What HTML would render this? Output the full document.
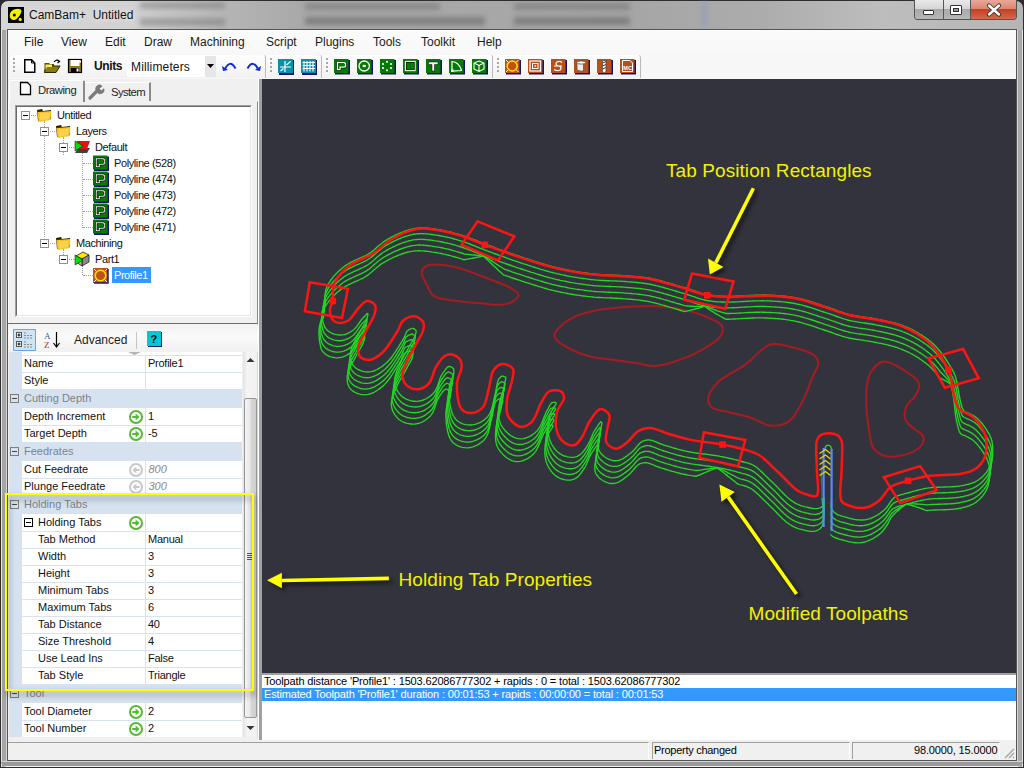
<!DOCTYPE html>
<html><head><meta charset="utf-8">
<style>
*{margin:0;padding:0;box-sizing:border-box}
html,body{width:1024px;height:768px;overflow:hidden;background:#2a2a2a}
body{font-family:"Liberation Sans",sans-serif;position:relative;font-size:12px;color:#000}
.a{position:absolute;white-space:nowrap}
svg{position:absolute;overflow:visible}
.mi{top:35px;font-size:12px;color:#1a1a1a;line-height:14px}
.canvas{left:262px;top:79px;width:754px;height:594px;background:#33333d}
.t11{font-size:11px;line-height:13px;letter-spacing:-0.15px}
.lab{position:absolute;font-size:11px;line-height:13px;color:#111;white-space:nowrap}
</style></head><body>
<div class="a" style="left:0;top:0;width:1024px;height:768px;border-radius:8px 8px 0 0;background:linear-gradient(90deg,#d6d6d6 0,#d2d2d2 130px,#b4b4b4 230px,#a9a9a9 300px,#a6a6a6 640px,#acacac 760px,#bdbdbd 880px,#b5b5b5 1024px);border:1px solid #2e2e2e"></div>
<div class="a" style="left:140px;top:2px;width:85px;height:7px;background:rgba(110,110,110,0.45);filter:blur(2.5px)"></div>
<div class="a" style="left:140px;top:18px;width:85px;height:8px;background:rgba(110,110,110,0.45);filter:blur(2.5px)"></div>
<div class="a" style="left:305px;top:3px;width:135px;height:7px;background:rgba(80,80,80,0.35);filter:blur(2.5px)"></div>
<div class="a" style="left:305px;top:17px;width:180px;height:8px;background:rgba(70,70,70,0.4);filter:blur(2.5px)"></div>
<div class="a" style="left:514px;top:3px;width:116px;height:7px;background:rgba(80,80,80,0.35);filter:blur(2.5px)"></div>
<div class="a" style="left:514px;top:17px;width:116px;height:8px;background:rgba(70,70,70,0.4);filter:blur(2.5px)"></div>
<div class="a" style="left:703px;top:0px;width:3px;height:28px;background:rgba(120,150,200,0.6);filter:blur(2.5px)"></div>
<div class="a" style="left:1px;top:30px;width:6px;height:737px;background:linear-gradient(90deg,#e6e6e6 0,#e6e6e6 1px,#a5a5a5 1px,#a5a5a5 5px,#d6d6d6 5px)"></div>
<div class="a" style="left:1017px;top:30px;width:6px;height:737px;background:linear-gradient(90deg,#d8d8d8 0,#d8d8d8 1px,#a8a8a8 1px,#a8a8a8 5px,#e6e6e6 5px)"></div>
<div class="a" style="left:1px;top:761px;width:1022px;height:6px;background:linear-gradient(#d4d4d4 0,#d4d4d4 1px,#999 1px,#9c9c9c 5px,#f0f0f0 5px);border-radius:0 0 6px 6px"></div>
<svg style="left:8px;top:7px" width="16" height="16"><rect width="16" height="16" fill="#000"/><path d="M3,12 C0.5,9 2,4 6,2.5 C9.5,1 14,1.5 13.5,4.5 C13,7 11,9.5 9,11.5 C7,13.5 4.5,13.5 3,12Z" fill="#f2f200"/><circle cx="6.3" cy="8" r="1.5" fill="#000"/><circle cx="12.2" cy="12.4" r="1.6" fill="#f2f200"/></svg>
<div class="a" style="left:29px;top:8px;font-size:12px;line-height:14px;color:#111;text-shadow:0 0 6px rgba(255,255,255,0.9)">CamBam+&nbsp;&nbsp;Untitled</div>
<div class="a" style="left:914px;top:0;width:103px;height:20px;border:1px solid #555;border-top:none;border-radius:0 0 4px 4px;overflow:hidden"><div class="a" style="left:0;top:0;width:28px;height:19px;background:linear-gradient(#e9e9e9,#d6d6d6 45%,#a9a9a9 50%,#b7b7b7)"></div><div class="a" style="left:28px;top:0;width:1px;height:19px;background:#555"></div><div class="a" style="left:29px;top:0;width:26px;height:19px;background:linear-gradient(#e9e9e9,#d6d6d6 45%,#a9a9a9 50%,#b7b7b7)"></div><div class="a" style="left:55px;top:0;width:1px;height:19px;background:#555"></div><div class="a" style="left:56px;top:0;width:47px;height:19px;background:linear-gradient(#e9a89a,#dd8672 45%,#c8401f 50%,#d2694f)"></div></div>
<div class="a" style="left:923px;top:10px;width:11px;height:5px;background:#fff;border:1px solid #333;border-radius:1px"></div>
<div class="a" style="left:950px;top:5px;width:12px;height:10px;background:#fff;border:1px solid #333;border-radius:1px"></div><div class="a" style="left:953px;top:8px;width:6px;height:4px;background:#999;border:1px solid #333"></div>
<svg style="left:987px;top:4px" width="14" height="12"><path d="M2,1.5 L12,10.5 M12,1.5 L2,10.5" stroke="#333" stroke-width="4.2" stroke-linecap="round"/><path d="M2,1.5 L12,10.5 M12,1.5 L2,10.5" stroke="#fff" stroke-width="2.4" stroke-linecap="round"/></svg>
<div class="a" style="left:7px;top:29px;width:1010px;height:732px;border:1px solid #555;background:#f0f0f0"></div><div class="a" style="left:8px;top:30px;width:1008px;height:730px;border-left:1px solid #fff;border-top:1px solid #fff"></div>
<div class="a" style="left:8px;top:30px;width:1008px;height:24px;background:linear-gradient(#fbfbfb,#f8f8f8)"></div>
<div class="a mi" style="left:24px">File</div>
<div class="a mi" style="left:61px">View</div>
<div class="a mi" style="left:105px">Edit</div>
<div class="a mi" style="left:144px">Draw</div>
<div class="a mi" style="left:190px">Machining</div>
<div class="a mi" style="left:266px">Script</div>
<div class="a mi" style="left:315px">Plugins</div>
<div class="a mi" style="left:373px">Tools</div>
<div class="a mi" style="left:421px">Toolkit</div>
<div class="a mi" style="left:477px">Help</div>
<div class="a" style="left:8px;top:54px;width:1008px;height:25px;background:#f7f7f7"></div>
<div class="a" style="left:10px;top:55px;width:256px;height:23px;border-radius:3px 3px 0 0;background:linear-gradient(#fdfdfd,#f8f8f8 50%,#f2f2f2);border-right:1px solid #b9b9b9"></div>
<div class="a" style="left:13px;top:58px;width:2px;height:14px;background:repeating-linear-gradient(#a8a8a8 0 2px,transparent 2px 4px)"></div>
<div class="a" style="left:267px;top:55px;width:55px;height:23px;border-radius:3px 3px 0 0;background:linear-gradient(#fdfdfd,#f8f8f8 50%,#f2f2f2);border-right:1px solid #b9b9b9"></div>
<div class="a" style="left:270px;top:58px;width:2px;height:14px;background:repeating-linear-gradient(#a8a8a8 0 2px,transparent 2px 4px)"></div>
<div class="a" style="left:323px;top:55px;width:170px;height:23px;border-radius:3px 3px 0 0;background:linear-gradient(#fdfdfd,#f8f8f8 50%,#f2f2f2);border-right:1px solid #b9b9b9"></div>
<div class="a" style="left:326px;top:58px;width:2px;height:14px;background:repeating-linear-gradient(#a8a8a8 0 2px,transparent 2px 4px)"></div>
<div class="a" style="left:494px;top:55px;width:147px;height:23px;border-radius:3px 3px 0 0;background:linear-gradient(#fdfdfd,#f8f8f8 50%,#f2f2f2);border-right:1px solid #b9b9b9"></div>
<div class="a" style="left:497px;top:58px;width:2px;height:14px;background:repeating-linear-gradient(#a8a8a8 0 2px,transparent 2px 4px)"></div>
<svg style="left:24px;top:59px" width="12" height="14"><path d="M0.75,0.75 H7.5 L10.75,4 V13.25 H0.75Z" fill="#fff" stroke="#000" stroke-width="1.5"/><path d="M7.5,0.75 V4 H10.75" fill="none" stroke="#000" stroke-width="1"/></svg>
<svg style="left:44px;top:59px" width="17" height="14"><path d="M0.5,4 H5 L6,5 H10 V13.5 H0.5Z" fill="#5a5000"/><path d="M2,7 H16 L12,13.5 H0.5Z" fill="#8a7d10" stroke="#2a2500" stroke-width="1"/><path d="M1.5,5.5 H8 V8 H3 L1.5,11Z" fill="#f8f060"/><path d="M10,3 Q12,0 15,2" stroke="#000" stroke-width="1.2" fill="none"/><path d="M13.5,1 L15.5,2.5 L13.5,4" stroke="#000" stroke-width="1.2" fill="none"/></svg>
<svg style="left:68px;top:59px" width="15" height="15"><rect x="0.5" y="0.5" width="13" height="13" fill="#8a7d10" stroke="#000" stroke-width="1.2"/><rect x="2.5" y="1" width="9" height="6" fill="#fff"/><rect x="3" y="9" width="8" height="4.5" fill="#000"/><rect x="8.5" y="9.5" width="2" height="3" fill="#fff"/><rect x="11" y="1.5" width="2" height="2" fill="#fff"/></svg>
<div class="a" style="left:94px;top:59px;font-size:12px;font-weight:bold;line-height:14px;color:#111;letter-spacing:-0.4px">Units</div>
<div class="a" style="left:127px;top:56px;width:89px;height:21px;background:#fff"></div>
<div class="a" style="left:205px;top:56px;width:11px;height:21px;background:#e6e6e6"></div>
<svg style="left:207px;top:64px" width="7" height="4"><path d="M0,0 H7 L3.5,4Z" fill="#000"/></svg>
<div class="a" style="left:131px;top:60px;font-size:12px;line-height:14px;color:#111;letter-spacing:0.15px">Millimeters</div>
<svg style="left:222px;top:61px" width="16" height="10"><path d="M3,8 Q8,-2 13.5,7.5" stroke="#0a28e0" stroke-width="2" fill="none"/><path d="M0,5 L1,10 L6,9Z" fill="#0a28e0"/></svg>
<svg style="left:246px;top:61px" width="16" height="10"><path d="M1.5,7.5 Q7,-2 12,8" stroke="#0a28e0" stroke-width="2" fill="none"/><path d="M15,5 L14,10 L9,9Z" fill="#0a28e0"/></svg>
<svg style="left:278px;top:59px" width="16" height="16"><rect x="1" y="1" width="15" height="15" fill="#141470"/><rect width="15" height="14" fill="#0891a8"/><path d="M7,2 V13 M2,8 H13 M8.5,6 L12.5,2.5 M2.5,12 L5.5,9.5" stroke="#fff" stroke-width="1.2"/></svg>
<svg style="left:301px;top:59px" width="16" height="16"><rect x="1" y="1" width="15" height="15" fill="#141470"/><rect width="15" height="14" fill="#0891a8"/><path d="M3,2 V12.5 M6,2 V12.5 M9,2 V12.5 M12,2 V12.5 M1.5,3.5 H14 M1.5,6.5 H14 M1.5,9.5 H14" stroke="#fff" stroke-width="1.1"/><rect x="1.5" y="3" width="12" height="9" fill="none"/></svg>
<svg style="left:334px;top:59px" width="16" height="16"><rect x="1" y="1" width="15" height="14.5" fill="#141470"/><rect width="14.5" height="14" fill="#047a04"/><path d="M2.5,2.5 H10 Q12.5,2.5 12.5,5 V7 Q12.5,9 10,9 H7 V11.5 H2.5Z" fill="#fff" stroke="#000" stroke-width="0.6"/><path d="M4,4 H9.5 Q11,4 11,5.5 V6.5 Q11,7.5 9.5,7.5 H5.5 V10 H4Z" fill="#047a04"/></svg>
<svg style="left:357px;top:59px" width="16" height="16"><rect x="1" y="1" width="15" height="14.5" fill="#141470"/><rect width="14.5" height="14" fill="#047a04"/><ellipse cx="7.2" cy="7" rx="5.2" ry="5" fill="none" stroke="#fff" stroke-width="1.3"/><ellipse cx="7.2" cy="7" rx="1.8" ry="1.2" fill="#fff"/></svg>
<svg style="left:380px;top:59px" width="16" height="16"><rect x="1" y="1" width="15" height="14.5" fill="#141470"/><rect width="14.5" height="14" fill="#047a04"/><circle cx="7" cy="2.8" r="1.1" fill="#fff"/><circle cx="11" cy="5" r="1.1" fill="#fff"/><circle cx="11" cy="9" r="1.1" fill="#fff"/><circle cx="7" cy="11.3" r="1.1" fill="#fff"/><circle cx="3" cy="9" r="1.1" fill="#fff"/><circle cx="3" cy="5" r="1.1" fill="#fff"/></svg>
<svg style="left:403px;top:59px" width="16" height="16"><rect x="1" y="1" width="15" height="14.5" fill="#141470"/><rect width="14.5" height="14" fill="#047a04"/><rect x="2.5" y="2.5" width="9.5" height="9" fill="none" stroke="#fff" stroke-width="1.3"/><rect x="3.3" y="3.3" width="8" height="7.5" fill="none" stroke="#000" stroke-width="0.6"/></svg>
<svg style="left:426px;top:59px" width="16" height="16"><rect x="1" y="1" width="15" height="14.5" fill="#141470"/><rect width="14.5" height="14" fill="#047a04"/><path d="M2.5,3 H12 V5.5 H8.5 V12 H6 V5.5 H2.5Z" fill="#fff" stroke="#000" stroke-width="0.5"/></svg>
<svg style="left:449px;top:59px" width="16" height="16"><rect x="1" y="1" width="15" height="14.5" fill="#141470"/><rect width="14.5" height="14" fill="#047a04"/><path d="M3,12 V2.5 Q10,3 12.5,11.5 Z" fill="none" stroke="#fff" stroke-width="1.2"/><rect x="2" y="10.5" width="2.5" height="2.5" fill="#fff"/></svg>
<svg style="left:472px;top:59px" width="16" height="16"><rect x="1" y="1" width="15" height="14.5" fill="#141470"/><rect width="14.5" height="14" fill="#047a04"/><path d="M7,2 L12,4 V10 L7,12.5 L2,10 V4Z M2,4 L7,6.5 L12,4 M7,6.5 V12.5" fill="none" stroke="#fff" stroke-width="1.1"/></svg>
<svg style="left:505px;top:59px" width="16" height="16"><rect x="1" y="1" width="15" height="14.5" fill="#141470"/><rect width="14.5" height="14" fill="#b8501c"/><circle cx="7.2" cy="7" r="5" fill="#c0501c" stroke="#ffe800" stroke-width="1.5"/><path d="M1,1 L3,3 M13.5,1 L11.5,3 M1,13 L3,11 M13.5,13 L11.5,11" stroke="#fff"/></svg>
<svg style="left:528px;top:59px" width="16" height="16"><rect x="1" y="1" width="15" height="14.5" fill="#141470"/><rect width="14.5" height="14" fill="#b8501c"/><rect x="2" y="2" width="10.5" height="10" fill="none" stroke="#fff" stroke-width="1.2"/><rect x="4.5" y="4.5" width="5.5" height="5" fill="none" stroke="#fff" stroke-width="1"/><rect x="6.5" y="6.3" width="1.6" height="1.5" fill="#fff"/></svg>
<svg style="left:551px;top:59px" width="16" height="16"><rect x="1" y="1" width="15" height="14.5" fill="#141470"/><rect width="14.5" height="14" fill="#b8501c"/><path d="M11,3.5 Q9,1.5 6,3 Q4,4.5 6,6.5 L9,7.5 Q11,9 9,11 Q6,12.5 3,10.5 M3,7 H11" fill="none" stroke="#fff" stroke-width="1.2"/></svg>
<svg style="left:574px;top:59px" width="16" height="16"><rect x="1" y="1" width="15" height="14.5" fill="#141470"/><rect width="14.5" height="14" fill="#b8501c"/><path d="M3,3.5 V11 Q7,13.5 11.5,11 V3.5" fill="#eee" stroke="#555" stroke-width="0.8"/><ellipse cx="7.2" cy="3.5" rx="4.3" ry="1.6" fill="#fff" stroke="#555" stroke-width="0.8"/><path d="M9,5 V12 Q10.5,11.5 11.5,11 V4.5Z" fill="#b8501c"/></svg>
<svg style="left:597px;top:59px" width="16" height="16"><rect x="1" y="1" width="15" height="14.5" fill="#141470"/><rect width="14.5" height="14" fill="#b8501c"/><path d="M5.5,1.5 H9 V12.5 L7.2,14 L5.5,12.5Z" fill="#fff" stroke="#333" stroke-width="0.6"/><path d="M5.5,4 L9,2.5 M5.5,7 L9,5.5 M5.5,10 L9,8.5" stroke="#333" stroke-width="1"/></svg>
<svg style="left:620px;top:59px" width="16" height="16"><rect x="1" y="1" width="15" height="14.5" fill="#141470"/><rect width="14.5" height="14" fill="#b8501c"/><path d="M2.5,1.5 H10 L12.5,4 V12.5 H2.5Z" fill="none" stroke="#fff" stroke-width="1"/><text x="3.3" y="11" font-family="Liberation Sans" font-weight="bold" font-size="5.5" fill="#fff">MC</text></svg>
<div class="a" style="left:8px;top:79px;width:250px;height:662px;background:#f0f0f0"></div>
<div class="a" style="left:8px;top:101px;width:250px;height:223px;border:1px solid #fff;border-right:1px solid #8a8a8a;background:#fff"></div>
<div class="a" style="left:9px;top:101px;width:248px;height:222px;background:#f0f0f0"></div>
<div class="a" style="left:9px;top:80px;width:76px;height:22px;border:1px solid #fff;border-right:2px solid #8a8a8a;border-bottom:none;background:#f0f0f0;border-radius:2px 2px 0 0"></div>
<div class="a" style="left:85px;top:82px;width:66px;height:19px;border-top:1px solid #fff;border-right:2px solid #8a8a8a;background:#f0f0f0"></div>
<svg style="left:18.5px;top:82px" width="13" height="14"><path d="M1.5,0.5 H8.5 L11.5,3.5 V12.5 H1.5 Z" fill="#fff" stroke="#000" stroke-width="1.3"/></svg>
<div class="a lab" style="left:38px;top:84px;font-size:11.3px;line-height:13px;color:#1e1e1e;letter-spacing:-0.45px">Drawing</div>
<svg style="left:88px;top:84px" width="18" height="16"><path d="M2,14 L9,7" stroke="#7a7a7a" stroke-width="3.2" stroke-linecap="round"/><path d="M8.5,7.5 A4,4 0 1 1 14.5,2.2 L11.6,4.6 L13.2,6.6 L16,4.3 A4,4 0 0 1 8.5,7.5Z" fill="#7a7a7a"/></svg>
<div class="a lab" style="left:111px;top:86px;font-size:11.3px;line-height:13px;color:#1e1e1e;letter-spacing:-0.6px">System</div>
<div class="a" style="left:15px;top:105px;width:237px;height:212px;border:1px solid;border-color:#a0a0a0 #fff #fff #a0a0a0;background:#fff"></div><div class="a" style="left:16px;top:106px;width:235px;height:210px;border:1px solid;border-color:#696969 #e3e3e3 #e3e3e3 #696969;background:#fff"></div>
<div class="a" style="left:44px;top:121px;width:1px;height:116px;border-left:1px dotted #a0a0a0"></div>
<div class="a" style="left:63px;top:137px;width:1px;height:18px;border-left:1px dotted #a0a0a0"></div>
<div class="a" style="left:82px;top:153px;width:1px;height:75px;border-left:1px dotted #a0a0a0"></div>
<div class="a" style="left:63px;top:249px;width:1px;height:10px;border-left:1px dotted #a0a0a0"></div>
<div class="a" style="left:82px;top:265px;width:1px;height:10px;border-left:1px dotted #a0a0a0"></div>
<div class="a" style="left:21px;top:111px;width:9px;height:9px;border:1px solid #919191;background:#fff"></div><div class="a" style="left:23px;top:115px;width:5px;height:1px;background:#000"></div>
<div class="a" style="left:31px;top:115px;width:5px;height:1px;border-top:1px dotted #a0a0a0"></div>
<svg style="left:36px;top:107px" width="17" height="16"><path d="M1,3 L6,2 L7,4 L15,3 L15,12 L2,14 Z" fill="#2b2000"/><path d="M1.5,5 L15.5,4 L14.5,13 L2.5,15 Z" fill="#f7c01f"/><path d="M4,6 L14,5.5 L13.3,12 L3.5,13.5 Z" fill="#fbd24b"/></svg>
<div class="a lab" style="left:57px;top:109px;letter-spacing:-0.4px">Untitled</div>
<div class="a" style="left:40px;top:127px;width:9px;height:9px;border:1px solid #919191;background:#fff"></div><div class="a" style="left:42px;top:131px;width:5px;height:1px;background:#000"></div>
<div class="a" style="left:50px;top:131px;width:5px;height:1px;border-top:1px dotted #a0a0a0"></div>
<svg style="left:55px;top:123px" width="17" height="16"><path d="M1,3 L6,2 L7,4 L15,3 L15,12 L2,14 Z" fill="#2b2000"/><path d="M1.5,5 L15.5,4 L14.5,13 L2.5,15 Z" fill="#f7c01f"/><path d="M4,6 L14,5.5 L13.3,12 L3.5,13.5 Z" fill="#fbd24b"/></svg>
<div class="a lab" style="left:76px;top:125px;letter-spacing:-0.4px">Layers</div>
<div class="a" style="left:59px;top:143px;width:9px;height:9px;border:1px solid #919191;background:#fff"></div><div class="a" style="left:61px;top:147px;width:5px;height:1px;background:#000"></div>
<div class="a" style="left:69px;top:147px;width:5px;height:1px;border-top:1px dotted #a0a0a0"></div>
<svg style="left:74px;top:139px" width="17" height="16"><path d="M4,9 L16,9 L13,14 L1,14Z" fill="#404040"/><path d="M3,2 L16,2 L13,10 L1,10Z" fill="#e81010"/><path d="M1,2 L9,7 L1,12Z" fill="#00dd00" stroke="#003300" stroke-width="0.6"/></svg>
<div class="a lab" style="left:95px;top:141px;letter-spacing:-0.4px">Default</div>
<div class="a" style="left:83px;top:163px;width:10px;height:1px;border-top:1px dotted #a0a0a0"></div>
<svg style="left:93px;top:155px" width="16" height="16"><rect x="1" y="1.5" width="15" height="14.5" fill="#141470"/><rect x="0" y="0.5" width="14.5" height="14" fill="#047a04"/><path d="M2.5,3 H10 Q12.5,3 12.5,5.5 V7.5 Q12.5,10 10,10 H7 V12.5 H2.5Z" fill="#fff" stroke="#000" stroke-width="0.6"/><path d="M4,4.5 H9.5 Q11,4.5 11,6 V7 Q11,8.5 9.5,8.5 H5.5 V11 H4Z" fill="#047a04" stroke="#000" stroke-width="0.6"/></svg>
<div class="a lab" style="left:114px;top:157px;letter-spacing:-0.4px">Polyline (528)</div>
<div class="a" style="left:83px;top:179px;width:10px;height:1px;border-top:1px dotted #a0a0a0"></div>
<svg style="left:93px;top:171px" width="16" height="16"><rect x="1" y="1.5" width="15" height="14.5" fill="#141470"/><rect x="0" y="0.5" width="14.5" height="14" fill="#047a04"/><path d="M2.5,3 H10 Q12.5,3 12.5,5.5 V7.5 Q12.5,10 10,10 H7 V12.5 H2.5Z" fill="#fff" stroke="#000" stroke-width="0.6"/><path d="M4,4.5 H9.5 Q11,4.5 11,6 V7 Q11,8.5 9.5,8.5 H5.5 V11 H4Z" fill="#047a04" stroke="#000" stroke-width="0.6"/></svg>
<div class="a lab" style="left:114px;top:173px;letter-spacing:-0.4px">Polyline (474)</div>
<div class="a" style="left:83px;top:195px;width:10px;height:1px;border-top:1px dotted #a0a0a0"></div>
<svg style="left:93px;top:187px" width="16" height="16"><rect x="1" y="1.5" width="15" height="14.5" fill="#141470"/><rect x="0" y="0.5" width="14.5" height="14" fill="#047a04"/><path d="M2.5,3 H10 Q12.5,3 12.5,5.5 V7.5 Q12.5,10 10,10 H7 V12.5 H2.5Z" fill="#fff" stroke="#000" stroke-width="0.6"/><path d="M4,4.5 H9.5 Q11,4.5 11,6 V7 Q11,8.5 9.5,8.5 H5.5 V11 H4Z" fill="#047a04" stroke="#000" stroke-width="0.6"/></svg>
<div class="a lab" style="left:114px;top:189px;letter-spacing:-0.4px">Polyline (473)</div>
<div class="a" style="left:83px;top:211px;width:10px;height:1px;border-top:1px dotted #a0a0a0"></div>
<svg style="left:93px;top:203px" width="16" height="16"><rect x="1" y="1.5" width="15" height="14.5" fill="#141470"/><rect x="0" y="0.5" width="14.5" height="14" fill="#047a04"/><path d="M2.5,3 H10 Q12.5,3 12.5,5.5 V7.5 Q12.5,10 10,10 H7 V12.5 H2.5Z" fill="#fff" stroke="#000" stroke-width="0.6"/><path d="M4,4.5 H9.5 Q11,4.5 11,6 V7 Q11,8.5 9.5,8.5 H5.5 V11 H4Z" fill="#047a04" stroke="#000" stroke-width="0.6"/></svg>
<div class="a lab" style="left:114px;top:205px;letter-spacing:-0.4px">Polyline (472)</div>
<div class="a" style="left:83px;top:227px;width:10px;height:1px;border-top:1px dotted #a0a0a0"></div>
<svg style="left:93px;top:219px" width="16" height="16"><rect x="1" y="1.5" width="15" height="14.5" fill="#141470"/><rect x="0" y="0.5" width="14.5" height="14" fill="#047a04"/><path d="M2.5,3 H10 Q12.5,3 12.5,5.5 V7.5 Q12.5,10 10,10 H7 V12.5 H2.5Z" fill="#fff" stroke="#000" stroke-width="0.6"/><path d="M4,4.5 H9.5 Q11,4.5 11,6 V7 Q11,8.5 9.5,8.5 H5.5 V11 H4Z" fill="#047a04" stroke="#000" stroke-width="0.6"/></svg>
<div class="a lab" style="left:114px;top:221px;letter-spacing:-0.4px">Polyline (471)</div>
<div class="a" style="left:40px;top:239px;width:9px;height:9px;border:1px solid #919191;background:#fff"></div><div class="a" style="left:42px;top:243px;width:5px;height:1px;background:#000"></div>
<div class="a" style="left:50px;top:243px;width:5px;height:1px;border-top:1px dotted #a0a0a0"></div>
<svg style="left:55px;top:235px" width="17" height="16"><path d="M1,3 L6,2 L7,4 L15,3 L15,12 L2,14 Z" fill="#2b2000"/><path d="M1.5,5 L15.5,4 L14.5,13 L2.5,15 Z" fill="#f7c01f"/><path d="M4,6 L14,5.5 L13.3,12 L3.5,13.5 Z" fill="#fbd24b"/></svg>
<div class="a lab" style="left:76px;top:237px;letter-spacing:-0.4px">Machining</div>
<div class="a" style="left:59px;top:255px;width:9px;height:9px;border:1px solid #919191;background:#fff"></div><div class="a" style="left:61px;top:259px;width:5px;height:1px;background:#000"></div>
<div class="a" style="left:69px;top:259px;width:5px;height:1px;border-top:1px dotted #a0a0a0"></div>
<svg style="left:74px;top:251px" width="17" height="16"><path d="M2,5 L9,1 L15,4 L8,8Z" fill="#ffe800" stroke="#222" stroke-width="0.8"/><path d="M8,8 L15,4 L15,11 L8,15Z" fill="#8a8a8a" stroke="#222" stroke-width="0.8"/><path d="M2,5 L8,8 L8,15 L2,11Z" fill="#b0b0b0" stroke="#222" stroke-width="0.8"/><path d="M1,4 L9,9 L1,14Z" fill="#00dd00" stroke="#003300" stroke-width="0.6"/></svg>
<div class="a lab" style="left:95px;top:253px;letter-spacing:-0.4px">Part1</div>
<div class="a" style="left:83px;top:275px;width:10px;height:1px;border-top:1px dotted #a0a0a0"></div>
<svg style="left:93px;top:268px" width="16" height="16"><rect x="0" y="0" width="15" height="15" fill="#c0501c"/><path d="M15,1 V15 H1" stroke="#1a1a8a" stroke-width="1.5" fill="none"/><circle cx="7.5" cy="7.5" r="5.3" fill="#c0501c" stroke="#ffe800" stroke-width="1.6"/><path d="M1,1 L3,3 M14,1 L12,3 M1,14 L3,12 M14,14 L12,12" stroke="#fff" stroke-width="1"/></svg>
<div class="a" style="left:112px;top:267px;width:39px;height:16px;background:#3399ff"></div>
<div class="a lab" style="left:114px;top:269px;color:#fff;letter-spacing:-0.45px">Profile1</div>
<div class="a" style="left:8px;top:323px;width:250px;height:1px;background:#6d6d6d"></div>
<div class="a" style="left:8px;top:324px;width:250px;height:28px;background:linear-gradient(#f1f1f1,#fafafa 40%,#f1f1f1)"></div>
<div class="a" style="left:13px;top:329px;width:23px;height:22px;background:#cde4f7;border:1px solid #66a7e8"></div>
<svg style="left:16px;top:332px" width="18" height="16"><rect x="0.5" y="0.5" width="5" height="5" fill="#fff" stroke="#555"/><path d="M1.5,3 h3 M3,1.5 v3" stroke="#000"/><rect x="0.5" y="9.5" width="5" height="5" fill="#fff" stroke="#555"/><path d="M1.5,12 h3 M3,10.5 v3" stroke="#000"/><path d="M8,1 h3 M8,3.5 h8 M8,6 h8 M8,10 h3 M8,12.5 h8 M8,15 h8" stroke="#8a8a8a" stroke-dasharray="2,1"/></svg>
<svg style="left:44px;top:331px" width="18" height="18"><text x="0" y="8" font-family="Liberation Serif" font-size="9" fill="#3a5aa0">A</text><text x="0" y="17" font-family="Liberation Serif" font-size="9" fill="#a04040">Z</text><path d="M12.5,1 V15 M9.5,12 L12.5,16 L15.5,12" stroke="#000" stroke-width="1.2" fill="none"/></svg>
<div class="a lab" style="left:74px;top:333px;font-size:12px;line-height:14px;color:#1e1e1e">Advanced</div>
<div class="a" style="left:136px;top:332px;width:1px;height:17px;background:#c5c5c5"></div>
<svg style="left:147px;top:331px" width="16" height="17"><rect x="1" y="1" width="14" height="15" fill="#1a1a7a"/><rect x="0" y="0" width="14" height="15" fill="#00c8d8"/><text x="3.5" y="12" font-family="Liberation Sans" font-weight="bold" font-size="11" fill="#000">?</text></svg>
<div class="a" style="left:8px;top:352px;width:250px;height:389px;background:#f0f0f0"></div>
<div class="a" style="left:9px;top:352px;width:233px;height:385px;background:#d6e2f0"></div>
<div class="a" style="left:22px;top:352px;width:220px;height:3px;background:#fff"></div>
<div class="a" style="left:22px;top:355px;width:220px;height:1px;background:#d6e2f0"></div>
<svg style="left:128px;top:352px" width="14" height="3"><path d="M0,0 H13 L6.5,3Z" fill="#b4b4b4"/></svg>
<div class="a" style="left:22px;top:355px;width:220px;height:17px;background:#fff"></div>
<div class="a" style="left:22px;top:355px;width:220px;height:1px;background:#d9e3ef"></div>
<div class="a" style="left:145px;top:355px;width:1px;height:17px;background:#d9e3ef"></div>
<div class="a lab" style="left:24px;top:357px;">Name</div>
<div class="a lab" style="left:148px;top:357px;letter-spacing:-0.25px">Profile1</div>
<div class="a" style="left:22px;top:372px;width:220px;height:17px;background:#fff"></div>
<div class="a" style="left:22px;top:372px;width:220px;height:1px;background:#d9e3ef"></div>
<div class="a" style="left:145px;top:372px;width:1px;height:17px;background:#d9e3ef"></div>
<div class="a lab" style="left:24px;top:374px;">Style</div>
<div class="a" style="left:10px;top:394px;width:9px;height:9px;border:1px solid #7d7d7d"></div><div class="a" style="left:12px;top:398px;width:5px;height:1px;background:#444"></div>
<div class="a lab" style="left:24px;top:392px;color:#7d838c">Cutting Depth</div>
<div class="a" style="left:22px;top:408px;width:220px;height:17px;background:#fff"></div>
<div class="a" style="left:145px;top:408px;width:1px;height:17px;background:#d9e3ef"></div>
<div class="a lab" style="left:24px;top:410px;">Depth Increment</div>
<svg style="left:129px;top:409.5px" width="15" height="15"><circle cx="7" cy="7" r="6" fill="#fff" stroke="#55b935" stroke-width="2"/><path d="M3.3,5.9 H6.6 V3.4 L10.6,7 L6.6,10.6 V8.1 H3.3Z" fill="#55b935"/></svg>
<div class="a lab" style="left:148px;top:410px;letter-spacing:-0.25px">1</div>
<div class="a" style="left:22px;top:425px;width:220px;height:17px;background:#fff"></div>
<div class="a" style="left:22px;top:425px;width:220px;height:1px;background:#d9e3ef"></div>
<div class="a" style="left:145px;top:425px;width:1px;height:17px;background:#d9e3ef"></div>
<div class="a lab" style="left:24px;top:427px;">Target Depth</div>
<svg style="left:129px;top:426.5px" width="15" height="15"><circle cx="7" cy="7" r="6" fill="#fff" stroke="#55b935" stroke-width="2"/><path d="M3.3,5.9 H6.6 V3.4 L10.6,7 L6.6,10.6 V8.1 H3.3Z" fill="#55b935"/></svg>
<div class="a lab" style="left:148px;top:427px;letter-spacing:-0.25px">-5</div>
<div class="a" style="left:10px;top:447px;width:9px;height:9px;border:1px solid #7d7d7d"></div><div class="a" style="left:12px;top:451px;width:5px;height:1px;background:#444"></div>
<div class="a lab" style="left:24px;top:445px;color:#7d838c">Feedrates</div>
<div class="a" style="left:22px;top:461px;width:220px;height:17px;background:#fff"></div>
<div class="a" style="left:145px;top:461px;width:1px;height:17px;background:#d9e3ef"></div>
<div class="a lab" style="left:24px;top:463px;">Cut Feedrate</div>
<svg style="left:129px;top:462.5px" width="15" height="15"><circle cx="7" cy="7" r="6" fill="#fff" stroke="#c8c8c8" stroke-width="2"/><path d="M10.7,5.9 H7.4 V3.4 L3.4,7 L7.4,10.6 V8.1 H10.7Z" fill="#c8c8c8"/></svg>
<div class="a lab" style="left:148.5px;top:463px;font-style:italic;color:#8a8a8a">800</div>
<div class="a" style="left:22px;top:478px;width:220px;height:17px;background:#fff"></div>
<div class="a" style="left:22px;top:478px;width:220px;height:1px;background:#d9e3ef"></div>
<div class="a" style="left:145px;top:478px;width:1px;height:17px;background:#d9e3ef"></div>
<div class="a lab" style="left:24px;top:480px;">Plunge Feedrate</div>
<svg style="left:129px;top:479.5px" width="15" height="15"><circle cx="7" cy="7" r="6" fill="#fff" stroke="#c8c8c8" stroke-width="2"/><path d="M10.7,5.9 H7.4 V3.4 L3.4,7 L7.4,10.6 V8.1 H10.7Z" fill="#c8c8c8"/></svg>
<div class="a lab" style="left:148.5px;top:480px;font-style:italic;color:#8a8a8a">300</div>
<div class="a" style="left:10px;top:500px;width:9px;height:9px;border:1px solid #7d7d7d"></div><div class="a" style="left:12px;top:504px;width:5px;height:1px;background:#444"></div>
<div class="a lab" style="left:24px;top:498px;color:#7d838c">Holding Tabs</div>
<div class="a" style="left:22px;top:514px;width:220px;height:17px;background:#fff"></div>
<div class="a" style="left:145px;top:514px;width:1px;height:17px;background:#d9e3ef"></div>
<div class="a" style="left:24px;top:518px;width:9px;height:9px;border:1px solid #000"></div><div class="a" style="left:26px;top:522px;width:5px;height:1px;background:#000"></div>
<div class="a lab" style="left:38px;top:516px;">Holding Tabs</div>
<svg style="left:129px;top:515.5px" width="15" height="15"><circle cx="7" cy="7" r="6" fill="#fff" stroke="#55b935" stroke-width="2"/><path d="M3.3,5.9 H6.6 V3.4 L10.6,7 L6.6,10.6 V8.1 H3.3Z" fill="#55b935"/></svg>
<div class="a" style="left:22px;top:531px;width:220px;height:17px;background:#fff"></div>
<div class="a" style="left:22px;top:531px;width:220px;height:1px;background:#d9e3ef"></div>
<div class="a" style="left:145px;top:531px;width:1px;height:17px;background:#d9e3ef"></div>
<div class="a lab" style="left:38px;top:533px;">Tab Method</div>
<div class="a lab" style="left:148px;top:533px;letter-spacing:-0.25px">Manual</div>
<div class="a" style="left:22px;top:548px;width:220px;height:17px;background:#fff"></div>
<div class="a" style="left:22px;top:548px;width:220px;height:1px;background:#d9e3ef"></div>
<div class="a" style="left:145px;top:548px;width:1px;height:17px;background:#d9e3ef"></div>
<div class="a lab" style="left:38px;top:550px;">Width</div>
<div class="a lab" style="left:148px;top:550px;letter-spacing:-0.25px">3</div>
<div class="a" style="left:22px;top:565px;width:220px;height:17px;background:#fff"></div>
<div class="a" style="left:22px;top:565px;width:220px;height:1px;background:#d9e3ef"></div>
<div class="a" style="left:145px;top:565px;width:1px;height:17px;background:#d9e3ef"></div>
<div class="a lab" style="left:38px;top:567px;">Height</div>
<div class="a lab" style="left:148px;top:567px;letter-spacing:-0.25px">3</div>
<div class="a" style="left:22px;top:582px;width:220px;height:17px;background:#fff"></div>
<div class="a" style="left:22px;top:582px;width:220px;height:1px;background:#d9e3ef"></div>
<div class="a" style="left:145px;top:582px;width:1px;height:17px;background:#d9e3ef"></div>
<div class="a lab" style="left:38px;top:584px;">Minimum Tabs</div>
<div class="a lab" style="left:148px;top:584px;letter-spacing:-0.25px">3</div>
<div class="a" style="left:22px;top:599px;width:220px;height:17px;background:#fff"></div>
<div class="a" style="left:22px;top:599px;width:220px;height:1px;background:#d9e3ef"></div>
<div class="a" style="left:145px;top:599px;width:1px;height:17px;background:#d9e3ef"></div>
<div class="a lab" style="left:38px;top:601px;">Maximum Tabs</div>
<div class="a lab" style="left:148px;top:601px;letter-spacing:-0.25px">6</div>
<div class="a" style="left:22px;top:616px;width:220px;height:17px;background:#fff"></div>
<div class="a" style="left:22px;top:616px;width:220px;height:1px;background:#d9e3ef"></div>
<div class="a" style="left:145px;top:616px;width:1px;height:17px;background:#d9e3ef"></div>
<div class="a lab" style="left:38px;top:618px;">Tab Distance</div>
<div class="a lab" style="left:148px;top:618px;letter-spacing:-0.25px">40</div>
<div class="a" style="left:22px;top:633px;width:220px;height:17px;background:#fff"></div>
<div class="a" style="left:22px;top:633px;width:220px;height:1px;background:#d9e3ef"></div>
<div class="a" style="left:145px;top:633px;width:1px;height:17px;background:#d9e3ef"></div>
<div class="a lab" style="left:38px;top:635px;">Size Threshold</div>
<div class="a lab" style="left:148px;top:635px;letter-spacing:-0.25px">4</div>
<div class="a" style="left:22px;top:650px;width:220px;height:17px;background:#fff"></div>
<div class="a" style="left:22px;top:650px;width:220px;height:1px;background:#d9e3ef"></div>
<div class="a" style="left:145px;top:650px;width:1px;height:17px;background:#d9e3ef"></div>
<div class="a lab" style="left:38px;top:652px;">Use Lead Ins</div>
<div class="a lab" style="left:148px;top:652px;letter-spacing:-0.25px">False</div>
<div class="a" style="left:22px;top:667px;width:220px;height:17px;background:#fff"></div>
<div class="a" style="left:22px;top:667px;width:220px;height:1px;background:#d9e3ef"></div>
<div class="a" style="left:145px;top:667px;width:1px;height:17px;background:#d9e3ef"></div>
<div class="a lab" style="left:38px;top:669px;">Tab Style</div>
<div class="a lab" style="left:148px;top:669px;letter-spacing:-0.25px">Triangle</div>
<div class="a" style="left:10px;top:689px;width:9px;height:9px;border:1px solid #7d7d7d"></div><div class="a" style="left:12px;top:693px;width:5px;height:1px;background:#444"></div>
<div class="a lab" style="left:24px;top:687px;color:#7d838c">Tool</div>
<div class="a" style="left:22px;top:703px;width:220px;height:17px;background:#fff"></div>
<div class="a" style="left:145px;top:703px;width:1px;height:17px;background:#d9e3ef"></div>
<div class="a lab" style="left:24px;top:705px;">Tool Diameter</div>
<svg style="left:129px;top:704.5px" width="15" height="15"><circle cx="7" cy="7" r="6" fill="#fff" stroke="#55b935" stroke-width="2"/><path d="M3.3,5.9 H6.6 V3.4 L10.6,7 L6.6,10.6 V8.1 H3.3Z" fill="#55b935"/></svg>
<div class="a lab" style="left:148px;top:705px;letter-spacing:-0.25px">2</div>
<div class="a" style="left:22px;top:720px;width:220px;height:17px;background:#fff"></div>
<div class="a" style="left:22px;top:720px;width:220px;height:1px;background:#d9e3ef"></div>
<div class="a" style="left:145px;top:720px;width:1px;height:17px;background:#d9e3ef"></div>
<div class="a lab" style="left:24px;top:722px;">Tool Number</div>
<svg style="left:129px;top:721.5px" width="15" height="15"><circle cx="7" cy="7" r="6" fill="#fff" stroke="#55b935" stroke-width="2"/><path d="M3.3,5.9 H6.6 V3.4 L10.6,7 L6.6,10.6 V8.1 H3.3Z" fill="#55b935"/></svg>
<div class="a lab" style="left:148px;top:722px;letter-spacing:-0.25px">2</div>
<div class="a" style="left:22px;top:737px;width:220px;height:0px;background:#d9e3ef"></div>
<div class="a" style="left:243px;top:352px;width:15px;height:385px;background:linear-gradient(90deg,#e3e3e3,#f5f5f5 30%,#f0f0f0)"></div>
<div class="a" style="left:257px;top:352px;width:1px;height:385px;background:#d8d8d8"></div>
<svg style="left:246px;top:357px" width="9" height="6"><path d="M0.5,5 L4.5,1 L8.5,5Z" fill="#333"/></svg>
<svg style="left:246px;top:725px" width="9" height="6"><path d="M0.5,1 L4.5,5 L8.5,1Z" fill="#333"/></svg>
<div class="a" style="left:244px;top:398px;width:13px;height:320px;border:1px solid #979797;border-radius:2px;background:linear-gradient(90deg,#f4f4f4,#e8e8e8 45%,#d6d6d6 55%,#cfcfcf)"></div>
<div class="a" style="left:247px;top:553px;width:6px;height:7px;background:repeating-linear-gradient(#555 0 1px,transparent 1px 2px)"></div>
<div class="a" style="left:8px;top:737px;width:250px;height:4px;background:#f0f0f0"></div>
<div class="a" style="left:5px;top:493px;width:248.5px;height:197.5px;border:2.5px solid #ffff00;filter:drop-shadow(2px 4px 3px rgba(0,0,0,0.45))"></div>
<div class="a" style="left:258px;top:79px;width:4px;height:662px;background:linear-gradient(90deg,#fff 0,#fff 1px,#a0a0a0 1px,#a0a0a0 100%)"></div>
<div class="a canvas"></div>
<svg class="a" style="left:0;top:0" width="1024" height="768" viewBox="0 0 1024 768">
<defs><path id="ct" d="M332.8,301.0C333.7,296.4 331.8,289.4 334.0,284.0C336.6,277.7 342.8,271.0 349.0,266.0C355.8,260.5 366.5,257.8 374.0,253.0C380.7,248.7 385.2,242.9 392.0,239.0C399.4,234.8 409.0,230.3 417.0,229.0C423.9,227.8 430.1,229.0 437.0,230.0C444.4,231.1 452.3,233.0 460.0,235.4C468.2,237.9 475.9,241.5 484.8,244.8C495.2,248.6 506.9,253.0 518.6,256.9C531.1,261.0 544.9,265.6 557.7,268.6C569.6,271.4 581.2,273.2 592.8,274.5C604.0,275.8 615.8,275.6 626.0,276.4C634.7,277.1 641.7,277.4 650.0,279.0C659.3,280.8 669.7,284.2 679.3,286.9C688.7,289.6 698.5,293.7 707.2,295.3C714.6,296.7 720.0,296.8 728.0,297.0C739.0,297.3 755.1,295.3 767.2,295.7C777.7,296.0 786.8,296.7 796.5,298.6C806.4,300.6 816.7,304.5 825.8,307.4C833.9,310.0 840.6,313.0 848.7,315.0C857.5,317.2 868.0,317.9 876.9,319.8C885.1,321.5 893.1,322.9 900.3,325.6C907.0,328.1 913.4,331.3 919.0,335.0C924.2,338.4 928.6,341.8 933.0,346.7C938.5,352.8 945.5,364.0 948.3,369.7C949.8,372.8 949.9,374.1 950.7,377.2C951.9,382.0 952.7,390.4 954.2,396.0C955.5,400.7 956.0,405.4 958.9,408.8C962.0,412.5 968.9,413.2 973.0,417.0C977.6,421.2 982.6,428.6 984.7,433.4C986.1,436.6 986.4,438.9 986.5,442.2C986.7,446.6 986.6,452.9 984.7,457.4C982.8,461.8 979.2,466.3 975.3,469.0C971.4,471.7 967.0,472.6 961.2,473.8C952.6,475.5 938.0,474.6 928.4,476.0C920.7,477.1 914.4,478.9 908.0,480.8C902.0,482.5 895.8,483.4 891.0,486.7C886.1,490.0 883.6,497.2 879.0,500.8C874.8,504.1 870.0,507.0 865.0,507.8C859.9,508.6 852.9,507.1 848.7,505.5C845.6,504.4 843.0,503.7 841.4,500.8C838.4,495.3 841.6,480.1 841.6,470.0C841.6,460.2 843.3,446.7 841.6,441.0C840.8,438.3 839.8,436.8 838.0,435.5C835.9,434.0 832.0,433.2 829.0,433.2C826.0,433.2 822.1,433.9 820.0,435.5C818.3,436.8 817.5,438.3 816.8,441.0C815.3,446.5 816.8,458.9 816.8,468.0C816.8,477.2 820.0,492.7 816.8,495.7C815.1,497.3 811.8,495.9 809.0,495.3C805.5,494.5 801.7,493.4 797.7,490.8C791.7,486.9 784.6,478.1 778.0,472.0C771.6,466.1 764.8,458.4 758.6,454.7C753.9,451.9 750.2,451.3 745.0,449.8C738.5,447.9 730.8,446.1 722.5,444.5C712.6,442.6 699.2,441.7 689.4,439.6C681.4,437.9 674.8,435.7 668.0,433.7C661.8,431.8 655.6,428.1 650.3,427.9C646.0,427.7 642.2,428.7 638.6,430.8C634.4,433.2 631.0,439.4 627.0,442.5C623.5,445.2 619.5,448.9 616.0,448.8C612.7,448.6 607.9,445.6 606.4,442.5C604.7,439.1 606.8,433.4 607.3,428.8C607.8,424.2 610.8,418.4 609.3,415.0C608.0,412.1 603.4,408.6 600.5,409.0C596.9,409.4 592.8,416.5 589.8,421.0C586.6,425.8 584.9,432.7 582.0,437.0C579.8,440.3 577.7,444.0 574.8,445.0C572.0,445.9 567.8,444.8 565.0,443.0C561.7,440.8 558.4,436.2 557.0,431.6C555.3,426.2 555.6,417.8 557.0,412.0C558.2,406.8 563.9,401.8 564.0,398.0C564.0,395.4 562.9,392.7 561.0,391.5C558.5,389.9 552.2,389.8 549.0,391.5C545.7,393.2 544.1,397.8 541.6,402.0C538.4,407.5 536.1,417.7 531.8,421.8C528.5,424.9 523.8,427.3 520.0,426.7C515.8,426.0 510.2,420.5 508.0,416.0C505.8,411.6 506.5,405.5 507.0,400.0C507.6,393.8 511.0,386.5 512.0,380.8C512.7,376.4 514.6,371.8 513.0,369.0C511.4,366.2 505.8,363.7 502.5,364.0C499.4,364.2 495.9,366.9 493.7,370.0C490.7,374.2 490.6,382.4 488.8,388.6C487.0,394.8 486.5,402.9 483.0,407.0C480.1,410.4 474.8,412.9 471.0,413.0C467.7,413.1 463.8,411.9 461.5,409.0C457.8,404.4 456.6,390.8 457.0,383.3C457.3,377.4 461.3,372.0 461.6,367.7C461.8,364.7 461.7,362.0 460.3,359.9C458.7,357.5 454.6,354.9 451.8,354.4C449.4,354.0 447.0,354.6 444.7,356.0C441.5,358.1 438.2,363.3 435.6,367.7C432.9,372.4 432.2,379.7 429.0,383.3C426.3,386.4 422.2,388.7 418.6,389.2C415.2,389.7 410.9,388.6 408.2,386.6C405.4,384.5 402.9,380.6 402.4,376.8C401.8,372.3 404.8,366.4 406.9,361.2C409.2,355.6 413.2,349.7 416.0,344.3C418.6,339.4 422.2,334.2 423.2,330.0C423.9,327.1 424.4,324.3 423.2,322.1C421.9,319.6 417.9,316.7 414.7,316.3C411.2,315.9 405.9,318.3 403.0,320.8C400.2,323.2 400.0,327.0 397.6,331.0C393.9,337.0 387.6,348.1 382.0,353.0C377.9,356.6 373.0,359.8 369.0,360.0C365.7,360.2 361.3,358.4 359.6,356.0C357.9,353.7 358.0,349.6 358.6,346.0C359.4,341.4 363.4,336.2 366.0,331.0C368.8,325.3 373.8,317.9 375.0,313.0C375.7,309.9 376.2,307.0 375.0,305.0C373.7,302.9 369.6,300.7 367.0,301.0C364.1,301.3 361.4,305.2 358.6,308.0C355.3,311.3 352.4,317.5 349.0,320.0C346.5,321.8 343.7,323.0 341.0,323.0C338.3,323.0 334.8,322.0 333.0,320.0C330.9,317.7 329.9,312.4 330.0,309.0C330.1,306.1 332.1,304.2 332.8,301.0Z"/>
<clipPath id="cv"><rect x="262" y="79" width="754" height="594"/></clipPath>
</defs><g clip-path="url(#cv)">
<path d="M421.7,272.3C422.0,269.6 424.3,267.1 426.4,265.8C428.6,264.5 431.5,264.7 434.6,264.6C438.7,264.5 443.8,264.9 448.7,265.8C454.3,266.8 460.4,268.6 466.3,270.5C472.5,272.5 478.4,274.9 485.0,277.5C492.7,280.5 503.6,284.0 509.6,287.5C513.5,289.8 518.0,292.1 518.4,294.5C518.7,296.4 516.3,298.8 514.3,300.4C511.8,302.4 508.1,303.8 503.8,304.5C497.6,305.5 488.1,303.9 480.3,303.3C472.5,302.7 464.4,302.0 456.9,301.0C450.0,300.1 441.4,299.3 437.0,297.5C434.5,296.5 433.2,295.6 431.7,294.0C430.0,292.1 429.0,289.3 427.6,286.3C425.7,282.4 421.3,276.0 421.7,272.3Z" fill="none" stroke="#a11d21" stroke-width="2.1"/>
<path d="M554.6,333.6C555.9,329.9 563.3,323.3 569.1,319.7C575.4,315.7 582.9,313.4 591.4,311.3C602.1,308.7 616.1,307.5 628.5,306.7C640.8,305.9 653.6,305.4 665.6,306.7C677.1,308.0 689.1,310.5 699.0,314.1C707.7,317.3 719.8,321.3 722.2,326.2C723.7,329.3 722.4,333.2 720.4,336.4C717.5,341.1 709.5,345.5 702.7,349.4C694.7,354.0 683.8,358.6 674.9,361.4C667.2,363.9 659.3,366.0 652.6,366.1C647.2,366.2 643.2,364.2 637.8,363.3C631.1,362.2 623.1,361.2 615.5,360.1C607.6,359.0 599.3,358.8 591.4,356.8C583.2,354.7 573.8,351.1 567.3,347.5C562.3,344.7 556.9,341.1 555.2,338.2C554.3,336.6 554.0,335.4 554.6,333.6Z" fill="none" stroke="#a11d21" stroke-width="2.1"/>
<path d="M708.2,398.0C708.7,393.2 713.7,386.6 718.7,381.6C725.0,375.4 736.1,371.2 744.5,365.2C753.3,358.9 761.9,347.0 770.3,344.5C776.6,342.6 782.4,344.9 789.0,346.4C797.0,348.2 810.4,351.6 814.8,355.8C817.3,358.2 818.3,361.0 818.3,364.0C818.3,367.8 814.6,371.9 812.5,376.9C809.7,383.5 807.0,392.9 803.1,400.3C799.2,407.7 795.0,417.3 789.0,421.4C783.8,425.0 776.5,426.1 770.3,425.6C764.0,425.1 758.3,420.1 751.6,417.9C744.3,415.5 735.2,413.9 728.1,412.0C722.1,410.4 714.9,410.3 711.7,407.3C709.2,405.0 707.8,401.4 708.2,398.0Z" fill="none" stroke="#a11d21" stroke-width="2.1"/>
<path d="M871.0,372.0C873.7,367.9 878.3,362.4 883.0,361.6C888.3,360.7 895.7,365.2 901.5,368.7C907.8,372.5 917.5,378.7 919.0,384.0C920.1,387.8 917.6,391.9 915.6,395.6C913.4,399.7 907.6,402.7 906.0,407.0C904.5,411.2 904.0,416.7 906.0,421.0C908.5,426.4 920.3,431.7 922.6,435.5C923.6,437.2 923.9,438.3 923.7,440.0C923.4,442.3 921.6,445.7 919.0,448.0C915.1,451.4 906.2,454.6 900.0,455.8C894.5,456.9 888.6,457.3 884.0,455.8C879.8,454.4 875.9,451.8 873.4,448.0C870.3,443.2 869.9,434.9 868.7,428.0C867.5,420.6 866.6,412.4 866.3,405.0C866.1,398.1 866.0,390.9 867.0,385.0C867.8,380.1 868.5,375.8 871.0,372.0Z" fill="none" stroke="#a11d21" stroke-width="2.1"/>
<path d="M321.9,316.9 321.6,318.5 321.1,320.3 320.4,322.6 320.2,323.3 319.6,325.7 319.3,327.5 319.1,330.0 319.0,331.5 319.0,333.9 319.0,334.6 319.2,337.2 319.2,337.8 319.5,340.6 319.6,341.2 320.1,344.0 320.2,344.8 320.8,347.3 321.0,348.4 321.7,349.9 322.3,350.8 323.1,351.9 323.6,352.5 324.2,353.1 325.5,354.2 326.1,354.6 326.7,355.0 328.2,355.8 329.3,356.3 331.0,356.9 332.0,357.2 333.8,357.5 334.8,357.7 336.5,357.8 337.6,357.8 339.3,357.6 340.4,357.5 342.0,357.1 343.0,356.8 344.6,356.1 345.4,355.8 347.0,355.0 347.6,354.6 349.1,353.6 349.8,353.1 350.8,352.3 351.3,351.8 352.3,350.7 352.6,350.4 353.6,349.2 353.8,348.9 354.7,347.7 354.8,347.5 355.8,346.2 355.8,346.1 356.7,344.8 357.6,343.5 358.5,342.3 359.2,341.4 360.0,340.5 361.1,339.3 361.2,339.2 362.4,338.0 363.4,336.8 364.1,336.2 364.4,336.3 364.7,336.6 364.7,337.4 364.5,338.6 364.2,340.1 363.9,340.9 363.6,341.8 363.2,342.9 362.6,344.1 362.0,345.4 361.2,346.7 360.5,348.1 359.7,349.5 358.8,351.0 358.8,351.0 358.0,352.5 358.0,352.5 357.2,353.9 357.1,354.0 356.4,355.4 356.3,355.5 355.7,356.8 355.0,358.2 354.2,359.5 353.5,360.8 352.6,362.2 352.6,362.2 351.8,363.6 351.8,363.7 351.0,365.1 350.9,365.2 350.2,366.6 350.1,366.8 349.5,368.1 349.3,368.4 348.8,369.7 348.6,370.1 348.2,371.4 348.1,371.9 347.8,373.2 347.7,373.7 347.4,375.5 347.3,375.9 347.2,377.7 347.2,378.2 347.2,380.0 347.3,380.7 347.5,382.4 347.7,383.3 348.1,384.8 348.3,385.4 348.6,386.0 349.3,387.3 349.8,388.0 350.3,388.6 351.3,389.7 351.8,390.2 352.3,390.6 353.7,391.6 354.6,392.1 356.3,392.9 357.2,393.3 358.9,393.9 359.9,394.2 361.7,394.6 362.9,394.7 364.6,394.8 365.9,394.7 367.3,394.6 368.3,394.4 369.7,394.0 370.5,393.8 371.9,393.2 372.5,393.0 374.0,392.3 374.5,392.0 375.9,391.2 376.3,391.0 377.8,390.0 378.1,389.8 379.5,388.7 379.8,388.6 381.2,387.4 381.4,387.3 382.8,386.1 383.1,385.9 384.0,384.9 384.3,384.7 385.3,383.6 385.5,383.4 386.5,382.3 386.6,382.1 387.6,380.9 387.8,380.8 388.8,379.5 388.9,379.3 389.9,378.0 389.9,377.9 390.9,376.5 391.0,376.4 392.0,374.9 392.0,374.9 393.0,373.4 393.0,373.4 394.0,371.9 394.0,371.8 394.9,370.4 394.9,370.4 395.8,368.9 395.9,368.9 396.7,367.5 396.7,367.5 397.5,366.1 397.6,366.1 398.3,364.8 399.1,363.6 399.7,362.5 399.9,362.3 400.8,360.6 401.0,360.2 401.7,358.5 401.8,358.3 402.5,356.7 403.0,355.4 403.4,354.5 403.7,354.0 404.0,353.7 404.6,353.3 405.4,352.7 406.4,352.2 407.5,351.7 408.5,351.4 409.3,351.1 409.7,351.1 409.9,351.1 410.5,351.4 411.4,351.9 412.1,352.5 412.7,353.1 412.8,353.3 412.8,353.3 412.9,353.7 412.9,354.5 412.7,355.7 412.4,357.1 412.1,358.0 411.8,358.9 411.3,360.0 410.6,361.2 409.9,362.5 409.1,363.9 408.3,365.4 407.4,366.9 407.4,367.0 406.6,368.5 406.5,368.6 405.7,370.1 405.7,370.1 405.0,371.4 404.3,372.7 403.5,374.0 402.7,375.4 401.9,376.8 401.9,376.8 401.0,378.3 401.0,378.3 400.2,379.7 400.2,379.8 399.4,381.2 399.3,381.3 398.6,382.7 398.5,382.8 397.8,384.3 397.7,384.4 397.1,385.8 397.0,386.0 396.4,387.4 396.3,387.5 395.7,389.1 395.0,390.6 395.0,390.7 394.3,392.3 394.3,392.4 393.6,394.0 393.6,394.2 393.0,395.8 392.9,396.0 392.4,397.6 392.3,397.9 391.9,399.5 391.8,399.9 391.5,401.4 391.5,402.0 391.3,403.5 391.3,404.2 391.4,405.6 391.5,406.4 391.8,408.0 392.0,408.8 392.6,410.4 392.8,411.0 393.6,412.6 393.9,413.1 394.8,414.6 395.1,415.1 396.1,416.4 396.6,417.0 397.7,418.1 398.2,418.7 399.4,419.7 400.1,420.2 401.4,421.0 402.1,421.5 403.5,422.1 404.3,422.4 405.8,423.0 406.5,423.2 408.1,423.6 408.8,423.7 410.4,424.0 411.2,424.0 412.8,424.1 413.6,424.1 415.1,424.0 416.2,423.8 417.7,423.5 418.6,423.3 420.2,422.8 420.9,422.5 422.5,421.8 423.1,421.5 424.6,420.6 425.2,420.2 426.6,419.2 427.1,418.8 428.5,417.7 429.0,417.2 430.2,416.0 430.8,415.4 431.6,414.3 432.0,413.6 432.7,412.4 433.0,411.9 433.6,410.6 433.8,410.2 434.3,408.7 434.4,408.5 434.9,407.0 435.0,406.9 435.5,405.3 435.5,405.3 436.0,403.8 436.4,402.4 436.9,401.1 437.3,400.0 437.9,399.0 438.6,397.7 439.5,396.3 440.4,394.9 441.3,393.6 442.2,392.4 443.0,391.3 443.8,390.5 444.4,389.9 444.7,389.7 445.4,389.3 445.9,389.1 446.2,389.1 446.5,389.1 446.7,389.2 447.5,389.5 448.4,390.1 449.3,390.7 450.0,391.3 450.2,391.6 450.4,391.9 450.5,392.4 450.6,393.2 450.7,394.4 450.6,395.7 450.5,396.4 450.3,397.3 449.9,398.4 449.4,399.7 448.8,401.2 448.7,401.3 448.1,402.9 448.0,403.1 447.4,404.7 447.3,405.0 446.8,406.7 446.7,407.1 446.3,408.8 446.2,409.4 446.0,411.1 446.0,411.6 445.9,412.9 445.9,413.1 445.9,414.6 445.9,414.7 445.9,416.3 445.9,416.4 446.0,418.1 446.0,418.2 446.1,419.9 446.1,420.0 446.2,421.8 446.2,421.9 446.4,423.6 446.4,423.8 446.6,425.5 446.7,425.7 446.9,427.4 446.9,427.6 447.2,429.3 447.3,429.4 447.6,431.1 447.6,431.3 448.0,432.8 448.1,433.1 448.5,434.6 448.6,434.9 449.1,436.2 449.2,436.6 449.8,437.8 450.0,438.3 450.6,439.3 450.9,439.9 451.6,440.8 452.2,441.7 453.5,443.0 454.5,443.8 455.9,444.8 457.0,445.4 458.6,446.2 459.6,446.6 461.3,447.1 462.3,447.4 464.0,447.6 465.0,447.7 466.7,447.8 467.8,447.8 469.3,447.6 470.2,447.5 471.8,447.1 472.5,446.9 474.1,446.4 474.8,446.1 476.4,445.4 477.0,445.1 478.5,444.3 479.1,443.9 480.6,442.9 481.1,442.5 482.5,441.4 483.1,440.9 484.3,439.6 484.8,439.0 485.6,437.9 486.1,437.2 486.8,436.0 487.0,435.5 487.6,434.1 487.8,433.7 488.3,432.2 488.4,431.9 488.9,430.3 488.9,430.1 489.4,428.5 489.4,428.3 489.8,426.7 489.8,426.6 490.2,424.9 490.2,424.9 490.5,423.2 490.9,421.6 491.2,420.1 491.6,418.6 491.6,418.5 492.0,417.0 492.1,416.7 492.4,415.1 492.5,414.9 492.8,413.3 492.8,413.2 493.1,411.5 493.1,411.4 493.4,409.7 493.7,408.1 494.0,406.6 494.3,405.2 494.7,404.0 495.0,403.1 495.3,402.3 495.7,401.8 496.3,401.1 497.0,400.3 497.7,399.7 498.4,399.2 498.9,398.9 499.1,398.8 499.1,398.8 499.7,398.9 500.7,399.3 501.6,399.7 502.4,400.2 502.6,400.4 502.6,400.4 502.6,401.3 502.3,402.6 501.9,404.3 501.5,406.1 501.5,406.3 501.1,408.2 500.9,409.4 500.6,410.6 500.2,411.9 499.8,413.3 499.4,414.7 498.9,416.2 498.9,416.2 498.4,417.8 498.4,417.8 497.9,419.3 497.9,419.4 497.4,421.0 497.4,421.1 497.0,422.6 496.9,422.8 496.6,424.3 496.6,424.6 496.3,426.0 496.2,426.3 496.0,427.8 496.0,428.0 495.9,429.6 495.9,429.7 495.7,431.4 495.7,431.5 495.6,433.2 495.6,433.3 495.5,435.0 495.5,435.2 495.5,436.9 495.5,437.2 495.6,438.8 495.6,439.1 495.8,440.7 495.8,441.2 496.1,442.7 496.2,443.2 496.7,444.7 496.9,445.3 497.4,446.7 497.7,447.3 498.5,448.7 498.7,449.1 499.7,450.5 499.9,450.9 501.0,452.2 501.3,452.6 502.5,453.9 502.8,454.2 504.1,455.5 504.4,455.8 505.7,457.0 506.2,457.3 507.5,458.3 508.1,458.7 509.5,459.5 510.2,459.9 511.6,460.5 512.7,460.9 514.0,461.2 514.7,461.4 515.5,461.5 516.9,461.6 518.3,461.6 519.8,461.4 520.9,461.2 522.4,460.8 523.3,460.5 524.8,459.9 525.5,459.7 527.0,458.9 527.6,458.6 529.1,457.7 529.5,457.3 530.9,456.3 531.3,456.0 532.6,454.8 533.2,454.4 534.1,453.4 534.5,452.8 535.4,451.7 535.7,451.3 536.4,450.0 536.6,449.7 537.4,448.3 537.5,448.0 538.2,446.6 538.3,446.4 539.0,444.8 539.0,444.7 539.7,443.1 539.7,443.0 540.3,441.4 540.4,441.4 541.0,439.8 541.6,438.2 542.2,436.8 542.7,435.5 543.3,434.4 543.9,433.3 544.7,431.8 544.8,431.6 545.6,430.1 546.4,428.6 547.1,427.3 547.8,426.4 548.2,425.8 548.5,425.5 548.6,425.5 548.7,425.4 549.3,425.3 550.2,425.1 551.2,425.1 552.2,425.1 552.7,425.2 552.9,425.7 553.0,426.3 552.9,426.6 552.5,427.4 551.8,428.4 550.9,429.7 550.0,431.2 549.9,431.3 549.0,432.8 548.8,433.1 547.9,434.6 547.7,435.0 547.0,436.5 546.8,437.2 546.3,438.8 546.1,439.3 545.8,440.7 545.8,440.9 545.5,442.4 545.5,442.6 545.3,444.1 545.3,444.3 545.1,445.8 545.1,446.0 544.9,447.6 544.9,447.8 544.9,449.4 544.9,449.6 544.8,451.2 544.8,451.4 544.9,453.0 544.9,453.2 545.0,454.8 545.0,455.0 545.2,456.5 545.2,456.8 545.4,458.3 545.5,458.6 545.8,460.0 545.8,460.3 546.2,461.6 546.3,462.0 546.9,463.6 547.0,463.9 547.7,465.5 547.9,465.8 548.6,467.3 548.8,467.6 549.7,469.0 549.9,469.4 550.9,470.7 551.1,471.1 552.1,472.3 552.4,472.7 553.5,473.8 553.9,474.2 554.9,475.1 555.5,475.6 556.6,476.4 557.3,476.8 558.8,477.7 559.6,478.1 561.2,478.8 562.1,479.0 563.8,479.5 564.7,479.7 566.5,480.0 567.6,480.1 569.3,480.1 570.1,480.1 570.8,480.0 572.3,479.7 573.2,479.4 574.1,479.1 575.3,478.5 575.9,478.1 576.5,477.7 577.7,476.9 578.4,476.2 579.4,475.1 579.8,474.6 580.8,473.4 581.1,473.1 582.0,471.7 582.1,471.6 583.1,470.2 584.0,468.7 584.1,468.6 584.9,467.3 585.1,467.0 585.8,465.7 585.9,465.4 586.6,464.0 586.7,463.8 587.3,462.3 587.4,462.2 588.0,460.7 588.0,460.7 588.7,459.1 589.3,457.6 589.9,456.2 590.5,454.9 591.2,453.8 591.9,452.6 592.8,451.3 592.8,451.3 593.8,449.8 594.7,448.3 595.7,446.9 596.7,445.6 597.5,444.5 597.6,444.5 598.2,445.1 598.6,445.6 598.7,445.7 598.7,445.9 598.6,446.7 598.4,447.9 598.0,449.3 597.6,450.9 597.6,451.0 597.1,452.6 597.1,452.8 596.7,454.5 596.6,454.9 596.4,456.4 596.4,456.5 596.2,458.0 595.9,459.4 595.6,461.0 595.6,461.1 595.3,462.7 595.2,462.9 595.0,464.5 594.9,464.9 594.8,466.4 594.8,467.0 594.8,468.4 594.8,469.2 595.0,470.6 595.3,471.7 595.7,472.9 596.0,473.6 596.3,474.2 597.2,475.5 597.8,476.3 599.0,477.6 599.6,478.2 601.0,479.3 601.7,479.8 603.2,480.8 603.9,481.2 605.5,482.0 606.5,482.4 608.1,482.9 609.4,483.3 610.9,483.5 611.8,483.5 612.7,483.5 614.1,483.4 614.9,483.3 615.6,483.1 617.0,482.7 618.0,482.3 619.4,481.6 620.0,481.2 621.4,480.4 621.8,480.1 623.2,479.2 623.4,479.0 624.8,477.9 624.9,477.9 626.3,476.8 627.6,475.8 627.8,475.6 629.0,474.6 629.4,474.2 630.6,473.0 630.8,472.8 631.9,471.5 632.1,471.4 633.2,470.1 633.2,470.0 634.3,468.7 635.3,467.5 636.3,466.4 637.2,465.6 637.8,465.0 638.5,464.6 639.3,464.1 640.2,463.7 641.2,463.4 642.1,463.1 643.0,462.9 644.0,462.8 645.0,462.7 645.9,462.7 646.6,462.8 647.4,462.9 648.3,463.1 649.4,463.5 650.7,463.9 652.0,464.4 653.4,465.0 654.9,465.6 654.9,465.6 656.5,466.3 656.6,466.3 658.1,466.9 658.3,467.0 659.8,467.5 660.1,467.6 661.6,468.1 661.8,468.2 663.2,468.6 664.7,469.0 666.1,469.5 666.1,469.5 667.6,469.9 667.6,469.9 669.1,470.4 669.1,470.4 670.6,470.8 670.6,470.8 672.1,471.3 672.1,471.3 673.7,471.7 673.7,471.7 675.3,472.2 675.3,472.2 676.9,472.6 676.9,472.6 678.5,473.0 678.6,473.0 680.2,473.4 680.3,473.5 682.0,473.8 682.1,473.9 683.8,474.2 683.9,474.2 685.2,474.5 685.3,474.5 686.7,474.8 686.8,474.8 688.3,475.1 688.3,475.1 689.8,475.3 689.9,475.3 691.4,475.6 691.4,475.6 692.9,475.8 693.0,475.8 694.5,476.0 694.6,476.0 696.1,476.2 696.2,476.2 697.7,475.6 697.7,475.6 699.3,475.0 699.3,475.0 700.9,474.3 702.5,473.6 704.1,473.0 705.6,472.3 707.2,471.7 708.7,471.0 710.2,470.4 711.6,469.8 713.1,469.3 714.4,468.7 715.8,468.2 717.1,467.8 718.7,469.0 720.2,470.2 721.8,471.3 723.4,472.5 724.9,473.7 726.4,474.9 727.9,476.1 729.4,477.2 730.8,478.4 732.2,479.5 733.6,480.6 735.0,481.8 736.3,482.9 737.6,483.9 738.8,484.3 738.9,484.3 740.5,484.8 740.6,484.8 742.2,485.2 743.7,485.6 745.0,486.0 746.2,486.4 747.4,486.8 748.5,487.3 749.6,487.8 750.8,488.5 751.6,489.0 752.5,489.6 753.4,490.3 754.4,491.1 755.4,491.9 756.4,492.8 757.5,493.8 758.6,494.8 759.7,495.9 760.8,497.0 761.9,498.1 763.1,499.2 764.2,500.3 764.3,500.4 765.4,501.5 765.4,501.5 766.6,502.6 766.6,502.7 767.8,503.8 767.8,503.8 768.9,504.9 770.0,505.9 771.0,506.9 772.1,507.9 773.2,509.0 774.3,510.2 775.4,511.3 776.5,512.5 777.6,513.7 777.7,513.7 778.8,514.9 778.8,514.9 779.9,516.0 780.0,516.1 781.1,517.2 781.1,517.3 782.2,518.3 782.3,518.4 783.4,519.4 783.5,519.5 784.6,520.5 784.7,520.6 785.8,521.5 785.9,521.7 787.0,522.5 787.2,522.7 788.2,523.5 788.5,523.6 789.5,524.3 789.8,524.5 791.3,525.4 791.6,525.6 793.1,526.4 793.4,526.6 794.8,527.2 795.2,527.4 796.6,528.0 796.9,528.1 798.3,528.6 798.6,528.7 800.0,529.1 800.3,529.2 801.7,529.5 801.9,529.6 803.3,529.9 805.0,530.3 806.9,530.8 807.2,530.8 809.1,531.2 810.0,531.3 811.8,531.4 812.6,531.4 813.5,531.4 815.0,531.1 815.9,530.9 816.8,530.6 817.7,530.2 818.9,529.5 819.6,529.0 820.3,528.4 820.8,527.8 821.3,527.2 821.8,526.6 822.1,526.0 822.5,525.1 822.8,524.2 823.1,523.2 823.2,522.5 823.4,521.3 823.5,520.9 823.6,519.5 823.6,519.2 823.6,517.7 823.6,517.5 823.6,515.9 823.6,515.7 823.5,514.0 823.5,513.9 823.4,512.1 823.4,512.0 823.2,510.2 823.2,510.2 823.0,508.3 823.0,508.3 822.8,506.4 822.7,504.6 822.5,502.8 822.3,501.1 822.2,499.4 822.1,497.9 822.1,496.4 822.1,494.9 822.1,494.8 822.0,493.2 822.0,493.2 822.0,491.5 822.0,491.5 821.9,489.8 821.9,489.8 821.8,488.1 821.8,488.1 821.8,486.4 821.7,484.7 821.6,483.1 821.5,481.4 821.5,479.9 821.5,478.4 821.4,476.9 821.5,475.6 821.5,474.4 821.6,473.2 821.7,472.3 821.8,471.5 821.9,471.0 822.3,469.8 822.6,469.2 822.8,468.9 823.0,468.7 823.3,468.5 823.9,468.2 824.6,468.1 824.9,468.0 825.2,468.1 825.8,468.2 826.4,468.5 826.8,468.8 827.2,469.1 827.5,469.5 827.8,470.1 828.2,471.2 828.4,471.7 828.5,472.4 828.6,473.3 828.7,474.4 828.7,475.6 828.8,476.9 828.8,478.4 828.7,479.9 828.7,481.4 828.6,483.1 828.5,484.7 828.5,486.5 828.4,488.2 828.3,489.9 828.3,489.9 828.2,491.6 828.2,491.7 828.1,493.4 828.1,493.4 828.1,495.1 828.1,495.2 828.0,496.8 828.0,496.9 828.0,498.4 828.0,499.9 827.9,501.3 827.8,502.9 827.7,504.6 827.5,506.3 827.3,508.0 827.1,509.8 827.1,509.8 827.0,511.6 827.0,511.6 826.8,513.3 826.8,513.4 826.6,515.1 826.6,515.2 826.5,516.9 826.5,517.0 826.4,518.7 826.4,518.8 826.3,520.4 826.3,520.6 826.3,522.1 826.3,522.4 826.4,523.8 826.4,524.1 826.5,525.5 826.6,525.8 826.8,527.1 826.9,527.6 827.1,528.7 827.3,529.3 827.7,530.3 828.0,531.1 828.5,532.0 829.1,533.0 830.1,534.2 830.6,534.8 831.2,535.3 832.4,536.2 833.5,536.9 834.9,537.6 835.8,538.0 837.3,538.5 837.8,538.7 839.4,539.2 839.5,539.2 841.1,539.6 842.6,540.0 844.0,540.4 844.1,540.4 845.6,540.9 845.8,540.9 847.4,541.3 847.6,541.4 849.3,541.8 849.5,541.8 851.2,542.1 851.5,542.2 853.2,542.5 853.6,542.5 855.3,542.7 855.7,542.7 857.4,542.8 858.0,542.8 859.6,542.8 860.3,542.7 861.9,542.6 862.6,542.4 864.0,542.1 864.6,542.0 866.1,541.6 866.6,541.4 868.0,540.9 868.4,540.7 869.9,540.1 870.2,540.0 871.7,539.2 872.0,539.1 873.4,538.3 873.6,538.2 875.0,537.3 875.2,537.2 876.6,536.3 876.8,536.1 878.1,535.2 878.2,535.1 879.5,534.1 879.9,533.8 881.0,532.9 881.4,532.4 882.5,531.3 882.8,531.0 883.7,529.8 883.9,529.6 884.9,528.3 885.0,528.2 885.9,526.9 885.9,526.8 886.8,525.5 887.7,524.2 888.5,522.4 889.3,520.7 890.0,519.3 890.7,518.2 891.3,517.3 892.1,516.2 893.1,515.2 894.1,514.1 895.3,513.0 896.6,511.8 897.9,510.6 899.4,509.4 901.0,508.1 902.6,506.8 902.7,506.7 904.3,505.4 904.4,505.3 906.1,503.9 906.1,503.9 907.6,504.3 909.1,504.8 910.5,505.2 912.0,505.6 913.4,506.0 914.9,506.4 916.3,506.9 917.8,507.4 919.3,507.9 920.8,508.4 922.4,509.0 923.9,509.6 925.5,510.2 926.7,510.6 928.0,510.4 929.4,510.3 930.9,510.2 932.4,510.1 933.9,510.0 935.5,510.0 937.2,509.9 938.8,509.9 940.5,509.8 942.2,509.8 942.2,509.8 943.9,509.7 944.0,509.7 945.6,509.7 945.7,509.7 947.3,509.6 947.4,509.6 949.0,509.5 949.1,509.5 950.7,509.4 950.8,509.4 952.3,509.3 952.4,509.3 953.9,509.2 954.1,509.1 955.5,509.0 955.7,508.9 957.0,508.7 957.3,508.7 958.6,508.5 958.7,508.4 960.6,508.1 960.7,508.1 962.5,507.7 962.6,507.6 964.3,507.2 964.5,507.2 966.1,506.8 966.4,506.7 968.0,506.2 968.4,506.1 969.8,505.5 970.3,505.4 971.7,504.7 972.2,504.5 973.5,503.8 974.0,503.5 975.3,502.6 975.8,502.3 977.1,501.4 977.4,501.1 978.7,500.0 979.0,499.7 980.2,498.5 980.5,498.3 981.6,497.0 981.9,496.7 983.0,495.4 983.2,495.1 984.2,493.7 984.4,493.4 985.3,492.0 985.5,491.6 986.3,490.2 986.5,489.8 987.2,488.3 987.3,487.9 987.9,486.5 988.0,486.0 988.4,484.6 988.5,484.2 988.8,482.6 988.9,482.3 989.1,480.7 989.2,480.5 989.3,478.9 989.4,478.6 989.5,477.0 989.5,476.9 989.5,475.3 989.5,475.1 989.6,473.6 989.6,473.4 989.5,472.0 989.5,471.9 989.5,470.5 989.5,470.4 989.4,468.5 989.4,468.2 989.2,466.5 989.1,466.0 988.8,464.4 988.7,463.8 988.2,462.2 988.0,461.6 987.3,459.8 987.2,459.5 986.6,458.3 986.5,458.1 985.9,456.9 985.8,456.7 985.1,455.4 985.0,455.3 984.2,453.9 984.1,453.8 983.3,452.4 983.2,452.3 982.3,450.9 982.2,450.8 981.2,449.4 981.1,449.3 980.1,447.9 980.0,447.8 979.0,446.5 978.9,446.3 977.8,445.1 977.7,444.9 976.6,443.7 976.4,443.5 975.4,442.4 975.2,442.2 974.1,441.2 973.6,440.8 972.3,439.7 971.7,439.3 970.2,438.4 969.7,438.1 968.2,437.3 967.9,437.1 966.3,436.4 966.2,436.4 964.6,435.7 963.2,435.1 962.1,434.6 961.3,434.1 960.8,433.7 960.4,433.4 960.1,432.9 959.7,432.2 959.3,431.3 958.9,430.3 958.5,429.1 958.2,427.8 957.8,426.3 957.4,424.7 957.4,424.6 957.0,423.1 956.7,421.7 956.4,420.3 956.1,418.8 955.8,417.2 955.5,415.4 955.3,412.8 955.0,410.2 955.0,410.2 954.7,407.6 954.7,407.6 954.5,405.1 954.5,405.0 954.2,402.7 954.2,402.5 953.9,400.3 953.8,400.0 953.6,398.0 953.5,397.9 953.1,395.3 953.1,395.3 952.8,393.1 952.7,392.7 952.3,390.7 952.2,390.1 951.7,387.8 951.5,387.2 950.8,384.6 950.7,384.2 950.2,383.8 950.1,383.8 949.6,383.4 949.5,383.3 948.9,382.9 948.8,382.9 948.1,382.4 948.1,382.4 947.3,381.9 947.3,381.9 946.5,381.4 946.4,381.3 945.6,380.8 945.6,380.8 944.7,380.3 944.6,380.3 943.7,379.8 943.7,379.8 942.7,379.3 942.7,379.3 941.7,378.8 941.7,378.7 940.7,378.3 940.7,378.2 939.7,377.8 939.6,377.7 938.6,376.4 938.6,376.3 937.6,375.0 937.5,375.0 936.6,373.7 936.5,373.6 935.5,372.5 935.4,372.4 934.5,371.3 934.4,371.2 933.3,370.0 933.2,369.9 932.1,368.7 931.9,368.6 930.8,367.5 930.7,367.4 929.6,366.3 929.5,366.2 928.3,365.2 928.2,365.1 927.1,364.2 926.9,364.1 925.8,363.1 925.7,363.1 924.5,362.2 924.4,362.1 923.2,361.2 923.1,361.1 921.9,360.3 921.8,360.2 920.5,359.3 920.4,359.3 919.2,358.4 919.1,358.4 917.8,357.5 917.7,357.5 916.3,356.6 916.2,356.6 914.9,355.8 914.8,355.7 913.4,354.9 913.3,354.9 911.9,354.1 911.8,354.0 910.3,353.3 910.2,353.2 908.8,352.5 908.7,352.4 907.2,351.7 907.1,351.7 905.6,351.0 905.5,350.9 904.0,350.3 903.9,350.2 902.3,349.6 902.2,349.5 900.7,348.9 900.6,348.9 899.0,348.3 898.9,348.2 897.5,347.8 897.4,347.7 896.0,347.2 895.8,347.2 894.4,346.8 894.3,346.7 892.9,346.3 892.8,346.3 891.4,345.9 891.3,345.9 889.8,345.5 889.7,345.5 888.3,345.1 888.2,345.1 886.7,344.7 886.7,344.7 885.2,344.4 885.1,344.4 883.6,344.1 883.6,344.0 882.1,343.7 882.1,343.7 880.6,343.4 880.6,343.4 879.0,343.1 877.5,342.8 876.0,342.5 874.5,342.2 874.4,342.2 873.0,341.9 872.9,341.8 871.5,341.6 871.4,341.6 869.9,341.3 869.8,341.3 868.3,341.1 868.3,341.0 866.8,340.8 866.7,340.8 865.2,340.6 865.2,340.6 863.7,340.4 863.7,340.3 862.1,340.1 860.6,339.9 859.1,339.7 857.6,339.5 856.1,339.3 854.7,339.0 853.3,338.8 851.8,338.5 850.5,338.3 849.1,338.0 847.8,337.7 846.6,337.4 845.2,337.1 843.9,336.7 842.5,336.3 841.2,335.9 839.9,335.4 838.5,335.0 837.2,334.5 835.8,334.1 834.5,333.6 833.1,333.1 831.7,332.5 831.7,332.5 830.3,332.0 830.2,332.0 828.8,331.5 828.7,331.5 827.3,331.0 827.2,331.0 825.7,330.5 825.7,330.5 824.2,330.0 824.1,330.0 822.8,329.5 821.4,329.1 820.0,328.6 818.6,328.2 817.2,327.7 815.8,327.2 814.3,326.7 814.3,326.7 812.8,326.2 812.8,326.2 811.3,325.7 811.3,325.7 809.8,325.2 809.8,325.2 808.3,324.7 808.2,324.7 806.7,324.3 806.7,324.2 805.2,323.8 805.1,323.8 803.6,323.3 803.5,323.3 802.1,322.9 802.0,322.9 800.5,322.5 800.4,322.4 798.9,322.0 798.8,322.0 797.3,321.7 797.2,321.6 795.7,321.3 795.6,321.3 794.1,321.0 794.0,320.9 792.4,320.6 792.3,320.6 790.8,320.4 790.7,320.3 789.2,320.1 789.1,320.1 787.6,319.8 787.5,319.8 786.0,319.6 786.0,319.6 784.5,319.4 784.4,319.4 782.9,319.2 782.8,319.2 781.3,319.0 781.2,319.0 779.7,318.9 779.6,318.9 778.1,318.7 778.0,318.7 776.5,318.6 776.5,318.6 774.9,318.5 774.9,318.5 773.3,318.4 773.3,318.4 771.7,318.3 771.7,318.3 770.1,318.2 770.0,318.2 768.5,318.1 768.4,318.1 766.8,318.0 766.8,318.0 765.1,318.0 765.1,318.0 763.5,317.9 763.4,317.9 762.0,317.9 761.9,317.9 760.4,317.8 760.3,317.8 758.9,317.8 758.8,317.9 757.3,317.9 757.2,317.9 755.7,317.9 755.6,317.9 754.1,317.9 754.0,318.0 752.4,318.0 752.4,318.0 750.8,318.1 750.8,318.1 749.2,318.2 749.2,318.2 747.6,318.2 747.6,318.2 746.0,318.3 745.9,318.3 744.3,318.4 744.3,318.4 742.7,318.5 741.1,318.6 739.6,318.7 738.0,318.8 736.5,318.9 734.9,319.0 733.5,319.0 732.0,319.1 730.6,319.1 729.2,319.2 727.9,319.2 726.6,319.2 725.4,319.1 724.2,318.4 722.4,317.4 720.7,316.5 719.1,315.5 717.5,314.6 716.0,313.8 714.6,312.9 713.2,312.0 711.8,311.2 710.4,310.3 709.0,309.4 707.6,308.4 706.2,307.3 704.7,306.2 703.4,306.7 702.2,307.1 700.9,307.5 699.6,307.9 698.3,308.2 696.9,308.6 695.5,309.0 694.1,309.3 692.7,309.7 691.2,310.0 689.7,310.4 688.2,310.7 686.7,311.1 686.7,311.1 685.2,311.4 685.2,311.5 683.7,311.3 683.7,311.3 682.1,310.8 682.1,310.8 680.6,310.3 680.5,310.3 679.0,309.9 679.0,309.8 677.5,309.4 677.4,309.4 676.0,309.0 674.6,308.6 673.1,308.1 671.6,307.7 670.2,307.3 668.7,306.8 667.2,306.4 667.2,306.4 665.7,305.9 665.7,305.9 664.2,305.5 664.2,305.5 662.7,305.1 662.6,305.1 661.2,304.6 661.1,304.6 659.6,304.2 659.6,304.2 658.1,303.8 658.1,303.8 656.6,303.4 656.5,303.4 655.1,303.0 655.0,303.0 653.6,302.7 653.5,302.6 652.0,302.3 651.9,302.3 650.5,302.0 650.4,301.9 649.0,301.6 648.9,301.6 647.5,301.3 647.4,301.3 645.8,301.0 645.7,301.0 644.2,300.8 644.1,300.8 642.6,300.5 642.5,300.5 641.0,300.3 640.9,300.3 639.5,300.1 639.4,300.1 637.9,299.9 637.8,299.9 636.4,299.8 636.3,299.8 634.9,299.6 634.8,299.6 633.4,299.5 633.3,299.5 631.9,299.4 631.8,299.3 630.4,299.2 630.3,299.2 628.8,299.1 628.8,299.1 627.3,299.0 625.8,298.9 624.2,298.8 622.6,298.6 622.6,298.6 621.2,298.5 621.1,298.5 619.7,298.4 619.7,298.4 618.2,298.3 618.2,298.3 616.7,298.2 616.7,298.2 615.2,298.2 615.2,298.2 613.7,298.1 613.7,298.1 612.2,298.0 612.2,298.0 610.7,298.0 610.6,298.0 609.1,297.9 607.6,297.9 606.1,297.8 604.6,297.8 603.0,297.7 601.5,297.6 600.0,297.5 598.5,297.5 597.0,297.4 595.5,297.3 594.0,297.2 592.6,297.0 591.1,296.9 589.7,296.7 588.2,296.6 586.7,296.4 585.2,296.2 583.8,296.0 582.3,295.8 580.8,295.6 579.3,295.4 577.8,295.2 576.4,295.0 574.9,294.8 573.4,294.5 571.9,294.3 570.4,294.0 568.9,293.8 567.4,293.5 566.0,293.2 564.5,292.9 563.0,292.6 561.5,292.3 560.0,292.0 558.5,291.7 557.0,291.3 555.5,291.0 554.1,290.7 552.7,290.3 551.3,290.0 549.9,289.6 548.5,289.3 547.1,288.9 545.7,288.5 544.2,288.1 542.8,287.7 541.4,287.2 539.9,286.8 538.5,286.4 537.0,285.9 535.6,285.5 534.1,285.0 532.7,284.6 531.3,284.1 529.8,283.7 528.4,283.2 526.9,282.7 525.5,282.3 524.1,281.8 522.6,281.3 521.2,280.9 519.8,280.4 518.4,279.9 517.0,279.5 515.5,279.0 514.0,278.5 512.5,278.0 511.0,277.5 509.5,276.9 508.0,276.4 506.5,275.9 505.0,275.4 503.5,274.8 502.0,273.6 500.6,272.2 499.1,270.9 497.6,269.5 496.2,268.1 494.7,266.7 493.3,265.4 491.8,264.0 490.4,262.7 489.0,261.3 487.6,260.0 486.2,258.7 484.8,257.4 483.5,256.1 481.9,256.4 480.5,256.7 479.0,257.0 477.5,257.2 476.1,257.5 474.6,257.8 473.2,258.0 471.7,258.3 471.7,258.3 470.3,258.6 470.2,258.6 468.8,258.8 468.8,258.9 467.3,259.1 467.3,259.1 465.9,259.4 465.8,259.4 464.4,259.7 464.3,259.7 462.9,259.5 462.8,259.4 461.4,258.9 461.3,258.9 459.9,258.4 459.7,258.4 458.3,258.0 458.2,257.9 456.7,257.5 456.6,257.4 455.1,257.0 455.0,257.0 453.5,256.5 453.4,256.5 451.9,256.1 451.8,256.1 450.3,255.6 450.2,255.6 448.7,255.2 448.6,255.2 447.0,254.8 447.0,254.8 445.4,254.4 445.3,254.4 443.8,254.1 443.7,254.1 442.2,253.7 442.1,253.7 440.6,253.4 440.5,253.4 439.0,253.1 438.9,253.1 437.4,252.8 437.3,252.8 435.7,252.5 435.6,252.5 434.1,252.3 434.1,252.3 432.5,252.1 431.0,251.8 431.0,251.8 429.4,251.6 429.4,251.6 427.9,251.4 427.8,251.4 426.2,251.2 426.1,251.2 424.6,251.0 424.4,251.0 422.9,250.9 422.7,250.9 421.2,250.8 420.9,250.8 419.4,250.7 419.1,250.7 417.6,250.7 417.3,250.8 415.7,250.8 415.4,250.9 413.8,251.0 413.5,251.1 411.9,251.3 411.6,251.3 410.1,251.6 409.9,251.7 408.4,252.0 408.2,252.0 406.7,252.4 406.5,252.5 405.0,252.9 404.8,253.0 403.3,253.5 403.1,253.5 401.6,254.0 401.4,254.1 399.9,254.7 399.8,254.7 398.2,255.3 398.1,255.4 396.6,256.0 396.4,256.1 394.9,256.7 394.8,256.8 393.3,257.5 393.2,257.5 391.7,258.2 391.6,258.3 390.2,259.0 390.1,259.0 388.6,259.8 388.5,259.8 387.1,260.6 387.1,260.6 385.7,261.4 385.6,261.4 384.3,262.2 384.1,262.3 382.8,263.1 382.5,263.2 381.2,264.1 381.0,264.2 379.8,265.1 379.6,265.3 378.4,266.2 378.3,266.3 377.1,267.2 377.0,267.3 375.9,268.3 375.8,268.3 374.7,269.3 374.6,269.3 373.5,270.3 372.4,271.3 371.3,272.3 370.2,273.2 369.2,274.0 368.1,274.9 367.0,275.6 365.9,276.4 364.9,277.0 363.8,277.6 362.6,278.3 361.3,278.9 360.0,279.5 358.6,280.1 357.2,280.8 355.7,281.4 354.2,282.1 354.2,282.1 352.7,282.7 352.6,282.8 351.2,283.4 351.1,283.5 349.6,284.2 349.5,284.2 348.1,284.9 347.9,285.0 346.5,285.8 346.3,285.9 345.0,286.6 344.7,286.8 343.4,287.6 343.2,287.7 341.9,288.6 341.7,288.8 340.5,289.7 340.3,289.9 339.0,290.9 338.9,291.0 337.7,292.0 337.6,292.1 336.3,293.2 336.2,293.3 335.0,294.5 334.9,294.6 333.7,295.7 333.6,295.9 332.5,297.1 332.4,297.2 331.2,298.4 331.1,298.5 330.1,299.8 329.9,299.9 328.9,301.2 328.8,301.3 327.8,302.6 327.7,302.8 326.8,304.1 326.7,304.3 325.9,305.5 325.7,305.8 325.0,307.1 324.8,307.3 324.2,308.1 324.0,308.2 323.5,308.7 323.3,308.9 322.8,309.6 322.6,309.9 322.3,310.6 322.2,310.8 322.0,311.5 322.0,311.7 321.9,312.4 321.9,312.6 321.9,313.3 321.9,313.4 322.0,314.1 322.0,314.2 322.0,314.9 322.1,315.6 322.1,316.1 322.0,316.6Z" fill="none" stroke="#22d822" stroke-width="1.35"/>
<path d="M322.7,316.9 322.4,318.2 321.9,319.7 321.2,321.5 321.0,322.1 320.4,324.1 320.1,325.5 319.9,327.6 319.8,328.8 319.8,330.8 319.8,331.4 320.0,333.5 320.0,334.1 320.3,336.3 320.4,336.9 320.9,339.1 321.0,339.7 321.6,341.9 321.8,342.7 322.5,344.2 323.1,345.1 323.9,346.2 324.4,346.8 325.0,347.4 326.3,348.5 326.9,348.9 327.5,349.3 329.0,350.1 330.1,350.6 331.8,351.2 332.8,351.5 334.6,351.8 335.6,352.0 337.3,352.1 338.4,352.1 340.1,351.9 341.2,351.8 342.8,351.4 343.8,351.1 345.4,350.4 346.2,350.1 347.8,349.3 348.4,348.9 349.9,347.9 350.6,347.4 351.6,346.6 352.1,346.1 353.1,345.0 353.4,344.7 354.4,343.5 354.6,343.2 355.5,342.0 355.6,341.8 356.6,340.5 356.6,340.4 357.5,339.1 358.4,337.8 359.3,336.6 360.0,335.7 360.8,334.8 361.9,333.6 362.0,333.5 363.2,332.3 364.2,331.1 364.9,330.5 365.2,330.6 365.5,330.9 365.5,331.7 365.3,332.9 365.0,334.4 364.7,335.2 364.4,336.1 364.0,337.2 363.4,338.4 362.8,339.7 362.0,341.0 361.3,342.4 360.5,343.8 359.6,345.3 359.6,345.3 358.8,346.8 358.8,346.8 358.0,348.2 357.9,348.3 357.2,349.7 357.1,349.8 356.5,351.1 355.8,352.5 355.0,353.8 354.3,355.1 353.4,356.5 353.4,356.5 352.6,357.9 352.6,358.0 351.8,359.4 351.7,359.5 351.0,360.9 350.9,361.1 350.3,362.4 350.1,362.7 349.6,364.0 349.4,364.4 349.0,365.7 348.9,366.2 348.6,367.5 348.5,368.0 348.2,369.8 348.1,370.2 348.0,372.0 348.0,372.5 348.0,374.3 348.1,375.0 348.3,376.7 348.5,377.6 348.9,379.1 349.1,379.7 349.4,380.3 350.1,381.6 350.6,382.3 351.1,382.9 352.1,384.0 352.6,384.5 353.1,384.9 354.5,385.9 355.4,386.4 357.1,387.2 358.0,387.6 359.7,388.2 360.7,388.5 362.5,388.9 363.7,389.0 365.4,389.1 366.7,389.0 368.1,388.9 369.1,388.7 370.5,388.3 371.3,388.1 372.7,387.5 373.3,387.3 374.8,386.6 375.3,386.3 376.7,385.5 377.1,385.3 378.6,384.3 378.9,384.1 380.3,383.0 380.6,382.9 382.0,381.7 382.2,381.6 383.6,380.4 383.9,380.2 384.8,379.2 385.1,379.0 386.1,377.9 386.3,377.7 387.3,376.6 387.4,376.4 388.4,375.2 388.6,375.1 389.6,373.8 389.7,373.6 390.7,372.3 390.7,372.2 391.7,370.8 391.8,370.7 392.8,369.2 392.8,369.2 393.8,367.7 393.8,367.7 394.8,366.2 394.8,366.1 395.7,364.7 395.7,364.7 396.6,363.2 396.7,363.2 397.5,361.8 397.5,361.8 398.3,360.4 398.4,360.4 399.1,359.1 399.9,357.9 400.5,356.8 400.7,356.6 401.6,354.9 401.8,354.5 402.5,352.8 402.6,352.6 403.3,351.0 403.8,349.7 404.2,348.8 404.5,348.3 404.8,348.0 405.4,347.6 406.2,347.0 407.2,346.5 408.3,346.0 409.3,345.7 410.1,345.4 410.5,345.4 410.7,345.4 411.3,345.7 412.2,346.2 412.9,346.8 413.5,347.4 413.6,347.6 413.6,347.6 413.7,348.0 413.7,348.8 413.5,350.0 413.2,351.4 412.9,352.3 412.6,353.2 412.1,354.3 411.4,355.5 410.7,356.8 409.9,358.2 409.1,359.7 408.2,361.2 408.2,361.3 407.4,362.8 407.3,362.9 406.5,364.4 406.5,364.4 405.8,365.7 405.1,367.0 404.3,368.3 403.5,369.7 402.7,371.1 402.7,371.1 401.8,372.6 401.8,372.6 401.0,374.0 401.0,374.1 400.2,375.5 400.1,375.6 399.4,377.0 399.3,377.1 398.6,378.6 398.5,378.7 397.9,380.1 397.8,380.3 397.2,381.7 397.1,381.8 396.5,383.4 395.8,384.9 395.8,385.0 395.1,386.6 395.1,386.7 394.4,388.3 394.4,388.5 393.8,390.1 393.7,390.3 393.2,391.9 393.1,392.2 392.7,393.8 392.6,394.2 392.3,395.7 392.3,396.3 392.1,397.8 392.1,398.5 392.2,399.9 392.3,400.7 392.6,402.3 392.8,403.1 393.4,404.7 393.6,405.3 394.4,406.9 394.7,407.4 395.6,408.9 395.9,409.4 396.9,410.7 397.4,411.3 398.5,412.4 399.0,413.0 400.2,414.0 400.9,414.5 402.2,415.3 402.9,415.8 404.3,416.4 405.1,416.7 406.6,417.3 407.3,417.5 408.9,417.9 409.6,418.0 411.2,418.3 412.0,418.3 413.6,418.4 414.4,418.4 415.9,418.3 417.0,418.1 418.5,417.8 419.4,417.6 421.0,417.1 421.7,416.8 423.3,416.1 423.9,415.8 425.4,414.9 426.0,414.5 427.4,413.5 427.9,413.1 429.3,412.0 429.8,411.5 431.0,410.3 431.6,409.7 432.4,408.6 432.8,407.9 433.5,406.7 433.8,406.2 434.4,404.9 434.6,404.5 435.1,403.0 435.2,402.8 435.7,401.3 435.8,401.2 436.3,399.6 436.3,399.6 436.8,398.1 437.2,396.7 437.7,395.4 438.1,394.3 438.7,393.3 439.4,392.0 440.3,390.6 441.2,389.2 442.1,387.9 443.0,386.7 443.8,385.6 444.6,384.8 445.2,384.2 445.5,384.0 446.2,383.6 446.7,383.4 447.0,383.4 447.3,383.4 447.5,383.5 448.3,383.8 449.2,384.4 450.1,385.0 450.8,385.6 451.0,385.9 451.2,386.2 451.3,386.7 451.4,387.5 451.5,388.7 451.4,390.0 451.3,390.7 451.1,391.6 450.7,392.7 450.2,394.0 449.6,395.5 449.5,395.6 448.9,397.2 448.8,397.4 448.2,399.0 448.1,399.3 447.6,401.0 447.5,401.4 447.1,403.1 447.0,403.7 446.8,405.4 446.8,405.9 446.7,407.2 446.7,407.4 446.7,408.9 446.7,409.0 446.7,410.6 446.7,410.7 446.8,412.4 446.8,412.5 446.9,414.2 446.9,414.3 447.0,416.1 447.0,416.2 447.2,417.9 447.2,418.1 447.4,419.8 447.5,420.0 447.7,421.7 447.7,421.9 448.0,423.6 448.1,423.7 448.4,425.4 448.4,425.6 448.8,427.1 448.9,427.4 449.3,428.9 449.4,429.2 449.9,430.5 450.0,430.9 450.6,432.1 450.8,432.6 451.4,433.6 451.7,434.2 452.4,435.1 453.0,436.0 454.3,437.3 455.3,438.1 456.7,439.1 457.8,439.7 459.4,440.5 460.4,440.9 462.1,441.4 463.1,441.7 464.8,441.9 465.8,442.0 467.5,442.1 468.6,442.1 470.1,441.9 471.0,441.8 472.6,441.4 473.3,441.2 474.9,440.7 475.6,440.4 477.2,439.7 477.8,439.4 479.3,438.6 479.9,438.2 481.4,437.2 481.9,436.8 483.3,435.7 483.9,435.2 485.1,433.9 485.6,433.3 486.4,432.2 486.9,431.5 487.6,430.3 487.8,429.8 488.4,428.4 488.6,428.0 489.1,426.5 489.2,426.2 489.7,424.6 489.7,424.4 490.2,422.8 490.2,422.6 490.6,421.0 490.6,420.9 491.0,419.2 491.0,419.2 491.3,417.5 491.7,415.9 492.0,414.4 492.4,412.9 492.4,412.8 492.8,411.3 492.9,411.0 493.2,409.4 493.3,409.2 493.6,407.6 493.6,407.5 493.9,405.8 493.9,405.7 494.2,404.0 494.5,402.4 494.8,400.9 495.1,399.5 495.5,398.3 495.8,397.4 496.1,396.6 496.5,396.1 497.1,395.4 497.8,394.6 498.5,394.0 499.2,393.5 499.7,393.2 499.9,393.1 499.9,393.1 500.5,393.2 501.5,393.6 502.4,394.0 503.2,394.5 503.4,394.7 503.4,394.7 503.4,395.6 503.1,396.9 502.7,398.6 502.3,400.4 502.3,400.6 501.9,402.5 501.7,403.7 501.4,404.9 501.0,406.2 500.6,407.6 500.2,409.0 499.7,410.5 499.7,410.5 499.2,412.1 499.2,412.1 498.7,413.6 498.7,413.7 498.2,415.3 498.2,415.4 497.8,416.9 497.7,417.1 497.4,418.6 497.4,418.9 497.1,420.3 497.0,420.6 496.8,422.1 496.8,422.3 496.7,423.9 496.7,424.0 496.5,425.7 496.5,425.8 496.4,427.5 496.4,427.6 496.3,429.3 496.3,429.5 496.3,431.2 496.3,431.5 496.4,433.1 496.4,433.4 496.6,435.0 496.6,435.5 496.9,437.0 497.0,437.5 497.5,439.0 497.7,439.6 498.2,441.0 498.5,441.6 499.3,443.0 499.5,443.4 500.5,444.8 500.7,445.2 501.8,446.5 502.1,446.9 503.3,448.2 503.6,448.5 504.9,449.8 505.2,450.1 506.5,451.3 507.0,451.6 508.3,452.6 508.9,453.0 510.3,453.8 511.0,454.2 512.4,454.8 513.5,455.2 514.8,455.5 515.5,455.7 516.3,455.8 517.7,455.9 519.1,455.9 520.6,455.7 521.7,455.5 523.2,455.1 524.1,454.8 525.6,454.2 526.3,454.0 527.8,453.2 528.4,452.9 529.9,452.0 530.3,451.6 531.7,450.6 532.1,450.3 533.4,449.1 534.0,448.7 534.9,447.7 535.3,447.1 536.2,446.0 536.5,445.6 537.2,444.3 537.4,444.0 538.2,442.6 538.3,442.3 539.0,440.9 539.1,440.7 539.8,439.1 539.8,439.0 540.5,437.4 540.5,437.3 541.1,435.7 541.2,435.7 541.8,434.1 542.4,432.5 543.0,431.1 543.5,429.8 544.1,428.7 544.7,427.6 545.5,426.1 545.6,425.9 546.4,424.4 547.2,422.9 547.9,421.6 548.6,420.7 549.0,420.1 549.3,419.8 549.4,419.8 549.5,419.7 550.1,419.6 551.0,419.4 552.0,419.4 553.0,419.4 553.5,419.5 553.7,420.0 553.8,420.6 553.7,420.9 553.3,421.7 552.6,422.7 551.7,424.0 550.8,425.5 550.7,425.6 549.8,427.1 549.6,427.4 548.7,428.9 548.5,429.3 547.8,430.8 547.6,431.5 547.1,433.1 546.9,433.6 546.6,435.0 546.6,435.2 546.3,436.7 546.3,436.9 546.1,438.4 546.1,438.6 545.9,440.1 545.9,440.3 545.7,441.9 545.7,442.1 545.7,443.7 545.7,443.9 545.6,445.5 545.6,445.7 545.7,447.3 545.7,447.5 545.8,449.1 545.8,449.3 546.0,450.8 546.0,451.1 546.2,452.6 546.3,452.9 546.6,454.3 546.6,454.6 547.0,455.9 547.1,456.3 547.7,457.9 547.8,458.2 548.5,459.8 548.7,460.1 549.4,461.6 549.6,461.9 550.5,463.3 550.7,463.7 551.7,465.0 551.9,465.4 552.9,466.6 553.2,467.0 554.3,468.1 554.7,468.5 555.7,469.4 556.3,469.9 557.4,470.7 558.1,471.1 559.6,472.0 560.4,472.4 562.0,473.1 562.9,473.3 564.6,473.8 565.5,474.0 567.3,474.3 568.4,474.4 570.1,474.4 570.9,474.4 571.6,474.3 573.1,474.0 574.0,473.7 574.9,473.4 576.1,472.8 576.7,472.4 577.3,472.0 578.5,471.2 579.2,470.5 580.2,469.4 580.6,468.9 581.6,467.7 581.9,467.4 582.8,466.0 582.9,465.9 583.9,464.5 584.8,463.0 584.9,462.9 585.7,461.6 585.9,461.3 586.6,460.0 586.7,459.7 587.4,458.3 587.5,458.1 588.1,456.6 588.2,456.5 588.8,455.0 588.8,455.0 589.5,453.4 590.1,451.9 590.7,450.5 591.3,449.2 592.0,448.1 592.7,446.9 593.6,445.6 593.6,445.6 594.6,444.1 595.5,442.6 596.5,441.2 597.5,439.9 598.3,438.8 598.4,438.8 599.0,439.4 599.4,439.9 599.5,440.0 599.5,440.2 599.4,441.0 599.2,442.2 598.8,443.6 598.4,445.2 598.4,445.3 597.9,446.9 597.9,447.1 597.5,448.8 597.4,449.2 597.2,450.7 597.2,450.8 597.0,452.3 596.7,453.7 596.4,455.3 596.4,455.4 596.1,457.0 596.0,457.2 595.8,458.8 595.7,459.2 595.6,460.7 595.6,461.3 595.6,462.7 595.6,463.5 595.8,464.9 596.1,466.0 596.5,467.2 596.8,467.9 597.1,468.5 598.0,469.8 598.6,470.6 599.8,471.9 600.4,472.5 601.8,473.6 602.5,474.1 604.0,475.1 604.7,475.5 606.3,476.3 607.3,476.7 608.9,477.2 610.2,477.6 611.7,477.8 612.6,477.8 613.5,477.8 614.9,477.7 615.7,477.6 616.4,477.4 617.8,477.0 618.8,476.6 620.2,475.9 620.8,475.5 622.2,474.7 622.6,474.4 624.0,473.5 624.2,473.3 625.6,472.2 625.7,472.2 627.1,471.1 628.4,470.1 628.6,469.9 629.8,468.9 630.2,468.5 631.4,467.3 631.6,467.1 632.7,465.8 632.9,465.7 634.0,464.4 634.0,464.3 635.1,463.0 636.1,461.8 637.1,460.7 638.0,459.9 638.6,459.3 639.3,458.9 640.1,458.4 641.0,458.0 642.0,457.7 642.9,457.4 643.8,457.2 644.8,457.1 645.8,457.0 646.7,457.0 647.4,457.1 648.2,457.2 649.1,457.4 650.2,457.8 651.5,458.2 652.8,458.7 654.2,459.3 655.7,459.9 655.7,459.9 657.3,460.6 657.4,460.6 658.9,461.2 659.1,461.3 660.6,461.8 660.9,461.9 662.4,462.4 662.6,462.5 664.0,462.9 665.5,463.3 666.9,463.8 666.9,463.8 668.4,464.2 668.4,464.2 669.9,464.7 669.9,464.7 671.4,465.1 671.4,465.1 672.9,465.6 672.9,465.6 674.5,466.0 674.5,466.0 676.1,466.5 676.1,466.5 677.7,466.9 677.7,466.9 679.3,467.3 679.4,467.3 681.0,467.7 681.1,467.8 682.8,468.1 682.9,468.2 684.6,468.5 684.7,468.5 686.0,468.8 686.1,468.8 687.5,469.1 687.6,469.1 689.1,469.4 689.1,469.4 690.6,469.6 690.7,469.6 692.2,469.9 692.2,469.9 693.7,470.1 693.8,470.1 695.3,470.3 695.4,470.3 696.9,470.5 697.0,470.5 698.5,470.3 698.5,470.3 700.1,470.1 700.1,470.1 701.7,469.9 703.3,469.6 704.9,469.4 706.4,469.2 708.0,469.0 709.5,468.7 711.0,468.5 712.4,468.4 713.9,468.2 715.2,468.0 716.6,467.9 717.9,467.8 719.5,468.5 721.0,469.3 722.6,470.0 724.2,470.8 725.7,471.5 727.2,472.3 728.7,473.1 730.2,473.8 731.6,474.6 733.0,475.3 734.4,476.0 735.8,476.8 737.1,477.5 738.4,478.2 739.6,478.6 739.7,478.6 741.3,479.1 741.4,479.1 743.0,479.5 744.5,479.9 745.8,480.3 747.0,480.7 748.2,481.1 749.3,481.6 750.4,482.1 751.6,482.8 752.4,483.3 753.3,483.9 754.2,484.6 755.2,485.4 756.2,486.2 757.2,487.1 758.3,488.1 759.4,489.1 760.5,490.2 761.6,491.3 762.7,492.4 763.9,493.5 765.0,494.6 765.1,494.7 766.2,495.8 766.2,495.8 767.4,496.9 767.4,497.0 768.6,498.1 768.6,498.1 769.7,499.2 770.8,500.2 771.8,501.2 772.9,502.2 774.0,503.3 775.1,504.5 776.2,505.6 777.3,506.8 778.4,508.0 778.5,508.0 779.6,509.2 779.6,509.2 780.7,510.3 780.8,510.4 781.9,511.5 781.9,511.6 783.0,512.6 783.1,512.7 784.2,513.7 784.3,513.8 785.4,514.8 785.5,514.9 786.6,515.8 786.7,516.0 787.8,516.8 788.0,517.0 789.0,517.8 789.3,517.9 790.3,518.6 790.6,518.8 792.1,519.7 792.4,519.9 793.9,520.7 794.2,520.9 795.6,521.5 796.0,521.7 797.4,522.3 797.7,522.4 799.1,522.9 799.4,523.0 800.8,523.4 801.1,523.5 802.5,523.8 802.7,523.9 804.1,524.2 805.8,524.6 807.7,525.1 808.0,525.1 809.9,525.5 810.8,525.6 812.6,525.7 813.4,525.7 814.3,525.7 815.8,525.4 816.7,525.2 817.6,524.9 818.5,524.5 819.7,523.8 820.4,523.3 821.1,522.7 821.6,522.1 822.1,521.5 822.6,520.9 822.9,520.3 823.3,519.4 823.6,518.5 823.9,517.5 824.0,516.8 824.2,515.6 824.3,515.2 824.4,513.8 824.4,513.5 824.4,512.0 824.4,511.8 824.4,510.2 824.4,510.0 824.3,508.3 824.3,508.2 824.2,506.4 824.2,506.3 824.0,504.5 824.0,504.5 823.8,502.6 823.8,502.6 823.6,500.7 823.5,498.9 823.3,497.1 823.1,495.4 823.0,493.7 822.9,492.2 822.9,490.7 822.9,489.2 822.9,489.1 822.8,487.5 822.8,487.5 822.8,485.8 822.8,485.8 822.7,484.1 822.7,484.1 822.6,482.4 822.6,482.4 822.6,480.7 822.5,479.0 822.4,477.4 822.3,475.7 822.3,474.2 822.3,472.7 822.2,471.2 822.3,469.9 822.3,468.7 822.4,467.5 822.5,466.6 822.6,465.8 822.7,465.3 823.1,464.1 823.4,463.5 823.6,463.2 823.8,463.0 824.1,462.8 824.7,462.5 825.4,462.4 825.7,462.3 826.0,462.4 826.6,462.5 827.2,462.8 827.6,463.1 828.0,463.4 828.3,463.8 828.6,464.4 829.0,465.5 829.2,466.0 829.3,466.7 829.4,467.6 829.5,468.7 829.5,469.9 829.6,471.2 829.6,472.7 829.5,474.2 829.5,475.7 829.4,477.4 829.3,479.0 829.3,480.8 829.2,482.5 829.1,484.2 829.1,484.2 829.0,485.9 829.0,486.0 828.9,487.7 828.9,487.7 828.9,489.4 828.9,489.5 828.8,491.1 828.8,491.2 828.8,492.7 828.8,494.2 828.7,495.6 828.6,497.2 828.5,498.9 828.3,500.6 828.1,502.3 827.9,504.1 827.9,504.1 827.8,505.9 827.8,505.9 827.6,507.6 827.6,507.7 827.4,509.4 827.4,509.5 827.3,511.2 827.3,511.3 827.2,513.0 827.2,513.1 827.1,514.7 827.1,514.9 827.1,516.4 827.1,516.7 827.2,518.1 827.2,518.4 827.3,519.8 827.4,520.1 827.6,521.4 827.7,521.9 827.9,523.0 828.1,523.6 828.5,524.6 828.8,525.4 829.3,526.3 829.9,527.3 830.9,528.5 831.4,529.1 832.0,529.6 833.2,530.5 834.3,531.2 835.7,531.9 836.6,532.3 838.1,532.8 838.6,533.0 840.2,533.5 840.3,533.5 841.9,533.9 843.4,534.3 844.8,534.7 844.9,534.7 846.4,535.2 846.6,535.2 848.2,535.6 848.4,535.7 850.1,536.1 850.3,536.1 852.0,536.4 852.3,536.5 854.0,536.8 854.4,536.8 856.1,537.0 856.5,537.0 858.2,537.1 858.8,537.1 860.4,537.1 861.1,537.0 862.7,536.9 863.4,536.7 864.8,536.4 865.4,536.3 866.9,535.9 867.4,535.7 868.8,535.2 869.2,535.0 870.7,534.4 871.0,534.3 872.5,533.5 872.8,533.4 874.2,532.6 874.4,532.5 875.8,531.6 876.0,531.5 877.4,530.6 877.6,530.4 878.9,529.5 879.0,529.4 880.3,528.4 880.7,528.1 881.8,527.2 882.2,526.7 883.3,525.6 883.6,525.3 884.5,524.1 884.7,523.9 885.7,522.6 885.8,522.5 886.7,521.2 886.7,521.1 887.6,519.8 888.5,518.5 889.3,517.0 890.1,515.7 890.8,514.6 891.5,513.7 892.1,513.0 892.9,512.3 893.9,511.5 894.9,510.7 896.1,509.9 897.4,509.1 898.7,508.3 900.2,507.5 901.8,506.7 903.4,505.8 903.5,505.8 905.1,504.9 905.2,504.8 906.9,503.9 906.9,503.9 908.4,503.9 909.9,503.9 911.3,503.9 912.8,503.9 914.2,503.9 915.7,504.0 917.1,504.0 918.6,504.1 920.1,504.2 921.6,504.3 923.2,504.4 924.7,504.6 926.3,504.8 927.5,504.9 928.8,504.7 930.2,504.6 931.7,504.5 933.2,504.4 934.7,504.3 936.3,504.3 938.0,504.2 939.6,504.2 941.3,504.1 943.0,504.1 943.0,504.1 944.7,504.0 944.8,504.0 946.4,504.0 946.5,504.0 948.1,503.9 948.2,503.9 949.8,503.8 949.9,503.8 951.5,503.7 951.6,503.7 953.1,503.6 953.2,503.6 954.7,503.5 954.9,503.4 956.3,503.3 956.5,503.2 957.8,503.0 958.1,503.0 959.4,502.8 959.5,502.7 961.4,502.4 961.5,502.4 963.3,502.0 963.4,501.9 965.1,501.5 965.3,501.5 966.9,501.1 967.2,501.0 968.8,500.5 969.2,500.4 970.6,499.8 971.1,499.7 972.5,499.0 973.0,498.8 974.3,498.1 974.8,497.8 976.1,496.9 976.6,496.6 977.9,495.7 978.2,495.4 979.5,494.3 979.8,494.0 981.0,492.8 981.3,492.6 982.4,491.3 982.7,491.0 983.8,489.7 984.0,489.4 985.0,488.0 985.2,487.7 986.1,486.3 986.3,485.9 987.1,484.5 987.3,484.1 988.0,482.6 988.1,482.2 988.7,480.8 988.8,480.3 989.2,478.9 989.3,478.5 989.6,476.9 989.7,476.6 989.9,475.0 990.0,474.8 990.1,473.2 990.2,472.9 990.3,471.3 990.3,471.2 990.3,469.6 990.3,469.4 990.4,467.9 990.4,467.7 990.3,466.3 990.3,466.2 990.3,464.8 990.3,464.7 990.2,462.8 990.2,462.5 990.0,460.8 989.9,460.3 989.6,458.7 989.5,458.1 989.0,456.5 988.8,455.9 988.1,454.1 988.0,453.8 987.4,452.6 987.3,452.4 986.7,451.2 986.6,451.0 985.9,449.7 985.8,449.6 985.0,448.2 984.9,448.1 984.1,446.7 984.0,446.6 983.1,445.2 983.0,445.1 982.0,443.7 981.9,443.6 980.9,442.2 980.8,442.1 979.8,440.8 979.7,440.6 978.6,439.4 978.5,439.2 977.4,438.0 977.2,437.8 976.2,436.7 976.0,436.5 974.9,435.5 974.4,435.1 973.1,434.0 972.5,433.6 971.0,432.7 970.5,432.4 969.0,431.6 968.7,431.4 967.1,430.7 967.0,430.7 965.4,430.0 964.0,429.4 962.9,428.9 962.1,428.4 961.6,428.0 961.2,427.7 960.9,427.2 960.5,426.5 960.1,425.6 959.7,424.6 959.3,423.4 959.0,422.1 958.6,420.6 958.2,419.0 958.2,418.9 957.8,417.4 957.5,416.0 957.2,414.6 956.9,413.1 956.6,411.5 956.3,409.8 956.1,407.7 955.8,405.5 955.8,405.5 955.5,403.4 955.5,403.4 955.3,401.3 955.3,401.2 955.0,399.3 955.0,399.2 954.7,397.4 954.6,397.2 954.4,395.5 954.3,395.4 953.9,393.3 953.9,393.3 953.6,391.5 953.5,391.2 953.1,389.5 953.0,389.0 952.5,387.2 952.3,386.7 951.6,384.5 951.5,384.2 951.0,383.5 950.9,383.5 950.4,382.7 950.3,382.6 949.7,381.8 949.6,381.8 948.9,380.9 948.9,380.9 948.1,380.0 948.1,379.9 947.3,379.0 947.2,379.0 946.4,378.0 946.4,378.0 945.5,377.0 945.4,377.0 944.5,376.0 944.5,376.0 943.5,375.0 943.5,375.0 942.5,374.0 942.5,374.0 941.5,373.1 941.5,373.0 940.5,372.1 940.4,372.0 939.4,370.7 939.4,370.6 938.4,369.3 938.3,369.3 937.4,368.0 937.3,367.9 936.3,366.8 936.2,366.7 935.3,365.6 935.2,365.5 934.1,364.3 934.0,364.2 932.9,363.0 932.7,362.9 931.6,361.8 931.5,361.7 930.4,360.6 930.3,360.5 929.1,359.5 929.0,359.4 927.9,358.5 927.7,358.4 926.6,357.4 926.5,357.4 925.3,356.5 925.2,356.4 924.0,355.5 923.9,355.4 922.7,354.6 922.6,354.5 921.3,353.6 921.2,353.6 920.0,352.7 919.9,352.7 918.6,351.8 918.5,351.8 917.1,350.9 917.0,350.9 915.7,350.1 915.6,350.0 914.2,349.2 914.1,349.2 912.7,348.4 912.6,348.3 911.1,347.6 911.0,347.5 909.6,346.8 909.5,346.7 908.0,346.0 907.9,346.0 906.4,345.3 906.3,345.2 904.8,344.6 904.7,344.5 903.1,343.9 903.0,343.8 901.5,343.2 901.4,343.2 899.8,342.6 899.7,342.5 898.3,342.1 898.2,342.0 896.8,341.5 896.6,341.5 895.2,341.1 895.1,341.0 893.7,340.6 893.6,340.6 892.2,340.2 892.1,340.2 890.6,339.8 890.5,339.8 889.1,339.4 889.0,339.4 887.5,339.0 887.5,339.0 886.0,338.7 885.9,338.7 884.4,338.4 884.4,338.3 882.9,338.0 882.9,338.0 881.4,337.7 881.4,337.7 879.8,337.4 878.3,337.1 876.8,336.8 875.3,336.5 875.2,336.5 873.8,336.2 873.7,336.1 872.3,335.9 872.2,335.9 870.7,335.6 870.6,335.6 869.1,335.4 869.1,335.3 867.6,335.1 867.5,335.1 866.0,334.9 866.0,334.9 864.5,334.7 864.5,334.6 862.9,334.4 861.4,334.2 859.9,334.0 858.4,333.8 856.9,333.6 855.5,333.3 854.1,333.1 852.6,332.8 851.3,332.6 849.9,332.3 848.6,332.0 847.4,331.7 846.0,331.4 844.7,331.0 843.3,330.6 842.0,330.2 840.7,329.7 839.3,329.3 838.0,328.8 836.6,328.4 835.3,327.9 833.9,327.4 832.5,326.8 832.5,326.8 831.1,326.3 831.0,326.3 829.6,325.8 829.5,325.8 828.1,325.3 828.0,325.3 826.5,324.8 826.5,324.8 825.0,324.3 824.9,324.3 823.6,323.8 822.2,323.4 820.8,322.9 819.4,322.5 818.0,322.0 816.6,321.5 815.1,321.0 815.1,321.0 813.6,320.5 813.6,320.5 812.1,320.0 812.1,320.0 810.6,319.5 810.6,319.5 809.1,319.0 809.0,319.0 807.5,318.6 807.5,318.5 806.0,318.1 805.9,318.1 804.4,317.6 804.3,317.6 802.9,317.2 802.8,317.2 801.3,316.8 801.2,316.7 799.7,316.3 799.6,316.3 798.1,316.0 798.0,315.9 796.5,315.6 796.4,315.6 794.9,315.3 794.8,315.2 793.2,314.9 793.1,314.9 791.6,314.7 791.5,314.6 790.0,314.4 789.9,314.4 788.4,314.1 788.3,314.1 786.8,313.9 786.8,313.9 785.3,313.7 785.2,313.7 783.7,313.5 783.6,313.5 782.1,313.3 782.0,313.3 780.5,313.2 780.4,313.2 778.9,313.0 778.8,313.0 777.3,312.9 777.3,312.9 775.7,312.8 775.7,312.8 774.1,312.7 774.1,312.7 772.5,312.6 772.5,312.6 770.9,312.5 770.8,312.5 769.3,312.4 769.2,312.4 767.6,312.3 767.6,312.3 765.9,312.3 765.9,312.3 764.3,312.2 764.2,312.2 762.8,312.2 762.7,312.2 761.2,312.1 761.1,312.1 759.7,312.1 759.6,312.2 758.1,312.2 758.0,312.2 756.5,312.2 756.4,312.2 754.9,312.2 754.8,312.3 753.2,312.3 753.2,312.3 751.6,312.4 751.6,312.4 750.0,312.5 750.0,312.5 748.4,312.5 748.4,312.5 746.8,312.6 746.7,312.6 745.1,312.7 745.1,312.7 743.5,312.8 741.9,312.9 740.4,313.0 738.8,313.1 737.3,313.2 735.7,313.3 734.3,313.3 732.8,313.4 731.4,313.4 730.0,313.5 728.7,313.5 727.4,313.5 726.2,313.5 725.0,313.1 723.2,312.6 721.5,312.1 719.9,311.6 718.3,311.1 716.8,310.7 715.4,310.2 714.0,309.7 712.6,309.2 711.2,308.7 709.8,308.1 708.4,307.6 707.0,306.9 705.5,306.2 704.2,306.3 703.0,306.4 701.7,306.4 700.4,306.5 699.1,306.5 697.7,306.4 696.3,306.4 694.9,306.4 693.5,306.3 692.0,306.2 690.5,306.2 689.0,306.1 687.5,306.0 687.5,306.0 686.0,305.9 686.0,305.9 684.5,305.6 684.5,305.6 682.9,305.1 682.9,305.1 681.4,304.6 681.3,304.6 679.8,304.2 679.8,304.1 678.3,303.7 678.2,303.7 676.8,303.3 675.4,302.9 673.9,302.4 672.4,302.0 671.0,301.6 669.5,301.1 668.0,300.7 668.0,300.7 666.5,300.2 666.5,300.2 665.0,299.8 665.0,299.8 663.5,299.4 663.4,299.4 662.0,298.9 661.9,298.9 660.4,298.5 660.4,298.5 658.9,298.1 658.9,298.1 657.4,297.7 657.3,297.7 655.9,297.3 655.8,297.3 654.4,297.0 654.3,296.9 652.8,296.6 652.7,296.6 651.3,296.3 651.2,296.2 649.8,295.9 649.7,295.9 648.3,295.6 648.2,295.6 646.6,295.3 646.5,295.3 645.0,295.1 644.9,295.1 643.4,294.8 643.3,294.8 641.8,294.6 641.7,294.6 640.3,294.4 640.2,294.4 638.7,294.2 638.6,294.2 637.2,294.1 637.1,294.1 635.7,293.9 635.6,293.9 634.2,293.8 634.1,293.8 632.7,293.7 632.6,293.6 631.2,293.5 631.1,293.5 629.6,293.4 629.6,293.4 628.1,293.3 626.6,293.2 625.0,293.1 623.4,292.9 623.4,292.9 622.0,292.8 621.9,292.8 620.5,292.7 620.5,292.7 619.0,292.6 619.0,292.6 617.5,292.5 617.5,292.5 616.0,292.5 616.0,292.5 614.5,292.4 614.5,292.4 613.0,292.3 613.0,292.3 611.5,292.3 611.4,292.3 609.9,292.2 608.4,292.2 606.9,292.1 605.4,292.1 603.8,292.0 602.3,291.9 600.8,291.8 599.3,291.8 597.8,291.7 596.3,291.6 594.8,291.5 593.4,291.3 591.9,291.2 590.5,291.0 589.0,290.9 587.5,290.7 586.0,290.5 584.6,290.3 583.1,290.1 581.6,289.9 580.1,289.7 578.6,289.5 577.2,289.3 575.7,289.1 574.2,288.8 572.7,288.6 571.2,288.3 569.7,288.1 568.2,287.8 566.8,287.5 565.3,287.2 563.8,286.9 562.3,286.6 560.8,286.3 559.3,286.0 557.8,285.6 556.3,285.3 554.9,285.0 553.5,284.6 552.1,284.3 550.7,283.9 549.3,283.6 547.9,283.2 546.5,282.8 545.0,282.4 543.6,282.0 542.2,281.5 540.7,281.1 539.3,280.7 537.8,280.2 536.4,279.8 534.9,279.3 533.5,278.9 532.1,278.4 530.6,278.0 529.2,277.5 527.7,277.0 526.3,276.6 524.9,276.1 523.4,275.6 522.0,275.2 520.6,274.7 519.2,274.2 517.8,273.8 516.3,273.3 514.8,272.8 513.3,272.3 511.8,271.8 510.3,271.2 508.8,270.7 507.3,270.2 505.8,269.7 504.3,269.1 502.8,268.3 501.4,267.3 499.9,266.3 498.4,265.4 497.0,264.4 495.5,263.5 494.1,262.5 492.6,261.6 491.2,260.6 489.8,259.7 488.4,258.8 487.0,257.9 485.6,257.0 484.3,256.1 482.7,255.9 481.3,255.8 479.8,255.7 478.3,255.5 476.9,255.4 475.4,255.2 474.0,255.0 472.5,254.9 472.5,254.9 471.1,254.7 471.0,254.7 469.6,254.6 469.6,254.6 468.1,254.4 468.1,254.4 466.7,254.3 466.6,254.3 465.2,254.2 465.1,254.2 463.7,253.8 463.6,253.7 462.2,253.2 462.1,253.2 460.7,252.7 460.5,252.7 459.1,252.3 459.0,252.2 457.5,251.8 457.4,251.7 455.9,251.3 455.8,251.3 454.3,250.8 454.2,250.8 452.7,250.4 452.6,250.4 451.1,249.9 451.0,249.9 449.5,249.5 449.4,249.5 447.8,249.1 447.8,249.1 446.2,248.7 446.1,248.7 444.6,248.4 444.5,248.4 443.0,248.0 442.9,248.0 441.4,247.7 441.3,247.7 439.8,247.4 439.7,247.4 438.2,247.1 438.1,247.1 436.5,246.8 436.4,246.8 434.9,246.6 434.9,246.6 433.3,246.4 431.8,246.1 431.8,246.1 430.2,245.9 430.2,245.9 428.7,245.7 428.6,245.7 427.0,245.5 426.9,245.5 425.4,245.3 425.2,245.3 423.7,245.2 423.5,245.2 422.0,245.1 421.7,245.1 420.2,245.0 419.9,245.0 418.4,245.0 418.1,245.1 416.5,245.1 416.2,245.2 414.6,245.3 414.3,245.4 412.7,245.6 412.4,245.6 410.9,245.9 410.7,246.0 409.2,246.3 409.0,246.3 407.5,246.7 407.3,246.8 405.8,247.2 405.6,247.3 404.1,247.8 403.9,247.8 402.4,248.3 402.2,248.4 400.7,249.0 400.6,249.0 399.0,249.6 398.9,249.7 397.4,250.3 397.2,250.4 395.7,251.0 395.6,251.1 394.1,251.8 394.0,251.8 392.5,252.5 392.4,252.6 391.0,253.3 390.9,253.3 389.4,254.1 389.3,254.1 387.9,254.9 387.9,254.9 386.5,255.7 386.4,255.7 385.1,256.5 384.9,256.6 383.6,257.4 383.3,257.5 382.0,258.4 381.8,258.5 380.6,259.4 380.4,259.6 379.2,260.5 379.1,260.6 377.9,261.5 377.8,261.6 376.7,262.6 376.6,262.6 375.5,263.6 375.4,263.6 374.3,264.6 373.2,265.6 372.1,266.6 371.0,267.5 370.0,268.3 368.9,269.2 367.8,269.9 366.7,270.7 365.7,271.3 364.6,271.9 363.4,272.6 362.1,273.2 360.8,273.8 359.4,274.4 358.0,275.1 356.5,275.7 355.0,276.4 355.0,276.4 353.5,277.0 353.4,277.1 352.0,277.7 351.9,277.8 350.4,278.5 350.3,278.5 348.9,279.2 348.7,279.3 347.3,280.1 347.1,280.2 345.8,280.9 345.5,281.1 344.2,281.9 344.0,282.0 342.7,282.9 342.5,283.1 341.3,284.0 341.1,284.2 339.8,285.2 339.7,285.3 338.5,286.3 338.4,286.4 337.1,287.5 337.0,287.6 335.8,288.8 335.7,288.9 334.5,290.0 334.4,290.2 333.3,291.4 333.2,291.5 332.0,292.7 331.9,292.8 330.9,294.1 330.7,294.2 329.7,295.5 329.6,295.6 328.6,296.9 328.5,297.1 327.6,298.4 327.5,298.6 326.7,299.8 326.5,300.1 325.8,301.4 325.6,301.6 325.0,302.6 324.8,302.9 324.3,303.7 324.1,304.1 323.6,305.2 323.4,305.7 323.1,306.8 323.0,307.2 322.8,308.3 322.8,308.6 322.7,309.8 322.7,310.0 322.7,311.2 322.7,311.3 322.8,312.5 322.8,312.6 322.8,313.7 322.9,314.8 322.9,315.7 322.8,316.4Z" fill="none" stroke="#22d822" stroke-width="1.35"/>
<path d="M323.5,316.9 323.2,317.9 322.7,319.0 322.0,320.4 321.8,320.9 321.2,322.4 320.9,323.6 320.7,325.2 320.6,326.2 320.6,327.7 320.6,328.2 320.8,329.9 320.8,330.3 321.1,332.0 321.2,332.5 321.7,334.2 321.8,334.7 322.4,336.4 322.6,337.0 323.3,338.5 323.9,339.4 324.7,340.5 325.2,341.1 325.8,341.7 327.1,342.8 327.7,343.2 328.3,343.6 329.8,344.4 330.9,344.9 332.6,345.5 333.6,345.8 335.4,346.1 336.4,346.3 338.1,346.4 339.2,346.4 340.9,346.2 342.0,346.1 343.6,345.7 344.6,345.4 346.2,344.7 347.0,344.4 348.6,343.6 349.2,343.2 350.7,342.2 351.4,341.7 352.4,340.9 352.9,340.4 353.9,339.3 354.2,339.0 355.2,337.8 355.4,337.5 356.3,336.3 356.4,336.1 357.4,334.8 357.4,334.7 358.3,333.4 359.2,332.1 360.1,330.9 360.8,330.0 361.6,329.1 362.7,327.9 362.8,327.8 364.0,326.6 365.0,325.4 365.7,324.8 366.0,324.9 366.3,325.2 366.3,326.0 366.1,327.2 365.8,328.7 365.5,329.5 365.2,330.4 364.8,331.5 364.2,332.7 363.6,334.0 362.8,335.3 362.1,336.7 361.3,338.1 360.4,339.6 360.4,339.6 359.6,341.1 359.6,341.1 358.8,342.5 358.7,342.6 358.0,344.0 357.9,344.1 357.3,345.4 356.6,346.8 355.8,348.1 355.1,349.4 354.2,350.8 354.2,350.8 353.4,352.2 353.4,352.3 352.6,353.7 352.5,353.8 351.8,355.2 351.7,355.4 351.1,356.7 350.9,357.0 350.4,358.3 350.2,358.7 349.8,360.0 349.7,360.5 349.4,361.8 349.3,362.3 349.0,364.1 348.9,364.5 348.8,366.3 348.8,366.8 348.8,368.6 348.9,369.3 349.1,371.0 349.3,371.9 349.7,373.4 349.9,374.0 350.2,374.6 350.9,375.9 351.4,376.6 351.9,377.2 352.9,378.3 353.4,378.8 353.9,379.2 355.3,380.2 356.2,380.7 357.9,381.5 358.8,381.9 360.5,382.5 361.5,382.8 363.3,383.2 364.5,383.3 366.2,383.4 367.5,383.3 368.9,383.2 369.9,383.0 371.3,382.6 372.1,382.4 373.5,381.8 374.1,381.6 375.6,380.9 376.1,380.6 377.5,379.8 377.9,379.6 379.4,378.6 379.7,378.4 381.1,377.3 381.4,377.2 382.8,376.0 383.0,375.9 384.4,374.7 384.7,374.5 385.6,373.5 385.9,373.3 386.9,372.2 387.1,372.0 388.1,370.9 388.2,370.7 389.2,369.5 389.4,369.4 390.4,368.1 390.5,367.9 391.5,366.6 391.5,366.5 392.5,365.1 392.6,365.0 393.6,363.5 393.6,363.5 394.6,362.0 394.6,362.0 395.6,360.5 395.6,360.4 396.5,359.0 396.5,359.0 397.4,357.5 397.5,357.5 398.3,356.1 398.3,356.1 399.1,354.7 399.2,354.7 399.9,353.4 400.7,352.2 401.3,351.1 401.5,350.9 402.4,349.2 402.6,348.8 403.3,347.1 403.4,346.9 404.1,345.3 404.6,344.0 405.0,343.1 405.3,342.6 405.6,342.3 406.2,341.9 407.0,341.3 408.0,340.8 409.1,340.3 410.1,340.0 410.9,339.7 411.3,339.7 411.5,339.7 412.1,340.0 413.0,340.5 413.7,341.1 414.3,341.7 414.4,341.9 414.4,341.9 414.5,342.3 414.5,343.1 414.3,344.3 414.0,345.7 413.7,346.6 413.4,347.5 412.9,348.6 412.2,349.8 411.5,351.1 410.7,352.5 409.9,354.0 409.0,355.5 409.0,355.6 408.2,357.1 408.1,357.2 407.3,358.7 407.3,358.7 406.6,360.0 405.9,361.3 405.1,362.6 404.3,364.0 403.5,365.4 403.5,365.4 402.6,366.9 402.6,366.9 401.8,368.3 401.8,368.4 401.0,369.8 400.9,369.9 400.2,371.3 400.1,371.4 399.4,372.9 399.3,373.0 398.7,374.4 398.6,374.6 398.0,376.0 397.9,376.1 397.3,377.7 396.6,379.2 396.6,379.3 395.9,380.9 395.9,381.0 395.2,382.6 395.2,382.8 394.6,384.4 394.5,384.6 394.0,386.2 393.9,386.5 393.5,388.1 393.4,388.5 393.1,390.0 393.1,390.6 392.9,392.1 392.9,392.8 393.0,394.2 393.1,395.0 393.4,396.6 393.6,397.4 394.2,399.0 394.4,399.6 395.2,401.2 395.5,401.7 396.4,403.2 396.7,403.7 397.7,405.0 398.2,405.6 399.3,406.7 399.8,407.3 401.0,408.3 401.7,408.8 403.0,409.6 403.7,410.1 405.1,410.7 405.9,411.0 407.4,411.6 408.1,411.8 409.7,412.2 410.4,412.3 412.0,412.6 412.8,412.6 414.4,412.7 415.2,412.7 416.7,412.6 417.8,412.4 419.3,412.1 420.2,411.9 421.8,411.4 422.5,411.1 424.1,410.4 424.7,410.1 426.2,409.2 426.8,408.8 428.2,407.8 428.7,407.4 430.1,406.3 430.6,405.8 431.8,404.6 432.4,404.0 433.2,402.9 433.6,402.2 434.3,401.0 434.6,400.5 435.2,399.2 435.4,398.8 435.9,397.3 436.0,397.1 436.5,395.6 436.6,395.5 437.1,393.9 437.1,393.9 437.6,392.4 438.0,391.0 438.5,389.7 438.9,388.6 439.5,387.6 440.2,386.3 441.1,384.9 442.0,383.5 442.9,382.2 443.8,381.0 444.6,379.9 445.4,379.1 446.0,378.5 446.3,378.3 447.0,377.9 447.5,377.7 447.8,377.7 448.1,377.7 448.3,377.8 449.1,378.1 450.0,378.7 450.9,379.3 451.6,379.9 451.8,380.2 452.0,380.5 452.1,381.0 452.2,381.8 452.3,383.0 452.2,384.3 452.1,385.0 451.9,385.9 451.5,387.0 451.0,388.3 450.4,389.8 450.3,389.9 449.7,391.5 449.6,391.7 449.0,393.3 448.9,393.6 448.4,395.3 448.3,395.7 447.9,397.4 447.8,398.0 447.6,399.7 447.6,400.2 447.5,401.5 447.5,401.7 447.5,403.2 447.5,403.3 447.5,404.9 447.5,405.0 447.6,406.7 447.6,406.8 447.7,408.5 447.7,408.6 447.8,410.4 447.8,410.5 448.0,412.2 448.0,412.4 448.2,414.1 448.3,414.3 448.5,416.0 448.5,416.2 448.8,417.9 448.9,418.0 449.2,419.7 449.2,419.9 449.6,421.4 449.7,421.7 450.1,423.2 450.2,423.5 450.7,424.8 450.8,425.2 451.4,426.4 451.6,426.9 452.2,427.9 452.5,428.5 453.2,429.4 453.8,430.3 455.1,431.6 456.1,432.4 457.5,433.4 458.6,434.0 460.2,434.8 461.2,435.2 462.9,435.7 463.9,436.0 465.6,436.2 466.6,436.3 468.3,436.4 469.4,436.4 470.9,436.2 471.8,436.1 473.4,435.7 474.1,435.5 475.7,435.0 476.4,434.7 478.0,434.0 478.6,433.7 480.1,432.9 480.7,432.5 482.2,431.5 482.7,431.1 484.1,430.0 484.7,429.5 485.9,428.2 486.4,427.6 487.2,426.5 487.7,425.8 488.4,424.6 488.6,424.1 489.2,422.7 489.4,422.3 489.9,420.8 490.0,420.5 490.5,418.9 490.5,418.7 491.0,417.1 491.0,416.9 491.4,415.3 491.4,415.2 491.8,413.5 491.8,413.5 492.1,411.8 492.5,410.2 492.8,408.7 493.2,407.2 493.2,407.1 493.6,405.6 493.7,405.3 494.0,403.7 494.1,403.5 494.4,401.9 494.4,401.8 494.7,400.1 494.7,400.0 495.0,398.3 495.3,396.7 495.6,395.2 495.9,393.8 496.3,392.6 496.6,391.7 496.9,390.9 497.3,390.4 497.9,389.7 498.6,388.9 499.3,388.3 500.0,387.8 500.5,387.5 500.7,387.4 500.7,387.4 501.3,387.5 502.3,387.9 503.2,388.3 504.0,388.8 504.2,389.0 504.2,389.0 504.2,389.9 503.9,391.2 503.5,392.9 503.1,394.7 503.1,394.9 502.7,396.8 502.5,398.0 502.2,399.2 501.8,400.5 501.4,401.9 501.0,403.3 500.5,404.8 500.5,404.8 500.0,406.4 500.0,406.4 499.5,407.9 499.5,408.0 499.0,409.6 499.0,409.7 498.6,411.2 498.5,411.4 498.2,412.9 498.2,413.2 497.9,414.6 497.8,414.9 497.6,416.4 497.6,416.6 497.5,418.2 497.5,418.3 497.3,420.0 497.3,420.1 497.2,421.8 497.2,421.9 497.1,423.6 497.1,423.8 497.1,425.5 497.1,425.8 497.2,427.4 497.2,427.7 497.4,429.3 497.4,429.8 497.7,431.3 497.8,431.8 498.3,433.3 498.5,433.9 499.0,435.3 499.3,435.9 500.1,437.3 500.3,437.7 501.3,439.1 501.5,439.5 502.6,440.8 502.9,441.2 504.1,442.5 504.4,442.8 505.7,444.1 506.0,444.4 507.3,445.6 507.8,445.9 509.1,446.9 509.7,447.3 511.1,448.1 511.8,448.5 513.2,449.1 514.3,449.5 515.6,449.8 516.3,450.0 517.1,450.1 518.5,450.2 519.9,450.2 521.4,450.0 522.5,449.8 524.0,449.4 524.9,449.1 526.4,448.5 527.1,448.3 528.6,447.5 529.2,447.2 530.7,446.3 531.1,445.9 532.5,444.9 532.9,444.6 534.2,443.4 534.8,443.0 535.7,442.0 536.1,441.4 537.0,440.3 537.3,439.9 538.0,438.6 538.2,438.3 539.0,436.9 539.1,436.6 539.8,435.2 539.9,435.0 540.6,433.4 540.6,433.3 541.3,431.7 541.3,431.6 541.9,430.0 542.0,430.0 542.6,428.4 543.2,426.8 543.8,425.4 544.3,424.1 544.9,423.0 545.5,421.9 546.3,420.4 546.4,420.2 547.2,418.7 548.0,417.2 548.7,415.9 549.4,415.0 549.8,414.4 550.1,414.1 550.2,414.1 550.3,414.0 550.9,413.9 551.8,413.7 552.8,413.7 553.8,413.7 554.3,413.8 554.5,414.3 554.6,414.9 554.5,415.2 554.1,416.0 553.4,417.0 552.5,418.3 551.6,419.8 551.5,419.9 550.6,421.4 550.4,421.7 549.5,423.2 549.3,423.6 548.6,425.1 548.4,425.8 547.9,427.4 547.7,427.9 547.4,429.3 547.4,429.5 547.1,431.0 547.1,431.2 546.9,432.7 546.9,432.9 546.7,434.4 546.7,434.6 546.5,436.2 546.5,436.4 546.5,438.0 546.5,438.2 546.4,439.8 546.4,440.0 546.5,441.6 546.5,441.8 546.6,443.4 546.6,443.6 546.8,445.1 546.8,445.4 547.0,446.9 547.1,447.2 547.4,448.6 547.4,448.9 547.8,450.2 547.9,450.6 548.5,452.2 548.6,452.5 549.3,454.1 549.5,454.4 550.2,455.9 550.4,456.2 551.3,457.6 551.5,458.0 552.5,459.3 552.7,459.7 553.7,460.9 554.0,461.3 555.1,462.4 555.5,462.8 556.5,463.7 557.1,464.2 558.2,465.0 558.9,465.4 560.4,466.3 561.2,466.7 562.8,467.4 563.7,467.6 565.4,468.1 566.3,468.3 568.1,468.6 569.2,468.7 570.9,468.7 571.7,468.7 572.4,468.6 573.9,468.3 574.8,468.0 575.7,467.7 576.9,467.1 577.5,466.7 578.1,466.3 579.3,465.5 580.0,464.8 581.0,463.7 581.4,463.2 582.4,462.0 582.7,461.7 583.6,460.3 583.7,460.2 584.7,458.8 585.6,457.3 585.7,457.2 586.5,455.9 586.7,455.6 587.4,454.3 587.5,454.0 588.2,452.6 588.3,452.4 588.9,450.9 589.0,450.8 589.6,449.3 589.6,449.3 590.3,447.7 590.9,446.2 591.5,444.8 592.1,443.5 592.8,442.4 593.5,441.2 594.4,439.9 594.4,439.9 595.4,438.4 596.3,436.9 597.3,435.5 598.3,434.2 599.1,433.1 599.2,433.1 599.8,433.7 600.2,434.2 600.3,434.3 600.3,434.5 600.2,435.3 600.0,436.5 599.6,437.9 599.2,439.5 599.2,439.6 598.7,441.2 598.7,441.4 598.3,443.1 598.2,443.5 598.0,445.0 598.0,445.1 597.8,446.6 597.5,448.0 597.2,449.6 597.2,449.7 596.9,451.3 596.8,451.5 596.6,453.1 596.5,453.5 596.4,455.0 596.4,455.6 596.4,457.0 596.4,457.8 596.6,459.2 596.9,460.3 597.3,461.5 597.6,462.2 597.9,462.8 598.8,464.1 599.4,464.9 600.6,466.2 601.2,466.8 602.6,467.9 603.3,468.4 604.8,469.4 605.5,469.8 607.1,470.6 608.1,471.0 609.7,471.5 611.0,471.9 612.5,472.1 613.4,472.1 614.3,472.1 615.7,472.0 616.5,471.9 617.2,471.7 618.6,471.3 619.6,470.9 621.0,470.2 621.6,469.8 623.0,469.0 623.4,468.7 624.8,467.8 625.0,467.6 626.4,466.5 626.5,466.5 627.9,465.4 629.2,464.4 629.4,464.2 630.6,463.2 631.0,462.8 632.2,461.6 632.4,461.4 633.5,460.1 633.7,460.0 634.8,458.7 634.8,458.6 635.9,457.3 636.9,456.1 637.9,455.0 638.8,454.2 639.4,453.6 640.1,453.2 640.9,452.7 641.8,452.3 642.8,452.0 643.7,451.7 644.6,451.5 645.6,451.4 646.6,451.3 647.5,451.3 648.2,451.4 649.0,451.5 649.9,451.7 651.0,452.1 652.3,452.5 653.6,453.0 655.0,453.6 656.5,454.2 656.5,454.2 658.1,454.9 658.2,454.9 659.7,455.5 659.9,455.6 661.4,456.1 661.7,456.2 663.2,456.7 663.4,456.8 664.8,457.2 666.3,457.6 667.7,458.1 667.7,458.1 669.2,458.5 669.2,458.5 670.7,459.0 670.7,459.0 672.2,459.4 672.2,459.4 673.7,459.9 673.7,459.9 675.3,460.3 675.3,460.3 676.9,460.8 676.9,460.8 678.5,461.2 678.5,461.2 680.1,461.6 680.2,461.6 681.8,462.0 681.9,462.1 683.6,462.4 683.7,462.5 685.4,462.8 685.5,462.8 686.8,463.1 686.9,463.1 688.3,463.4 688.4,463.4 689.9,463.7 689.9,463.7 691.4,463.9 691.5,463.9 693.0,464.2 693.0,464.2 694.5,464.4 694.6,464.4 696.1,464.6 696.2,464.6 697.7,464.8 697.8,464.8 699.3,465.0 699.3,465.0 700.9,465.2 700.9,465.3 702.5,465.4 704.1,465.6 705.7,465.8 707.2,466.0 708.8,466.2 710.3,466.4 711.8,466.7 713.2,466.9 714.7,467.1 716.0,467.3 717.4,467.5 718.7,467.8 720.3,468.1 721.8,468.4 723.4,468.7 725.0,469.0 726.5,469.4 728.0,469.7 729.5,470.0 731.0,470.4 732.4,470.7 733.8,471.1 735.2,471.4 736.6,471.8 737.9,472.2 739.2,472.5 740.4,472.9 740.5,472.9 742.1,473.4 742.2,473.4 743.8,473.8 745.3,474.2 746.6,474.6 747.8,475.0 749.0,475.4 750.1,475.9 751.2,476.4 752.4,477.1 753.2,477.6 754.1,478.2 755.0,478.9 756.0,479.7 757.0,480.5 758.0,481.4 759.1,482.4 760.2,483.4 761.3,484.5 762.4,485.6 763.5,486.7 764.7,487.8 765.8,488.9 765.9,489.0 767.0,490.1 767.0,490.1 768.2,491.2 768.2,491.3 769.4,492.4 769.4,492.4 770.5,493.5 771.6,494.5 772.6,495.5 773.7,496.5 774.8,497.6 775.9,498.8 777.0,499.9 778.1,501.1 779.2,502.3 779.3,502.3 780.4,503.5 780.4,503.5 781.5,504.6 781.6,504.7 782.7,505.8 782.7,505.9 783.8,506.9 783.9,507.0 785.0,508.0 785.1,508.1 786.2,509.1 786.3,509.2 787.4,510.1 787.5,510.3 788.6,511.1 788.8,511.3 789.8,512.1 790.1,512.2 791.1,512.9 791.4,513.1 792.9,514.0 793.2,514.2 794.7,515.0 795.0,515.2 796.4,515.8 796.8,516.0 798.2,516.6 798.5,516.7 799.9,517.2 800.2,517.3 801.6,517.7 801.9,517.8 803.3,518.1 803.5,518.2 804.9,518.5 806.6,518.9 808.5,519.4 808.8,519.4 810.7,519.8 811.6,519.9 813.4,520.0 814.2,520.0 815.1,520.0 816.6,519.7 817.5,519.5 818.4,519.2 819.3,518.8 820.5,518.1 821.2,517.6 821.9,517.0 822.4,516.4 822.9,515.8 823.4,515.2 823.7,514.6 824.1,513.7 824.4,512.8 824.7,511.8 824.8,511.1 825.0,509.9 825.1,509.5 825.2,508.1 825.2,507.8 825.2,506.3 825.2,506.1 825.2,504.5 825.2,504.3 825.1,502.6 825.1,502.5 825.0,500.7 825.0,500.6 824.8,498.8 824.8,498.8 824.6,496.9 824.6,496.9 824.4,495.0 824.3,493.2 824.1,491.4 823.9,489.7 823.8,488.0 823.7,486.5 823.7,485.0 823.7,483.5 823.7,483.4 823.6,481.8 823.6,481.8 823.6,480.1 823.6,480.1 823.5,478.4 823.5,478.4 823.4,476.7 823.4,476.7 823.4,475.0 823.3,473.3 823.2,471.7 823.1,470.0 823.1,468.5 823.1,467.0 823.0,465.5 823.1,464.2 823.1,463.0 823.2,461.8 823.3,460.9 823.4,460.1 823.5,459.6 823.9,458.4 824.2,457.8 824.4,457.5 824.6,457.3 824.9,457.1 825.5,456.8 826.2,456.7 826.5,456.6 826.8,456.7 827.4,456.8 828.0,457.1 828.4,457.4 828.8,457.7 829.1,458.1 829.4,458.7 829.8,459.8 830.0,460.3 830.1,461.0 830.2,461.9 830.3,463.0 830.3,464.2 830.4,465.5 830.4,467.0 830.3,468.5 830.3,470.0 830.2,471.7 830.1,473.3 830.1,475.1 830.0,476.8 829.9,478.5 829.9,478.5 829.8,480.2 829.8,480.3 829.7,482.0 829.7,482.0 829.7,483.7 829.7,483.8 829.6,485.4 829.6,485.5 829.6,487.0 829.6,488.5 829.5,489.9 829.4,491.5 829.3,493.2 829.1,494.9 828.9,496.6 828.7,498.4 828.7,498.4 828.6,500.2 828.6,500.2 828.4,501.9 828.4,502.0 828.2,503.7 828.2,503.8 828.1,505.5 828.1,505.6 828.0,507.3 828.0,507.4 827.9,509.0 827.9,509.2 827.9,510.7 827.9,511.0 828.0,512.4 828.0,512.7 828.1,514.1 828.2,514.4 828.4,515.7 828.5,516.2 828.7,517.3 828.9,517.9 829.3,518.9 829.6,519.7 830.1,520.6 830.7,521.6 831.7,522.8 832.2,523.4 832.8,523.9 834.0,524.8 835.1,525.5 836.5,526.2 837.4,526.6 838.9,527.1 839.4,527.3 841.0,527.8 841.1,527.8 842.7,528.2 844.2,528.6 845.6,529.0 845.7,529.0 847.2,529.5 847.4,529.5 849.0,529.9 849.2,530.0 850.9,530.4 851.1,530.4 852.8,530.7 853.1,530.8 854.8,531.1 855.2,531.1 856.9,531.3 857.3,531.3 859.0,531.4 859.6,531.4 861.2,531.4 861.9,531.3 863.5,531.2 864.2,531.0 865.6,530.7 866.2,530.6 867.7,530.2 868.2,530.0 869.6,529.5 870.0,529.3 871.5,528.7 871.8,528.6 873.3,527.8 873.6,527.7 875.0,526.9 875.2,526.8 876.6,525.9 876.8,525.8 878.2,524.9 878.4,524.7 879.7,523.8 879.8,523.7 881.1,522.7 881.5,522.4 882.6,521.5 883.0,521.0 884.1,519.9 884.4,519.6 885.3,518.4 885.5,518.2 886.5,516.9 886.6,516.8 887.5,515.5 887.5,515.4 888.4,514.1 889.3,512.8 890.1,511.7 890.9,510.7 891.6,509.9 892.3,509.3 892.9,508.8 893.7,508.3 894.7,507.8 895.7,507.3 896.9,506.9 898.2,506.5 899.5,506.1 901.0,505.7 902.6,505.3 904.2,504.8 904.3,504.8 905.9,504.4 906.0,504.4 907.7,503.9 907.7,503.9 909.2,503.5 910.7,503.1 912.1,502.6 913.6,502.2 915.0,501.9 916.5,501.5 917.9,501.1 919.4,500.8 920.9,500.5 922.4,500.1 924.0,499.8 925.5,499.6 927.1,499.3 928.3,499.2 929.6,499.0 931.0,498.9 932.5,498.8 934.0,498.7 935.5,498.6 937.1,498.6 938.8,498.5 940.4,498.5 942.1,498.4 943.8,498.4 943.8,498.4 945.5,498.3 945.6,498.3 947.2,498.3 947.3,498.3 948.9,498.2 949.0,498.2 950.6,498.1 950.7,498.1 952.3,498.0 952.4,498.0 953.9,497.9 954.0,497.9 955.5,497.8 955.7,497.7 957.1,497.6 957.3,497.5 958.6,497.3 958.9,497.3 960.2,497.1 960.3,497.0 962.2,496.7 962.3,496.7 964.1,496.3 964.2,496.2 965.9,495.8 966.1,495.8 967.7,495.4 968.0,495.3 969.6,494.8 970.0,494.7 971.4,494.1 971.9,494.0 973.3,493.3 973.8,493.1 975.1,492.4 975.6,492.1 976.9,491.2 977.4,490.9 978.7,490.0 979.0,489.7 980.3,488.6 980.6,488.3 981.8,487.1 982.1,486.9 983.2,485.6 983.5,485.3 984.6,484.0 984.8,483.7 985.8,482.3 986.0,482.0 986.9,480.6 987.1,480.2 987.9,478.8 988.1,478.4 988.8,476.9 988.9,476.5 989.5,475.1 989.6,474.6 990.0,473.2 990.1,472.8 990.4,471.2 990.5,470.9 990.7,469.3 990.8,469.1 990.9,467.5 991.0,467.2 991.1,465.6 991.1,465.5 991.1,463.9 991.1,463.7 991.2,462.2 991.2,462.0 991.1,460.6 991.1,460.5 991.1,459.1 991.1,459.0 991.0,457.1 991.0,456.8 990.8,455.1 990.7,454.6 990.4,453.0 990.3,452.4 989.8,450.8 989.6,450.2 988.9,448.4 988.8,448.1 988.2,446.9 988.1,446.7 987.5,445.5 987.4,445.3 986.7,444.0 986.6,443.9 985.8,442.5 985.7,442.4 984.9,441.0 984.8,440.9 983.9,439.5 983.8,439.4 982.8,438.0 982.7,437.9 981.7,436.5 981.6,436.4 980.6,435.1 980.5,434.9 979.4,433.7 979.3,433.5 978.2,432.3 978.0,432.1 977.0,431.0 976.8,430.8 975.7,429.8 975.2,429.4 973.9,428.3 973.3,427.9 971.8,427.0 971.3,426.7 969.8,425.9 969.5,425.7 967.9,425.0 967.8,425.0 966.2,424.3 964.8,423.7 963.7,423.2 962.9,422.7 962.4,422.3 962.0,422.0 961.7,421.5 961.3,420.8 960.9,419.9 960.5,418.9 960.1,417.7 959.8,416.4 959.4,414.9 959.0,413.3 959.0,413.2 958.6,411.7 958.3,410.3 958.0,408.9 957.7,407.4 957.4,405.8 957.1,404.2 956.9,402.5 956.6,400.8 956.6,400.8 956.3,399.2 956.3,399.1 956.1,397.6 956.1,397.5 955.8,396.0 955.8,395.9 955.5,394.5 955.4,394.3 955.2,393.0 955.1,393.0 954.7,391.3 954.7,391.3 954.4,389.8 954.3,389.6 953.9,388.3 953.8,387.9 953.3,386.5 953.1,386.1 952.4,384.5 952.3,384.2 951.8,383.2 951.7,383.1 951.2,382.0 951.1,381.9 950.5,380.8 950.4,380.7 949.7,379.4 949.7,379.4 948.9,378.1 948.9,378.0 948.1,376.7 948.0,376.6 947.2,375.2 947.2,375.2 946.3,373.7 946.2,373.7 945.3,372.3 945.3,372.2 944.3,370.8 944.3,370.7 943.3,369.3 943.3,369.2 942.3,367.8 942.3,367.8 941.3,366.4 941.2,366.3 940.2,365.0 940.2,364.9 939.2,363.6 939.1,363.6 938.2,362.3 938.1,362.2 937.1,361.1 937.0,361.0 936.1,359.9 936.0,359.8 934.9,358.6 934.8,358.5 933.7,357.3 933.5,357.2 932.4,356.1 932.3,356.0 931.2,354.9 931.1,354.8 929.9,353.8 929.8,353.7 928.7,352.8 928.5,352.7 927.4,351.7 927.3,351.7 926.1,350.8 926.0,350.7 924.8,349.8 924.7,349.7 923.5,348.9 923.4,348.8 922.1,347.9 922.0,347.9 920.8,347.0 920.7,347.0 919.4,346.1 919.3,346.1 917.9,345.2 917.8,345.2 916.5,344.4 916.4,344.3 915.0,343.5 914.9,343.5 913.5,342.7 913.4,342.6 911.9,341.9 911.8,341.8 910.4,341.1 910.3,341.0 908.8,340.3 908.7,340.3 907.2,339.6 907.1,339.5 905.6,338.9 905.5,338.8 903.9,338.2 903.8,338.1 902.3,337.5 902.2,337.5 900.6,336.9 900.5,336.8 899.1,336.4 899.0,336.3 897.6,335.8 897.4,335.8 896.0,335.4 895.9,335.3 894.5,334.9 894.4,334.9 893.0,334.5 892.9,334.5 891.4,334.1 891.3,334.1 889.9,333.7 889.8,333.7 888.3,333.3 888.3,333.3 886.8,333.0 886.7,333.0 885.2,332.7 885.2,332.6 883.7,332.3 883.7,332.3 882.2,332.0 882.2,332.0 880.6,331.7 879.1,331.4 877.6,331.1 876.1,330.8 876.0,330.8 874.6,330.5 874.5,330.4 873.1,330.2 873.0,330.2 871.5,329.9 871.4,329.9 869.9,329.7 869.9,329.6 868.4,329.4 868.3,329.4 866.8,329.2 866.8,329.2 865.3,329.0 865.3,328.9 863.7,328.7 862.2,328.5 860.7,328.3 859.2,328.1 857.7,327.9 856.3,327.6 854.9,327.4 853.4,327.1 852.1,326.9 850.7,326.6 849.4,326.3 848.2,326.0 846.8,325.7 845.5,325.3 844.1,324.9 842.8,324.5 841.5,324.0 840.1,323.6 838.8,323.1 837.4,322.7 836.1,322.2 834.7,321.7 833.3,321.1 833.3,321.1 831.9,320.6 831.8,320.6 830.4,320.1 830.3,320.1 828.9,319.6 828.8,319.6 827.3,319.1 827.3,319.1 825.8,318.6 825.7,318.6 824.4,318.1 823.0,317.7 821.6,317.2 820.2,316.8 818.8,316.3 817.4,315.8 815.9,315.3 815.9,315.3 814.4,314.8 814.4,314.8 812.9,314.3 812.9,314.3 811.4,313.8 811.4,313.8 809.9,313.3 809.8,313.3 808.3,312.9 808.3,312.8 806.8,312.4 806.7,312.4 805.2,311.9 805.1,311.9 803.7,311.5 803.6,311.5 802.1,311.1 802.0,311.0 800.5,310.6 800.4,310.6 798.9,310.3 798.8,310.2 797.3,309.9 797.2,309.9 795.7,309.6 795.6,309.5 794.0,309.2 793.9,309.2 792.4,309.0 792.3,308.9 790.8,308.7 790.7,308.7 789.2,308.4 789.1,308.4 787.6,308.2 787.6,308.2 786.1,308.0 786.0,308.0 784.5,307.8 784.4,307.8 782.9,307.6 782.8,307.6 781.3,307.5 781.2,307.5 779.7,307.3 779.6,307.3 778.1,307.2 778.1,307.2 776.5,307.1 776.5,307.1 774.9,307.0 774.9,307.0 773.3,306.9 773.3,306.9 771.7,306.8 771.6,306.8 770.1,306.7 770.0,306.7 768.4,306.6 768.4,306.6 766.7,306.6 766.7,306.6 765.1,306.5 765.0,306.5 763.6,306.5 763.5,306.5 762.0,306.4 761.9,306.4 760.5,306.4 760.4,306.5 758.9,306.5 758.8,306.5 757.3,306.5 757.2,306.5 755.7,306.5 755.6,306.6 754.0,306.6 754.0,306.6 752.4,306.7 752.4,306.7 750.8,306.8 750.8,306.8 749.2,306.8 749.2,306.8 747.6,306.9 747.5,306.9 745.9,307.0 745.9,307.0 744.3,307.1 742.7,307.2 741.2,307.3 739.6,307.4 738.1,307.5 736.5,307.6 735.1,307.6 733.6,307.7 732.2,307.7 730.8,307.8 729.5,307.8 728.2,307.8 727.0,307.8 725.8,307.8 724.0,307.8 722.3,307.7 720.7,307.7 719.1,307.6 717.6,307.5 716.2,307.5 714.8,307.4 713.4,307.3 712.0,307.1 710.6,306.9 709.2,306.7 707.8,306.5 706.3,306.2 705.0,306.0 703.8,305.7 702.5,305.4 701.2,305.0 699.9,304.7 698.5,304.3 697.1,303.8 695.7,303.4 694.3,302.9 692.8,302.4 691.3,301.9 689.8,301.4 688.3,300.9 688.3,300.9 686.8,300.4 686.8,300.4 685.3,299.9 685.3,299.9 683.7,299.4 683.7,299.4 682.2,298.9 682.1,298.9 680.6,298.5 680.6,298.4 679.1,298.0 679.0,298.0 677.6,297.6 676.2,297.2 674.7,296.7 673.2,296.3 671.8,295.9 670.3,295.4 668.8,295.0 668.8,295.0 667.3,294.5 667.3,294.5 665.8,294.1 665.8,294.1 664.3,293.7 664.2,293.7 662.8,293.2 662.7,293.2 661.2,292.8 661.2,292.8 659.7,292.4 659.7,292.4 658.2,292.0 658.1,292.0 656.7,291.6 656.6,291.6 655.2,291.3 655.1,291.2 653.6,290.9 653.5,290.9 652.1,290.6 652.0,290.5 650.6,290.2 650.5,290.2 649.1,289.9 649.0,289.9 647.4,289.6 647.3,289.6 645.8,289.4 645.7,289.4 644.2,289.1 644.1,289.1 642.6,288.9 642.5,288.9 641.1,288.7 641.0,288.7 639.5,288.5 639.4,288.5 638.0,288.4 637.9,288.4 636.5,288.2 636.4,288.2 635.0,288.1 634.9,288.1 633.5,288.0 633.4,287.9 632.0,287.8 631.9,287.8 630.4,287.7 630.4,287.7 628.9,287.6 627.4,287.5 625.8,287.4 624.2,287.2 624.2,287.2 622.8,287.1 622.7,287.1 621.3,287.0 621.3,287.0 619.8,286.9 619.8,286.9 618.3,286.8 618.3,286.8 616.8,286.8 616.8,286.8 615.3,286.7 615.3,286.7 613.8,286.6 613.8,286.6 612.3,286.6 612.2,286.6 610.7,286.5 609.2,286.5 607.7,286.4 606.2,286.4 604.6,286.3 603.1,286.2 601.6,286.1 600.1,286.1 598.6,286.0 597.1,285.9 595.6,285.8 594.2,285.6 592.7,285.5 591.3,285.3 589.8,285.2 588.3,285.0 586.8,284.8 585.4,284.6 583.9,284.4 582.4,284.2 580.9,284.0 579.4,283.8 578.0,283.6 576.5,283.4 575.0,283.1 573.5,282.9 572.0,282.6 570.5,282.4 569.0,282.1 567.6,281.8 566.1,281.5 564.6,281.2 563.1,280.9 561.6,280.6 560.1,280.3 558.6,279.9 557.1,279.6 555.7,279.3 554.3,278.9 552.9,278.6 551.5,278.2 550.1,277.9 548.7,277.5 547.3,277.1 545.8,276.7 544.4,276.3 543.0,275.8 541.5,275.4 540.1,275.0 538.6,274.5 537.2,274.1 535.7,273.6 534.3,273.2 532.9,272.7 531.4,272.3 530.0,271.8 528.5,271.3 527.1,270.9 525.7,270.4 524.2,269.9 522.8,269.5 521.4,269.0 520.0,268.5 518.6,268.1 517.1,267.6 515.6,267.1 514.1,266.6 512.6,266.1 511.1,265.5 509.6,265.0 508.1,264.5 506.6,264.0 505.1,263.4 503.6,262.9 502.2,262.4 500.7,261.8 499.2,261.3 497.8,260.8 496.3,260.2 494.9,259.7 493.4,259.2 492.0,258.6 490.6,258.1 489.2,257.6 487.8,257.1 486.4,256.6 485.1,256.1 483.5,255.5 482.1,254.9 480.6,254.4 479.1,253.8 477.7,253.2 476.2,252.6 474.8,252.0 473.3,251.4 473.3,251.4 471.9,250.9 471.8,250.9 470.4,250.3 470.4,250.3 468.9,249.7 468.9,249.7 467.5,249.2 467.4,249.1 466.0,248.6 465.9,248.6 464.5,248.1 464.4,248.0 463.0,247.5 462.9,247.5 461.5,247.0 461.3,247.0 459.9,246.6 459.8,246.5 458.3,246.1 458.2,246.0 456.7,245.6 456.6,245.6 455.1,245.1 455.0,245.1 453.5,244.7 453.4,244.7 451.9,244.2 451.8,244.2 450.3,243.8 450.2,243.8 448.6,243.4 448.6,243.4 447.0,243.0 446.9,243.0 445.4,242.7 445.3,242.7 443.8,242.3 443.7,242.3 442.2,242.0 442.1,242.0 440.6,241.7 440.5,241.7 439.0,241.4 438.9,241.4 437.3,241.1 437.2,241.1 435.7,240.9 435.7,240.9 434.1,240.7 432.6,240.4 432.6,240.4 431.0,240.2 431.0,240.2 429.5,240.0 429.4,240.0 427.8,239.8 427.7,239.8 426.2,239.6 426.0,239.6 424.5,239.5 424.3,239.5 422.8,239.4 422.5,239.4 421.0,239.3 420.7,239.3 419.2,239.3 418.9,239.4 417.3,239.4 417.0,239.5 415.4,239.6 415.1,239.7 413.5,239.9 413.2,239.9 411.7,240.2 411.5,240.3 410.0,240.6 409.8,240.6 408.3,241.0 408.1,241.1 406.6,241.5 406.4,241.6 404.9,242.1 404.7,242.1 403.2,242.6 403.0,242.7 401.5,243.3 401.4,243.3 399.8,243.9 399.7,244.0 398.2,244.6 398.0,244.7 396.5,245.3 396.4,245.4 394.9,246.1 394.8,246.1 393.3,246.8 393.2,246.9 391.8,247.6 391.7,247.6 390.2,248.4 390.1,248.4 388.7,249.2 388.7,249.2 387.3,250.0 387.2,250.0 385.9,250.8 385.7,250.9 384.4,251.7 384.1,251.8 382.8,252.7 382.6,252.8 381.4,253.7 381.2,253.9 380.0,254.8 379.9,254.9 378.7,255.8 378.6,255.9 377.5,256.9 377.4,256.9 376.3,257.9 376.2,257.9 375.1,258.9 374.0,259.9 372.9,260.9 371.8,261.8 370.8,262.6 369.7,263.5 368.6,264.2 367.5,265.0 366.5,265.6 365.4,266.2 364.2,266.9 362.9,267.5 361.6,268.1 360.2,268.7 358.8,269.4 357.3,270.0 355.8,270.7 355.8,270.7 354.3,271.3 354.2,271.4 352.8,272.0 352.7,272.1 351.2,272.8 351.1,272.8 349.7,273.5 349.5,273.6 348.1,274.4 347.9,274.5 346.6,275.2 346.3,275.4 345.0,276.2 344.8,276.3 343.5,277.2 343.3,277.4 342.1,278.3 341.9,278.5 340.6,279.5 340.5,279.6 339.3,280.6 339.2,280.7 337.9,281.8 337.8,281.9 336.6,283.1 336.5,283.2 335.3,284.3 335.2,284.5 334.1,285.7 334.0,285.8 332.8,287.0 332.7,287.1 331.7,288.4 331.5,288.5 330.5,289.8 330.4,289.9 329.4,291.2 329.3,291.4 328.4,292.7 328.3,292.9 327.5,294.1 327.3,294.4 326.6,295.7 326.4,295.9 325.8,297.2 325.6,297.5 325.1,298.8 324.9,299.3 324.4,300.8 324.2,301.5 323.9,303.0 323.8,303.5 323.6,305.2 323.6,305.5 323.5,307.2 323.5,307.5 323.5,309.1 323.5,309.3 323.6,310.9 323.6,311.0 323.6,312.5 323.7,314.0 323.7,315.2 323.6,316.2Z" fill="none" stroke="#22d822" stroke-width="1.35"/>
<path d="M324.3,311.2 324.0,312.2 323.5,313.3 322.8,314.7 322.6,315.2 322.0,316.7 321.7,317.9 321.5,319.5 321.4,320.5 321.4,322.0 321.4,322.5 321.6,324.2 321.6,324.6 321.9,326.3 322.0,326.8 322.5,328.5 322.6,329.0 323.2,330.7 323.4,331.3 324.1,332.8 324.7,333.7 325.5,334.8 326.0,335.4 326.6,336.0 327.9,337.1 328.5,337.5 329.1,337.9 330.6,338.7 331.7,339.2 333.4,339.8 334.4,340.1 336.2,340.4 337.2,340.6 338.9,340.7 340.0,340.7 341.7,340.5 342.8,340.4 344.4,340.0 345.4,339.7 347.0,339.0 347.8,338.7 349.4,337.9 350.0,337.5 351.5,336.5 352.2,336.0 353.2,335.2 353.7,334.7 354.7,333.6 355.0,333.3 356.0,332.1 356.2,331.8 357.1,330.6 357.2,330.4 358.2,329.1 358.2,329.0 359.1,327.7 360.0,326.4 360.9,325.2 361.6,324.3 362.4,323.4 363.5,322.2 363.6,322.1 364.8,320.9 365.8,319.7 366.5,319.1 366.8,319.2 367.1,319.5 367.1,320.3 366.9,321.5 366.6,323.0 366.3,323.8 366.0,324.7 365.6,325.8 365.0,327.0 364.4,328.3 363.6,329.6 362.9,331.0 362.1,332.4 361.2,333.9 361.2,333.9 360.4,335.4 360.4,335.4 359.6,336.8 359.5,336.9 358.8,338.3 358.7,338.4 358.1,339.7 357.4,341.1 356.6,342.4 355.9,343.7 355.0,345.1 355.0,345.1 354.2,346.5 354.2,346.6 353.4,348.0 353.3,348.1 352.6,349.5 352.5,349.7 351.9,351.0 351.7,351.3 351.2,352.6 351.0,353.0 350.6,354.3 350.5,354.8 350.2,356.1 350.1,356.6 349.8,358.4 349.7,358.8 349.6,360.6 349.6,361.1 349.6,362.9 349.7,363.6 349.9,365.3 350.1,366.2 350.5,367.7 350.7,368.3 351.0,368.9 351.7,370.2 352.2,370.9 352.7,371.5 353.7,372.6 354.2,373.1 354.7,373.5 356.1,374.5 357.0,375.0 358.7,375.8 359.6,376.2 361.3,376.8 362.3,377.1 364.1,377.5 365.3,377.6 367.0,377.7 368.3,377.6 369.7,377.5 370.7,377.3 372.1,376.9 372.9,376.7 374.3,376.1 374.9,375.9 376.4,375.2 376.9,374.9 378.3,374.1 378.7,373.9 380.2,372.9 380.5,372.7 381.9,371.6 382.2,371.5 383.6,370.3 383.8,370.2 385.2,369.0 385.5,368.8 386.4,367.8 386.7,367.6 387.7,366.5 387.9,366.3 388.9,365.2 389.0,365.0 390.0,363.8 390.2,363.7 391.2,362.4 391.3,362.2 392.3,360.9 392.3,360.8 393.3,359.4 393.4,359.3 394.4,357.8 394.4,357.8 395.4,356.3 395.4,356.3 396.4,354.8 396.4,354.7 397.3,353.3 397.3,353.3 398.2,351.8 398.3,351.8 399.1,350.4 399.1,350.4 399.9,349.0 400.0,349.0 400.7,347.7 401.5,346.5 402.1,345.4 402.3,345.2 403.2,343.5 403.4,343.1 404.1,341.4 404.2,341.2 404.9,339.6 405.4,338.3 405.8,337.4 406.1,336.9 406.4,336.6 407.0,336.2 407.8,335.6 408.8,335.1 409.9,334.6 410.9,334.3 411.7,334.0 412.1,334.0 412.3,334.0 412.9,334.3 413.8,334.8 414.5,335.4 415.1,336.0 415.2,336.2 415.2,336.2 415.3,336.6 415.3,337.4 415.1,338.6 414.8,340.0 414.5,340.9 414.2,341.8 413.7,342.9 413.0,344.1 412.3,345.4 411.5,346.8 410.7,348.3 409.8,349.8 409.8,349.9 409.0,351.4 408.9,351.5 408.1,353.0 408.1,353.0 407.4,354.3 406.7,355.6 405.9,356.9 405.1,358.3 404.3,359.7 404.3,359.7 403.4,361.2 403.4,361.2 402.6,362.6 402.6,362.7 401.8,364.1 401.7,364.2 401.0,365.6 400.9,365.7 400.2,367.2 400.1,367.3 399.5,368.7 399.4,368.9 398.8,370.3 398.7,370.4 398.1,372.0 397.4,373.5 397.4,373.6 396.7,375.2 396.7,375.3 396.0,376.9 396.0,377.1 395.4,378.7 395.3,378.9 394.8,380.5 394.7,380.8 394.3,382.4 394.2,382.8 393.9,384.3 393.9,384.9 393.7,386.4 393.7,387.1 393.8,388.5 393.9,389.3 394.2,390.9 394.4,391.7 395.0,393.3 395.2,393.9 396.0,395.5 396.3,396.0 397.2,397.5 397.5,398.0 398.5,399.3 399.0,399.9 400.1,401.0 400.6,401.6 401.8,402.6 402.5,403.1 403.8,403.9 404.5,404.4 405.9,405.0 406.7,405.3 408.2,405.9 408.9,406.1 410.5,406.5 411.2,406.6 412.8,406.9 413.6,406.9 415.2,407.0 416.0,407.0 417.5,406.9 418.6,406.7 420.1,406.4 421.0,406.2 422.6,405.7 423.3,405.4 424.9,404.7 425.5,404.4 427.0,403.5 427.6,403.1 429.0,402.1 429.5,401.7 430.9,400.6 431.4,400.1 432.6,398.9 433.2,398.3 434.0,397.2 434.4,396.5 435.1,395.3 435.4,394.8 436.0,393.5 436.2,393.1 436.7,391.6 436.8,391.4 437.3,389.9 437.4,389.8 437.9,388.2 437.9,388.2 438.4,386.7 438.8,385.3 439.3,384.0 439.7,382.9 440.3,381.9 441.0,380.6 441.9,379.2 442.8,377.8 443.7,376.5 444.6,375.3 445.4,374.2 446.2,373.4 446.8,372.8 447.1,372.6 447.8,372.2 448.3,372.0 448.6,372.0 448.9,372.0 449.1,372.1 449.9,372.4 450.8,373.0 451.7,373.6 452.4,374.2 452.6,374.5 452.8,374.8 452.9,375.3 453.0,376.1 453.1,377.3 453.0,378.6 452.9,379.3 452.7,380.2 452.3,381.3 451.8,382.6 451.2,384.1 451.1,384.2 450.5,385.8 450.4,386.0 449.8,387.6 449.7,387.9 449.2,389.6 449.1,390.0 448.7,391.7 448.6,392.3 448.4,394.0 448.4,394.5 448.3,395.8 448.3,396.0 448.3,397.5 448.3,397.6 448.3,399.2 448.3,399.3 448.4,401.0 448.4,401.1 448.5,402.8 448.5,402.9 448.6,404.7 448.6,404.8 448.8,406.5 448.8,406.7 449.0,408.4 449.1,408.6 449.3,410.3 449.3,410.5 449.6,412.2 449.7,412.3 450.0,414.0 450.0,414.2 450.4,415.7 450.5,416.0 450.9,417.5 451.0,417.8 451.5,419.1 451.6,419.5 452.2,420.7 452.4,421.2 453.0,422.2 453.3,422.8 454.0,423.7 454.6,424.6 455.9,425.9 456.9,426.7 458.3,427.7 459.4,428.3 461.0,429.1 462.0,429.5 463.7,430.0 464.7,430.3 466.4,430.5 467.4,430.6 469.1,430.7 470.2,430.7 471.7,430.5 472.6,430.4 474.2,430.0 474.9,429.8 476.5,429.3 477.2,429.0 478.8,428.3 479.4,428.0 480.9,427.2 481.5,426.8 483.0,425.8 483.5,425.4 484.9,424.3 485.5,423.8 486.7,422.5 487.2,421.9 488.0,420.8 488.5,420.1 489.2,418.9 489.4,418.4 490.0,417.0 490.2,416.6 490.7,415.1 490.8,414.8 491.3,413.2 491.3,413.0 491.8,411.4 491.8,411.2 492.2,409.6 492.2,409.5 492.6,407.8 492.6,407.8 492.9,406.1 493.3,404.5 493.6,403.0 494.0,401.5 494.0,401.4 494.4,399.9 494.5,399.6 494.8,398.0 494.9,397.8 495.2,396.2 495.2,396.1 495.5,394.4 495.5,394.3 495.8,392.6 496.1,391.0 496.4,389.5 496.7,388.1 497.1,386.9 497.4,386.0 497.7,385.2 498.1,384.7 498.7,384.0 499.4,383.2 500.1,382.6 500.8,382.1 501.3,381.8 501.5,381.7 501.5,381.7 502.1,381.8 503.1,382.2 504.0,382.6 504.8,383.1 505.0,383.3 505.0,383.3 505.0,384.2 504.7,385.5 504.3,387.2 503.9,389.0 503.9,389.2 503.5,391.1 503.3,392.3 503.0,393.5 502.6,394.8 502.2,396.2 501.8,397.6 501.3,399.1 501.3,399.1 500.8,400.7 500.8,400.7 500.3,402.2 500.3,402.3 499.8,403.9 499.8,404.0 499.4,405.5 499.3,405.7 499.0,407.2 499.0,407.5 498.7,408.9 498.6,409.2 498.4,410.7 498.4,410.9 498.3,412.5 498.3,412.6 498.1,414.3 498.1,414.4 498.0,416.1 498.0,416.2 497.9,417.9 497.9,418.1 497.9,419.8 497.9,420.1 498.0,421.7 498.0,422.0 498.2,423.6 498.2,424.1 498.5,425.6 498.6,426.1 499.1,427.6 499.3,428.2 499.8,429.6 500.1,430.2 500.9,431.6 501.1,432.0 502.1,433.4 502.3,433.8 503.4,435.1 503.7,435.5 504.9,436.8 505.2,437.1 506.5,438.4 506.8,438.7 508.1,439.9 508.6,440.2 509.9,441.2 510.5,441.6 511.9,442.4 512.6,442.8 514.0,443.4 515.1,443.8 516.4,444.1 517.1,444.3 517.9,444.4 519.3,444.5 520.7,444.5 522.2,444.3 523.3,444.1 524.8,443.7 525.7,443.4 527.2,442.8 527.9,442.6 529.4,441.8 530.0,441.5 531.5,440.6 531.9,440.2 533.3,439.2 533.7,438.9 535.0,437.7 535.6,437.3 536.5,436.3 536.9,435.7 537.8,434.6 538.1,434.2 538.8,432.9 539.0,432.6 539.8,431.2 539.9,430.9 540.6,429.5 540.7,429.3 541.4,427.7 541.4,427.6 542.1,426.0 542.1,425.9 542.7,424.3 542.8,424.3 543.4,422.7 544.0,421.1 544.6,419.7 545.1,418.4 545.7,417.3 546.3,416.2 547.1,414.7 547.2,414.5 548.0,413.0 548.8,411.5 549.5,410.2 550.2,409.3 550.6,408.7 550.9,408.4 551.0,408.4 551.1,408.3 551.7,408.2 552.6,408.0 553.6,408.0 554.6,408.0 555.1,408.1 555.3,408.6 555.4,409.2 555.3,409.5 554.9,410.3 554.2,411.3 553.3,412.6 552.4,414.1 552.3,414.2 551.4,415.7 551.2,416.0 550.3,417.5 550.1,417.9 549.4,419.4 549.2,420.1 548.7,421.7 548.5,422.2 548.2,423.6 548.2,423.8 547.9,425.3 547.9,425.5 547.7,427.0 547.7,427.2 547.5,428.7 547.5,428.9 547.3,430.5 547.3,430.7 547.3,432.3 547.3,432.5 547.2,434.1 547.2,434.3 547.3,435.9 547.3,436.1 547.4,437.7 547.4,437.9 547.6,439.4 547.6,439.7 547.8,441.2 547.9,441.5 548.2,442.9 548.2,443.2 548.6,444.5 548.7,444.9 549.3,446.5 549.4,446.8 550.1,448.4 550.3,448.7 551.0,450.2 551.2,450.5 552.1,451.9 552.3,452.3 553.3,453.6 553.5,454.0 554.5,455.2 554.8,455.6 555.9,456.7 556.3,457.1 557.3,458.0 557.9,458.5 559.0,459.3 559.7,459.7 561.2,460.6 562.0,461.0 563.6,461.7 564.5,461.9 566.2,462.4 567.1,462.6 568.9,462.9 570.0,463.0 571.7,463.0 572.5,463.0 573.2,462.9 574.7,462.6 575.6,462.3 576.5,462.0 577.7,461.4 578.3,461.0 578.9,460.6 580.1,459.8 580.8,459.1 581.8,458.0 582.2,457.5 583.2,456.3 583.5,456.0 584.4,454.6 584.5,454.5 585.5,453.1 586.4,451.6 586.5,451.5 587.3,450.2 587.5,449.9 588.2,448.6 588.3,448.3 589.0,446.9 589.1,446.7 589.7,445.2 589.8,445.1 590.4,443.6 590.4,443.6 591.1,442.0 591.7,440.5 592.3,439.1 592.9,437.8 593.6,436.7 594.3,435.5 595.2,434.2 595.2,434.2 596.2,432.7 597.1,431.2 598.1,429.8 599.1,428.5 599.9,427.4 600.0,427.4 600.6,428.0 601.0,428.5 601.1,428.6 601.1,428.8 601.0,429.6 600.8,430.8 600.4,432.2 600.0,433.8 600.0,433.9 599.5,435.5 599.5,435.7 599.1,437.4 599.0,437.8 598.8,439.3 598.8,439.4 598.6,440.9 598.3,442.3 598.0,443.9 598.0,444.0 597.7,445.6 597.6,445.8 597.4,447.4 597.3,447.8 597.2,449.3 597.2,449.9 597.2,451.3 597.2,452.1 597.4,453.5 597.7,454.6 598.1,455.8 598.4,456.5 598.7,457.1 599.6,458.4 600.2,459.2 601.4,460.5 602.0,461.1 603.4,462.2 604.1,462.7 605.6,463.7 606.3,464.1 607.9,464.9 608.9,465.3 610.5,465.8 611.8,466.2 613.3,466.4 614.2,466.4 615.1,466.4 616.5,466.3 617.3,466.2 618.0,466.0 619.4,465.6 620.4,465.2 621.8,464.5 622.4,464.1 623.8,463.3 624.2,463.0 625.6,462.1 625.8,461.9 627.2,460.8 627.3,460.8 628.7,459.7 630.0,458.7 630.2,458.5 631.4,457.5 631.8,457.1 633.0,455.9 633.2,455.7 634.3,454.4 634.5,454.3 635.6,453.0 635.6,452.9 636.7,451.6 637.7,450.4 638.7,449.3 639.6,448.5 640.2,447.9 640.9,447.5 641.7,447.0 642.6,446.6 643.6,446.3 644.5,446.0 645.4,445.8 646.4,445.7 647.4,445.6 648.3,445.6 649.0,445.7 649.8,445.8 650.7,446.0 651.8,446.4 653.1,446.8 654.4,447.3 655.8,447.9 657.3,448.5 657.3,448.5 658.9,449.2 659.0,449.2 660.5,449.8 660.7,449.9 662.2,450.4 662.5,450.5 664.0,451.0 664.2,451.1 665.6,451.5 667.1,451.9 668.5,452.4 668.5,452.4 670.0,452.8 670.0,452.8 671.5,453.3 671.5,453.3 673.0,453.7 673.0,453.7 674.5,454.2 674.5,454.2 676.1,454.6 676.1,454.6 677.7,455.1 677.7,455.1 679.3,455.5 679.3,455.5 680.9,455.9 681.0,455.9 682.6,456.3 682.7,456.4 684.4,456.7 684.5,456.8 686.2,457.1 686.3,457.1 687.6,457.4 687.7,457.4 689.1,457.7 689.2,457.7 690.7,458.0 690.7,458.0 692.2,458.2 692.3,458.2 693.8,458.5 693.8,458.5 695.3,458.7 695.4,458.7 696.9,458.9 697.0,458.9 698.5,459.1 698.6,459.1 700.1,459.3 700.1,459.3 701.7,459.5 701.7,459.6 703.3,459.7 704.9,459.9 706.5,460.1 708.0,460.3 709.6,460.5 711.1,460.7 712.6,461.0 714.0,461.2 715.5,461.4 716.8,461.6 718.2,461.8 719.5,462.1 721.1,462.4 722.6,462.7 724.2,463.0 725.8,463.3 727.3,463.7 728.8,464.0 730.3,464.3 731.8,464.7 733.2,465.0 734.6,465.4 736.0,465.7 737.4,466.1 738.7,466.5 740.0,466.8 741.2,467.2 741.3,467.2 742.9,467.7 743.0,467.7 744.6,468.1 746.1,468.5 747.4,468.9 748.6,469.3 749.8,469.7 750.9,470.2 752.0,470.7 753.2,471.4 754.0,471.9 754.9,472.5 755.8,473.2 756.8,474.0 757.8,474.8 758.8,475.7 759.9,476.7 761.0,477.7 762.1,478.8 763.2,479.9 764.3,481.0 765.5,482.1 766.6,483.2 766.7,483.3 767.8,484.4 767.8,484.4 769.0,485.5 769.0,485.6 770.2,486.7 770.2,486.7 771.3,487.8 772.4,488.8 773.4,489.8 774.5,490.8 775.6,491.9 776.7,493.1 777.8,494.2 778.9,495.4 780.0,496.6 780.1,496.6 781.2,497.8 781.2,497.8 782.3,498.9 782.4,499.0 783.5,500.1 783.5,500.2 784.6,501.2 784.7,501.3 785.8,502.3 785.9,502.4 787.0,503.4 787.1,503.5 788.2,504.4 788.3,504.6 789.4,505.4 789.6,505.6 790.6,506.4 790.9,506.5 791.9,507.2 792.2,507.4 793.7,508.3 794.0,508.5 795.5,509.3 795.8,509.5 797.2,510.1 797.6,510.3 799.0,510.9 799.3,511.0 800.7,511.5 801.0,511.6 802.4,512.0 802.7,512.1 804.1,512.4 804.3,512.5 805.7,512.8 807.4,513.2 809.3,513.7 809.6,513.7 811.5,514.1 812.4,514.2 814.2,514.3 815.0,514.3 815.9,514.3 817.4,514.0 818.3,513.8 819.2,513.5 820.1,513.1 821.3,512.4 822.0,511.9 822.7,511.3 823.2,510.7 823.7,510.1 824.2,509.5 824.5,508.9 824.9,508.0 825.2,507.1 825.5,506.1 825.6,505.4 825.8,504.2 825.9,503.8 826.0,502.4 826.0,502.1 826.0,500.6 826.0,500.4 826.0,498.8 826.0,498.6 825.9,496.9 825.9,496.8 825.8,495.0 825.8,494.9 825.6,493.1 825.6,493.1 825.4,491.2 825.4,491.2 825.2,489.3 825.1,487.5 824.9,485.7 824.7,484.0 824.6,482.3 824.5,480.8 824.5,479.3 824.5,477.8 824.5,477.7 824.4,476.1 824.4,476.1 824.4,474.4 824.4,474.4 824.3,472.7 824.3,472.7 824.2,471.0 824.2,471.0 824.2,469.3 824.1,467.6 824.0,466.0 823.9,464.3 823.9,462.8 823.9,461.3 823.8,459.8 823.9,458.5 823.9,457.3 824.0,456.1 824.1,455.2 824.2,454.4 824.3,453.9 824.7,452.7 825.0,452.1 825.2,451.8 825.4,451.6 825.7,451.4 826.3,451.1 827.0,451.0 827.3,450.9 827.6,451.0 828.2,451.1 828.8,451.4 829.2,451.7 829.6,452.0 829.9,452.4 830.2,453.0 830.6,454.1 830.8,454.6 830.9,455.3 831.0,456.2 831.1,457.3 831.1,458.5 831.2,459.8 831.2,461.3 831.1,462.8 831.1,464.3 831.0,466.0 830.9,467.6 830.9,469.4 830.8,471.1 830.7,472.8 830.7,472.8 830.6,474.5 830.6,474.6 830.5,476.3 830.5,476.3 830.5,478.0 830.5,478.1 830.4,479.7 830.4,479.8 830.4,481.3 830.4,482.8 830.3,484.2 830.2,485.8 830.1,487.5 829.9,489.2 829.7,490.9 829.5,492.7 829.5,492.7 829.4,494.5 829.4,494.5 829.2,496.2 829.2,496.3 829.0,498.0 829.0,498.1 828.9,499.8 828.9,499.9 828.8,501.6 828.8,501.7 828.7,503.3 828.7,503.5 828.7,505.0 828.7,505.3 828.8,506.7 828.8,507.0 828.9,508.4 829.0,508.7 829.2,510.0 829.3,510.5 829.5,511.6 829.7,512.2 830.1,513.2 830.4,514.0 830.9,514.9 831.5,515.9 832.5,517.1 833.0,517.7 833.6,518.2 834.8,519.1 835.9,519.8 837.3,520.5 838.2,520.9 839.7,521.4 840.2,521.6 841.8,522.1 841.9,522.1 843.5,522.5 845.0,522.9 846.4,523.3 846.5,523.3 848.0,523.8 848.2,523.8 849.8,524.2 850.0,524.3 851.7,524.7 851.9,524.7 853.6,525.0 853.9,525.1 855.6,525.4 856.0,525.4 857.7,525.6 858.1,525.6 859.8,525.7 860.4,525.7 862.0,525.7 862.7,525.6 864.3,525.5 865.0,525.3 866.4,525.0 867.0,524.9 868.5,524.5 869.0,524.3 870.4,523.8 870.8,523.6 872.3,523.0 872.6,522.9 874.1,522.1 874.4,522.0 875.8,521.2 876.0,521.1 877.4,520.2 877.6,520.1 879.0,519.2 879.2,519.0 880.5,518.1 880.6,518.0 881.9,517.0 882.3,516.7 883.4,515.8 883.8,515.3 884.9,514.2 885.2,513.9 886.1,512.7 886.3,512.5 887.3,511.2 887.4,511.1 888.3,509.8 888.3,509.7 889.2,508.4 890.1,507.1 890.9,506.0 891.7,505.0 892.4,504.2 893.1,503.6 893.7,503.1 894.5,502.6 895.5,502.1 896.5,501.6 897.7,501.2 899.0,500.8 900.3,500.4 901.8,500.0 903.4,499.6 905.0,499.1 905.1,499.1 906.7,498.7 906.8,498.7 908.5,498.2 908.5,498.2 910.0,497.8 911.5,497.4 912.9,496.9 914.4,496.5 915.8,496.2 917.3,495.8 918.7,495.4 920.2,495.1 921.7,494.8 923.2,494.4 924.8,494.1 926.3,493.9 927.9,493.6 929.1,493.5 930.4,493.3 931.8,493.2 933.3,493.1 934.8,493.0 936.3,492.9 937.9,492.9 939.6,492.8 941.2,492.8 942.9,492.7 944.6,492.7 944.6,492.7 946.3,492.6 946.4,492.6 948.0,492.6 948.1,492.6 949.7,492.5 949.8,492.5 951.4,492.4 951.5,492.4 953.1,492.3 953.2,492.3 954.7,492.2 954.8,492.2 956.3,492.1 956.5,492.0 957.9,491.9 958.1,491.8 959.4,491.6 959.7,491.6 961.0,491.4 961.1,491.3 963.0,491.0 963.1,491.0 964.9,490.6 965.0,490.5 966.7,490.1 966.9,490.1 968.5,489.7 968.8,489.6 970.4,489.1 970.8,489.0 972.2,488.4 972.7,488.3 974.1,487.6 974.6,487.4 975.9,486.7 976.4,486.4 977.7,485.5 978.2,485.2 979.5,484.3 979.8,484.0 981.1,482.9 981.4,482.6 982.6,481.4 982.9,481.2 984.0,479.9 984.3,479.6 985.4,478.3 985.6,478.0 986.6,476.6 986.8,476.3 987.7,474.9 987.9,474.5 988.7,473.1 988.9,472.7 989.6,471.2 989.7,470.8 990.3,469.4 990.4,468.9 990.8,467.5 990.9,467.1 991.2,465.5 991.3,465.2 991.5,463.6 991.6,463.4 991.7,461.8 991.8,461.5 991.9,459.9 991.9,459.8 991.9,458.2 991.9,458.0 992.0,456.5 992.0,456.3 991.9,454.9 991.9,454.8 991.9,453.4 991.9,453.3 991.8,451.4 991.8,451.1 991.6,449.4 991.5,448.9 991.2,447.3 991.1,446.7 990.6,445.1 990.4,444.5 989.7,442.7 989.6,442.4 989.0,441.2 988.9,441.0 988.3,439.8 988.2,439.6 987.5,438.3 987.4,438.2 986.6,436.8 986.5,436.7 985.7,435.3 985.6,435.2 984.7,433.8 984.6,433.7 983.6,432.3 983.5,432.2 982.5,430.8 982.4,430.7 981.4,429.4 981.3,429.2 980.2,428.0 980.1,427.8 979.0,426.6 978.8,426.4 977.8,425.3 977.6,425.1 976.5,424.1 976.0,423.7 974.7,422.6 974.1,422.2 972.6,421.3 972.1,421.0 970.6,420.2 970.3,420.0 968.7,419.3 968.6,419.3 967.0,418.6 965.6,418.0 964.5,417.5 963.7,417.0 963.2,416.6 962.8,416.3 962.5,415.8 962.1,415.1 961.7,414.2 961.3,413.2 960.9,412.0 960.6,410.7 960.2,409.2 959.8,407.6 959.8,407.5 959.4,406.0 959.1,404.6 958.8,403.2 958.5,401.7 958.2,400.1 957.9,398.5 957.7,396.8 957.4,395.1 957.4,395.1 957.1,393.5 957.1,393.4 956.9,391.9 956.9,391.8 956.6,390.3 956.6,390.2 956.3,388.8 956.2,388.6 956.0,387.3 955.9,387.3 955.5,385.6 955.5,385.6 955.2,384.1 955.1,383.9 954.7,382.6 954.6,382.2 954.1,380.8 953.9,380.4 953.2,378.8 953.1,378.5 952.6,377.5 952.5,377.4 952.0,376.3 951.9,376.2 951.3,375.1 951.2,375.0 950.5,373.7 950.5,373.7 949.7,372.4 949.7,372.3 948.9,371.0 948.8,370.9 948.0,369.5 948.0,369.5 947.1,368.0 947.0,368.0 946.1,366.6 946.1,366.5 945.1,365.1 945.1,365.0 944.1,363.6 944.1,363.5 943.1,362.1 943.1,362.1 942.1,360.7 942.0,360.6 941.0,359.3 941.0,359.2 940.0,357.9 939.9,357.9 939.0,356.6 938.9,356.5 937.9,355.4 937.8,355.3 936.9,354.2 936.8,354.1 935.7,352.9 935.6,352.8 934.5,351.6 934.3,351.5 933.2,350.4 933.1,350.3 932.0,349.2 931.9,349.1 930.7,348.1 930.6,348.0 929.5,347.1 929.3,347.0 928.2,346.0 928.1,346.0 926.9,345.1 926.8,345.0 925.6,344.1 925.5,344.0 924.3,343.2 924.2,343.1 922.9,342.2 922.8,342.2 921.6,341.3 921.5,341.3 920.2,340.4 920.1,340.4 918.7,339.5 918.6,339.5 917.3,338.7 917.2,338.6 915.8,337.8 915.7,337.8 914.3,337.0 914.2,336.9 912.7,336.2 912.6,336.1 911.2,335.4 911.1,335.3 909.6,334.6 909.5,334.6 908.0,333.9 907.9,333.8 906.4,333.2 906.3,333.1 904.7,332.5 904.6,332.4 903.1,331.8 903.0,331.8 901.4,331.2 901.3,331.1 899.9,330.7 899.8,330.6 898.4,330.1 898.2,330.1 896.8,329.7 896.7,329.6 895.3,329.2 895.2,329.2 893.8,328.8 893.7,328.8 892.2,328.4 892.1,328.4 890.7,328.0 890.6,328.0 889.1,327.6 889.1,327.6 887.6,327.3 887.5,327.3 886.0,327.0 886.0,326.9 884.5,326.6 884.5,326.6 883.0,326.3 883.0,326.3 881.4,326.0 879.9,325.7 878.4,325.4 876.9,325.1 876.8,325.1 875.4,324.8 875.3,324.7 873.9,324.5 873.8,324.5 872.3,324.2 872.2,324.2 870.7,324.0 870.7,323.9 869.2,323.7 869.1,323.7 867.6,323.5 867.6,323.5 866.1,323.3 866.1,323.2 864.5,323.0 863.0,322.8 861.5,322.6 860.0,322.4 858.5,322.2 857.1,321.9 855.7,321.7 854.2,321.4 852.9,321.2 851.5,320.9 850.2,320.6 849.0,320.3 847.6,320.0 846.3,319.6 844.9,319.2 843.6,318.8 842.3,318.3 840.9,317.9 839.6,317.4 838.2,317.0 836.9,316.5 835.5,316.0 834.1,315.4 834.1,315.4 832.7,314.9 832.6,314.9 831.2,314.4 831.1,314.4 829.7,313.9 829.6,313.9 828.1,313.4 828.1,313.4 826.6,312.9 826.5,312.9 825.2,312.4 823.8,312.0 822.4,311.5 821.0,311.1 819.6,310.6 818.2,310.1 816.7,309.6 816.7,309.6 815.2,309.1 815.2,309.1 813.7,308.6 813.7,308.6 812.2,308.1 812.2,308.1 810.7,307.6 810.6,307.6 809.1,307.2 809.1,307.1 807.6,306.7 807.5,306.7 806.0,306.2 805.9,306.2 804.5,305.8 804.4,305.8 802.9,305.4 802.8,305.3 801.3,304.9 801.2,304.9 799.7,304.6 799.6,304.5 798.1,304.2 798.0,304.2 796.5,303.9 796.4,303.8 794.8,303.5 794.7,303.5 793.2,303.3 793.1,303.2 791.6,303.0 791.5,303.0 790.0,302.7 789.9,302.7 788.4,302.5 788.4,302.5 786.9,302.3 786.8,302.3 785.3,302.1 785.2,302.1 783.7,301.9 783.6,301.9 782.1,301.8 782.0,301.8 780.5,301.6 780.4,301.6 778.9,301.5 778.9,301.5 777.3,301.4 777.3,301.4 775.7,301.3 775.7,301.3 774.1,301.2 774.1,301.2 772.5,301.1 772.4,301.1 770.9,301.0 770.8,301.0 769.2,300.9 769.2,300.9 767.5,300.9 767.5,300.9 765.9,300.8 765.8,300.8 764.4,300.8 764.3,300.8 762.8,300.7 762.7,300.7 761.3,300.7 761.2,300.8 759.7,300.8 759.6,300.8 758.1,300.8 758.0,300.8 756.5,300.8 756.4,300.9 754.8,300.9 754.8,300.9 753.2,301.0 753.2,301.0 751.6,301.1 751.6,301.1 750.0,301.1 750.0,301.1 748.4,301.2 748.3,301.2 746.7,301.3 746.7,301.3 745.1,301.4 743.5,301.5 742.0,301.6 740.4,301.7 738.9,301.8 737.3,301.9 735.9,301.9 734.4,302.0 733.0,302.0 731.6,302.1 730.3,302.1 729.0,302.1 727.8,302.1 726.6,302.1 724.8,302.1 723.1,302.0 721.5,302.0 719.9,301.9 718.4,301.8 717.0,301.8 715.6,301.7 714.2,301.6 712.8,301.4 711.4,301.2 710.0,301.0 708.6,300.8 707.1,300.5 705.8,300.3 704.6,300.0 703.3,299.7 702.0,299.3 700.7,299.0 699.3,298.6 697.9,298.1 696.5,297.7 695.1,297.2 693.6,296.7 692.1,296.2 690.6,295.7 689.1,295.2 689.1,295.2 687.6,294.7 687.6,294.7 686.1,294.2 686.1,294.2 684.5,293.7 684.5,293.7 683.0,293.2 682.9,293.2 681.4,292.8 681.4,292.7 679.9,292.3 679.8,292.3 678.4,291.9 677.0,291.5 675.5,291.0 674.0,290.6 672.6,290.2 671.1,289.7 669.6,289.3 669.6,289.3 668.1,288.8 668.1,288.8 666.6,288.4 666.6,288.4 665.1,288.0 665.0,288.0 663.6,287.5 663.5,287.5 662.0,287.1 662.0,287.1 660.5,286.7 660.5,286.7 659.0,286.3 658.9,286.3 657.5,285.9 657.4,285.9 656.0,285.6 655.9,285.5 654.4,285.2 654.3,285.2 652.9,284.9 652.8,284.8 651.4,284.5 651.3,284.5 649.9,284.2 649.8,284.2 648.2,283.9 648.1,283.9 646.6,283.7 646.5,283.7 645.0,283.4 644.9,283.4 643.4,283.2 643.3,283.2 641.9,283.0 641.8,283.0 640.3,282.8 640.2,282.8 638.8,282.7 638.7,282.7 637.3,282.5 637.2,282.5 635.8,282.4 635.7,282.4 634.3,282.3 634.2,282.2 632.8,282.1 632.7,282.1 631.2,282.0 631.2,282.0 629.7,281.9 628.2,281.8 626.6,281.7 625.0,281.5 625.0,281.5 623.6,281.4 623.5,281.4 622.1,281.3 622.1,281.3 620.6,281.2 620.6,281.2 619.1,281.1 619.1,281.1 617.6,281.1 617.6,281.1 616.1,281.0 616.1,281.0 614.6,280.9 614.6,280.9 613.1,280.9 613.0,280.9 611.5,280.8 610.0,280.8 608.5,280.7 607.0,280.7 605.4,280.6 603.9,280.5 602.4,280.4 600.9,280.4 599.4,280.3 597.9,280.2 596.4,280.1 595.0,279.9 593.5,279.8 592.1,279.6 590.6,279.5 589.1,279.3 587.6,279.1 586.2,278.9 584.7,278.7 583.2,278.5 581.7,278.3 580.2,278.1 578.8,277.9 577.3,277.7 575.8,277.4 574.3,277.2 572.8,276.9 571.3,276.7 569.8,276.4 568.4,276.1 566.9,275.8 565.4,275.5 563.9,275.2 562.4,274.9 560.9,274.6 559.4,274.2 557.9,273.9 556.5,273.6 555.1,273.2 553.7,272.9 552.3,272.5 550.9,272.2 549.5,271.8 548.1,271.4 546.6,271.0 545.2,270.6 543.8,270.1 542.3,269.7 540.9,269.3 539.4,268.8 538.0,268.4 536.5,267.9 535.1,267.5 533.7,267.0 532.2,266.6 530.8,266.1 529.3,265.6 527.9,265.2 526.5,264.7 525.0,264.2 523.6,263.8 522.2,263.3 520.8,262.8 519.4,262.4 517.9,261.9 516.4,261.4 514.9,260.9 513.4,260.4 511.9,259.8 510.4,259.3 508.9,258.8 507.4,258.3 505.9,257.7 504.4,257.2 503.0,256.7 501.5,256.1 500.0,255.6 498.6,255.1 497.1,254.5 495.7,254.0 494.2,253.5 492.8,252.9 491.4,252.4 490.0,251.9 488.6,251.4 487.2,250.9 485.9,250.4 484.3,249.8 482.9,249.2 481.4,248.7 479.9,248.1 478.5,247.5 477.0,246.9 475.6,246.3 474.1,245.7 474.1,245.7 472.7,245.2 472.6,245.2 471.2,244.6 471.2,244.6 469.7,244.0 469.7,244.0 468.3,243.5 468.2,243.4 466.8,242.9 466.7,242.9 465.3,242.4 465.2,242.3 463.8,241.8 463.7,241.8 462.3,241.3 462.1,241.3 460.7,240.9 460.6,240.8 459.1,240.4 459.0,240.3 457.5,239.9 457.4,239.9 455.9,239.4 455.8,239.4 454.3,239.0 454.2,239.0 452.7,238.5 452.6,238.5 451.1,238.1 451.0,238.1 449.4,237.7 449.4,237.7 447.8,237.3 447.7,237.3 446.2,237.0 446.1,237.0 444.6,236.6 444.5,236.6 443.0,236.3 442.9,236.3 441.4,236.0 441.3,236.0 439.8,235.7 439.7,235.7 438.1,235.4 438.0,235.4 436.5,235.2 436.5,235.2 434.9,235.0 433.4,234.7 433.4,234.7 431.8,234.5 431.8,234.5 430.3,234.3 430.2,234.3 428.6,234.1 428.5,234.1 427.0,233.9 426.8,233.9 425.3,233.8 425.1,233.8 423.6,233.7 423.3,233.7 421.8,233.6 421.5,233.6 420.0,233.6 419.7,233.7 418.1,233.7 417.8,233.8 416.2,233.9 415.9,234.0 414.3,234.2 414.0,234.2 412.5,234.5 412.3,234.6 410.8,234.9 410.6,234.9 409.1,235.3 408.9,235.4 407.4,235.8 407.2,235.9 405.7,236.4 405.5,236.4 404.0,236.9 403.8,237.0 402.3,237.6 402.2,237.6 400.6,238.2 400.5,238.3 399.0,238.9 398.8,239.0 397.3,239.6 397.2,239.7 395.7,240.4 395.6,240.4 394.1,241.1 394.0,241.2 392.6,241.9 392.5,241.9 391.0,242.7 390.9,242.7 389.5,243.5 389.5,243.5 388.1,244.3 388.0,244.3 386.7,245.1 386.5,245.2 385.2,246.0 384.9,246.1 383.6,247.0 383.4,247.1 382.2,248.0 382.0,248.2 380.8,249.1 380.7,249.2 379.5,250.1 379.4,250.2 378.3,251.2 378.2,251.2 377.1,252.2 377.0,252.2 375.9,253.2 374.8,254.2 373.7,255.2 372.6,256.1 371.6,256.9 370.5,257.8 369.4,258.5 368.3,259.3 367.3,259.9 366.2,260.5 365.0,261.2 363.7,261.8 362.4,262.4 361.0,263.0 359.6,263.7 358.1,264.3 356.6,265.0 356.6,265.0 355.1,265.6 355.0,265.7 353.6,266.3 353.5,266.4 352.0,267.1 351.9,267.1 350.5,267.8 350.3,267.9 348.9,268.7 348.7,268.8 347.4,269.5 347.1,269.7 345.8,270.5 345.6,270.6 344.3,271.5 344.1,271.7 342.9,272.6 342.7,272.8 341.4,273.8 341.3,273.9 340.1,274.9 340.0,275.0 338.7,276.1 338.6,276.2 337.4,277.4 337.3,277.5 336.1,278.6 336.0,278.8 334.9,280.0 334.8,280.1 333.6,281.3 333.5,281.4 332.5,282.7 332.3,282.8 331.3,284.1 331.2,284.2 330.2,285.5 330.1,285.7 329.2,287.0 329.1,287.2 328.3,288.4 328.1,288.7 327.4,290.0 327.2,290.2 326.6,291.5 326.4,291.8 325.9,293.1 325.7,293.6 325.2,295.1 325.0,295.8 324.7,297.3 324.6,297.8 324.4,299.5 324.4,299.8 324.3,301.5 324.3,301.8 324.3,303.4 324.3,303.6 324.4,305.2 324.4,305.3 324.4,306.8 324.5,308.3 324.5,309.5 324.4,310.5Z" fill="none" stroke="#22d822" stroke-width="1.35"/>
<path d="M325.1,305.5 324.8,306.5 324.3,307.6 323.6,309.0 323.4,309.5 322.8,311.0 322.5,312.2 322.3,313.8 322.2,314.8 322.2,316.3 322.2,316.8 322.4,318.5 322.4,318.9 322.7,320.6 322.8,321.1 323.3,322.8 323.4,323.3 324.0,325.0 324.2,325.6 324.9,327.1 325.5,328.0 326.3,329.1 326.8,329.7 327.4,330.3 328.7,331.4 329.3,331.8 329.9,332.2 331.4,333.0 332.5,333.5 334.2,334.1 335.2,334.4 337.0,334.7 338.0,334.9 339.7,335.0 340.8,335.0 342.5,334.8 343.6,334.7 345.2,334.3 346.2,334.0 347.8,333.3 348.6,333.0 350.2,332.2 350.8,331.8 352.3,330.8 353.0,330.3 354.0,329.5 354.5,329.0 355.5,327.9 355.8,327.6 356.8,326.4 357.0,326.1 357.9,324.9 358.0,324.7 359.0,323.4 359.0,323.3 359.9,322.0 360.8,320.7 361.7,319.5 362.4,318.6 363.2,317.7 364.3,316.5 364.4,316.4 365.6,315.2 366.6,314.0 367.3,313.4 367.6,313.5 367.9,313.8 367.9,314.6 367.7,315.8 367.4,317.3 367.1,318.1 366.8,319.0 366.4,320.1 365.8,321.3 365.2,322.6 364.4,323.9 363.7,325.3 362.9,326.7 362.0,328.2 362.0,328.2 361.2,329.7 361.2,329.7 360.4,331.1 360.3,331.2 359.6,332.6 359.5,332.7 358.9,334.0 358.2,335.4 357.4,336.7 356.7,338.0 355.8,339.4 355.8,339.4 355.0,340.8 355.0,340.9 354.2,342.3 354.1,342.4 353.4,343.8 353.3,344.0 352.7,345.3 352.5,345.6 352.0,346.9 351.8,347.3 351.4,348.6 351.3,349.1 351.0,350.4 350.9,350.9 350.6,352.7 350.5,353.1 350.4,354.9 350.4,355.4 350.4,357.2 350.5,357.9 350.7,359.6 350.9,360.5 351.3,362.0 351.5,362.6 351.8,363.2 352.5,364.5 353.0,365.2 353.5,365.8 354.5,366.9 355.0,367.4 355.5,367.8 356.9,368.8 357.8,369.3 359.5,370.1 360.4,370.5 362.1,371.1 363.1,371.4 364.9,371.8 366.1,371.9 367.8,372.0 369.1,371.9 370.5,371.8 371.5,371.6 372.9,371.2 373.7,371.0 375.1,370.4 375.7,370.2 377.2,369.5 377.7,369.2 379.1,368.4 379.5,368.2 381.0,367.2 381.3,367.0 382.7,365.9 383.0,365.8 384.4,364.6 384.6,364.5 386.0,363.3 386.3,363.1 387.2,362.1 387.5,361.9 388.5,360.8 388.7,360.6 389.7,359.5 389.8,359.3 390.8,358.1 391.0,358.0 392.0,356.7 392.1,356.5 393.1,355.2 393.1,355.1 394.1,353.7 394.2,353.6 395.2,352.1 395.2,352.1 396.2,350.6 396.2,350.6 397.2,349.1 397.2,349.0 398.1,347.6 398.1,347.6 399.0,346.1 399.1,346.1 399.9,344.7 399.9,344.7 400.7,343.3 400.8,343.3 401.5,342.0 402.3,340.8 402.9,339.7 403.1,339.5 404.0,337.8 404.2,337.4 404.9,335.7 405.0,335.5 405.7,333.9 406.2,332.6 406.6,331.7 406.9,331.2 407.2,330.9 407.8,330.5 408.6,329.9 409.6,329.4 410.7,328.9 411.7,328.6 412.5,328.3 412.9,328.3 413.1,328.3 413.7,328.6 414.6,329.1 415.3,329.7 415.9,330.3 416.0,330.5 416.0,330.5 416.1,330.9 416.1,331.7 415.9,332.9 415.6,334.3 415.3,335.2 415.0,336.1 414.5,337.2 413.8,338.4 413.1,339.7 412.3,341.1 411.5,342.6 410.6,344.1 410.6,344.2 409.8,345.7 409.7,345.8 408.9,347.3 408.9,347.3 408.2,348.6 407.5,349.9 406.7,351.2 405.9,352.6 405.1,354.0 405.1,354.0 404.2,355.5 404.2,355.5 403.4,356.9 403.4,357.0 402.6,358.4 402.5,358.5 401.8,359.9 401.7,360.0 401.0,361.5 400.9,361.6 400.3,363.0 400.2,363.2 399.6,364.6 399.5,364.7 398.9,366.3 398.2,367.8 398.2,367.9 397.5,369.5 397.5,369.6 396.8,371.2 396.8,371.4 396.2,373.0 396.1,373.2 395.6,374.8 395.5,375.1 395.1,376.7 395.0,377.1 394.7,378.6 394.7,379.2 394.5,380.7 394.5,381.4 394.6,382.8 394.7,383.6 395.0,385.2 395.2,386.0 395.8,387.6 396.0,388.2 396.8,389.8 397.1,390.3 398.0,391.8 398.3,392.3 399.3,393.6 399.8,394.2 400.9,395.3 401.4,395.9 402.6,396.9 403.3,397.4 404.6,398.2 405.3,398.7 406.7,399.3 407.5,399.6 409.0,400.2 409.7,400.4 411.3,400.8 412.0,400.9 413.6,401.2 414.4,401.2 416.0,401.3 416.8,401.3 418.3,401.2 419.4,401.0 420.9,400.7 421.8,400.5 423.4,400.0 424.1,399.7 425.7,399.0 426.3,398.7 427.8,397.8 428.4,397.4 429.8,396.4 430.3,396.0 431.7,394.9 432.2,394.4 433.4,393.2 434.0,392.6 434.8,391.5 435.2,390.8 435.9,389.6 436.2,389.1 436.8,387.8 437.0,387.4 437.5,385.9 437.6,385.7 438.1,384.2 438.2,384.1 438.7,382.5 438.7,382.5 439.2,381.0 439.6,379.6 440.1,378.3 440.5,377.2 441.1,376.2 441.8,374.9 442.7,373.5 443.6,372.1 444.5,370.8 445.4,369.6 446.2,368.5 447.0,367.7 447.6,367.1 447.9,366.9 448.6,366.5 449.1,366.3 449.4,366.3 449.7,366.3 449.9,366.4 450.7,366.7 451.6,367.3 452.5,367.9 453.2,368.5 453.4,368.8 453.6,369.1 453.7,369.6 453.8,370.4 453.9,371.6 453.8,372.9 453.7,373.6 453.5,374.5 453.1,375.6 452.6,376.9 452.0,378.4 451.9,378.5 451.3,380.1 451.2,380.3 450.6,381.9 450.5,382.2 450.0,383.9 449.9,384.3 449.5,386.0 449.4,386.6 449.2,388.3 449.2,388.8 449.1,390.1 449.1,390.3 449.1,391.8 449.1,391.9 449.1,393.5 449.1,393.6 449.2,395.3 449.2,395.4 449.3,397.1 449.3,397.2 449.4,399.0 449.4,399.1 449.6,400.8 449.6,401.0 449.8,402.7 449.9,402.9 450.1,404.6 450.1,404.8 450.4,406.5 450.5,406.6 450.8,408.3 450.8,408.5 451.2,410.0 451.3,410.3 451.7,411.8 451.8,412.1 452.3,413.4 452.4,413.8 453.0,415.0 453.2,415.5 453.8,416.5 454.1,417.1 454.8,418.0 455.4,418.9 456.7,420.2 457.7,421.0 459.1,422.0 460.2,422.6 461.8,423.4 462.8,423.8 464.5,424.3 465.5,424.6 467.2,424.8 468.2,424.9 469.9,425.0 471.0,425.0 472.5,424.8 473.4,424.7 475.0,424.3 475.7,424.1 477.3,423.6 478.0,423.3 479.6,422.6 480.2,422.3 481.7,421.5 482.3,421.1 483.8,420.1 484.3,419.7 485.7,418.6 486.3,418.1 487.5,416.8 488.0,416.2 488.8,415.1 489.3,414.4 490.0,413.2 490.2,412.7 490.8,411.3 491.0,410.9 491.5,409.4 491.6,409.1 492.1,407.5 492.1,407.3 492.6,405.7 492.6,405.5 493.0,403.9 493.0,403.8 493.4,402.1 493.4,402.1 493.7,400.4 494.1,398.8 494.4,397.3 494.8,395.8 494.8,395.7 495.2,394.2 495.3,393.9 495.6,392.3 495.7,392.1 496.0,390.5 496.0,390.4 496.3,388.7 496.3,388.6 496.6,386.9 496.9,385.3 497.2,383.8 497.5,382.4 497.9,381.2 498.2,380.3 498.5,379.5 498.9,379.0 499.5,378.3 500.2,377.5 500.9,376.9 501.6,376.4 502.1,376.1 502.3,376.0 502.3,376.0 502.9,376.1 503.9,376.5 504.8,376.9 505.6,377.4 505.8,377.6 505.8,377.6 505.8,378.5 505.5,379.8 505.1,381.5 504.7,383.3 504.7,383.5 504.3,385.4 504.1,386.6 503.8,387.8 503.4,389.1 503.0,390.5 502.6,391.9 502.1,393.4 502.1,393.4 501.6,395.0 501.6,395.0 501.1,396.5 501.1,396.6 500.6,398.2 500.6,398.3 500.2,399.8 500.1,400.0 499.8,401.5 499.8,401.8 499.5,403.2 499.4,403.5 499.2,405.0 499.2,405.2 499.1,406.8 499.1,406.9 498.9,408.6 498.9,408.7 498.8,410.4 498.8,410.5 498.7,412.2 498.7,412.4 498.7,414.1 498.7,414.4 498.8,416.0 498.8,416.3 499.0,417.9 499.0,418.4 499.3,419.9 499.4,420.4 499.9,421.9 500.1,422.5 500.6,423.9 500.9,424.5 501.7,425.9 501.9,426.3 502.9,427.7 503.1,428.1 504.2,429.4 504.5,429.8 505.7,431.1 506.0,431.4 507.3,432.7 507.6,433.0 508.9,434.2 509.4,434.5 510.7,435.5 511.3,435.9 512.7,436.7 513.4,437.1 514.8,437.7 515.9,438.1 517.2,438.4 517.9,438.6 518.7,438.7 520.1,438.8 521.5,438.8 523.0,438.6 524.1,438.4 525.6,438.0 526.5,437.7 528.0,437.1 528.7,436.9 530.2,436.1 530.8,435.8 532.3,434.9 532.7,434.5 534.1,433.5 534.5,433.2 535.8,432.0 536.4,431.6 537.3,430.6 537.7,430.0 538.6,428.9 538.9,428.5 539.6,427.2 539.8,426.9 540.6,425.5 540.7,425.2 541.4,423.8 541.5,423.6 542.2,422.0 542.2,421.9 542.9,420.3 542.9,420.2 543.5,418.6 543.6,418.6 544.2,417.0 544.8,415.4 545.4,414.0 545.9,412.7 546.5,411.6 547.1,410.5 547.9,409.0 548.0,408.8 548.8,407.3 549.6,405.8 550.3,404.5 551.0,403.6 551.4,403.0 551.7,402.7 551.8,402.7 551.9,402.6 552.5,402.5 553.4,402.3 554.4,402.3 555.4,402.3 555.9,402.4 556.1,402.9 556.2,403.5 556.1,403.8 555.7,404.6 555.0,405.6 554.1,406.9 553.2,408.4 553.1,408.5 552.2,410.0 552.0,410.3 551.1,411.8 550.9,412.2 550.2,413.7 550.0,414.4 549.5,416.0 549.3,416.5 549.0,417.9 549.0,418.1 548.7,419.6 548.7,419.8 548.5,421.3 548.5,421.5 548.3,423.0 548.3,423.2 548.1,424.8 548.1,425.0 548.1,426.6 548.1,426.8 548.0,428.4 548.0,428.6 548.1,430.2 548.1,430.4 548.2,432.0 548.2,432.2 548.4,433.7 548.4,434.0 548.6,435.5 548.7,435.8 549.0,437.2 549.0,437.5 549.4,438.8 549.5,439.2 550.1,440.8 550.2,441.1 550.9,442.7 551.1,443.0 551.8,444.5 552.0,444.8 552.9,446.2 553.1,446.6 554.1,447.9 554.3,448.3 555.3,449.5 555.6,449.9 556.7,451.0 557.1,451.4 558.1,452.3 558.7,452.8 559.8,453.6 560.5,454.0 562.0,454.9 562.8,455.3 564.4,456.0 565.3,456.2 567.0,456.7 567.9,456.9 569.7,457.2 570.8,457.3 572.5,457.3 573.3,457.3 574.0,457.2 575.5,456.9 576.4,456.6 577.3,456.3 578.5,455.7 579.1,455.3 579.7,454.9 580.9,454.1 581.6,453.4 582.6,452.3 583.0,451.8 584.0,450.6 584.3,450.3 585.2,448.9 585.3,448.8 586.3,447.4 587.2,445.9 587.3,445.8 588.1,444.5 588.3,444.2 589.0,442.9 589.1,442.6 589.8,441.2 589.9,441.0 590.5,439.5 590.6,439.4 591.2,437.9 591.2,437.9 591.9,436.3 592.5,434.8 593.1,433.4 593.7,432.1 594.4,431.0 595.1,429.8 596.0,428.5 596.0,428.5 597.0,427.0 597.9,425.5 598.9,424.1 599.9,422.8 600.7,421.7 600.8,421.7 601.4,422.3 601.8,422.8 601.9,422.9 601.9,423.1 601.8,423.9 601.6,425.1 601.2,426.5 600.8,428.1 600.8,428.2 600.3,429.8 600.3,430.0 599.9,431.7 599.8,432.1 599.6,433.6 599.6,433.7 599.4,435.2 599.1,436.6 598.8,438.2 598.8,438.3 598.5,439.9 598.4,440.1 598.2,441.7 598.1,442.1 598.0,443.6 598.0,444.2 598.0,445.6 598.0,446.4 598.2,447.8 598.5,448.9 598.9,450.1 599.2,450.8 599.5,451.4 600.4,452.7 601.0,453.5 602.2,454.8 602.8,455.4 604.2,456.5 604.9,457.0 606.4,458.0 607.1,458.4 608.7,459.2 609.7,459.6 611.3,460.1 612.6,460.5 614.1,460.7 615.0,460.7 615.9,460.7 617.3,460.6 618.1,460.5 618.8,460.3 620.2,459.9 621.2,459.5 622.6,458.8 623.2,458.4 624.6,457.6 625.0,457.3 626.4,456.4 626.6,456.2 628.0,455.1 628.1,455.1 629.5,454.0 630.8,453.0 631.0,452.8 632.2,451.8 632.6,451.4 633.8,450.2 634.0,450.0 635.1,448.7 635.3,448.6 636.4,447.3 636.4,447.2 637.5,445.9 638.5,444.7 639.5,443.6 640.4,442.8 641.0,442.2 641.7,441.8 642.5,441.3 643.4,440.9 644.4,440.6 645.3,440.3 646.2,440.1 647.2,440.0 648.2,439.9 649.1,439.9 649.8,440.0 650.6,440.1 651.5,440.3 652.6,440.7 653.9,441.1 655.2,441.6 656.6,442.2 658.1,442.8 658.1,442.8 659.7,443.5 659.8,443.5 661.3,444.1 661.5,444.2 663.0,444.7 663.3,444.8 664.8,445.3 665.0,445.4 666.4,445.8 667.9,446.2 669.3,446.7 669.3,446.7 670.8,447.1 670.8,447.1 672.3,447.6 672.3,447.6 673.8,448.0 673.8,448.0 675.3,448.5 675.3,448.5 676.9,448.9 676.9,448.9 678.5,449.4 678.5,449.4 680.1,449.8 680.1,449.8 681.7,450.2 681.8,450.2 683.4,450.6 683.5,450.7 685.2,451.0 685.3,451.1 687.0,451.4 687.1,451.4 688.4,451.7 688.5,451.7 689.9,452.0 690.0,452.0 691.5,452.3 691.5,452.3 693.0,452.5 693.1,452.5 694.6,452.8 694.6,452.8 696.1,453.0 696.2,453.0 697.7,453.2 697.8,453.2 699.3,453.4 699.4,453.4 700.9,453.6 700.9,453.6 702.5,453.8 702.5,453.9 704.1,454.0 705.7,454.2 707.3,454.4 708.8,454.6 710.4,454.8 711.9,455.0 713.4,455.3 714.8,455.5 716.3,455.7 717.6,455.9 719.0,456.1 720.3,456.4 721.9,456.7 723.4,457.0 725.0,457.3 726.6,457.6 728.1,458.0 729.6,458.3 731.1,458.6 732.6,459.0 734.0,459.3 735.4,459.7 736.8,460.0 738.2,460.4 739.5,460.8 740.8,461.1 742.0,461.5 742.1,461.5 743.7,462.0 743.8,462.0 745.4,462.4 746.9,462.8 748.2,463.2 749.4,463.6 750.6,464.0 751.7,464.5 752.8,465.0 754.0,465.7 754.8,466.2 755.7,466.8 756.6,467.5 757.6,468.3 758.6,469.1 759.6,470.0 760.7,471.0 761.8,472.0 762.9,473.1 764.0,474.2 765.1,475.3 766.3,476.4 767.4,477.5 767.5,477.6 768.6,478.7 768.6,478.7 769.8,479.8 769.8,479.9 771.0,481.0 771.0,481.0 772.1,482.1 773.2,483.1 774.2,484.1 775.3,485.1 776.4,486.2 777.5,487.4 778.6,488.5 779.7,489.7 780.8,490.9 780.9,490.9 782.0,492.1 782.0,492.1 783.1,493.2 783.2,493.3 784.3,494.4 784.3,494.5 785.4,495.5 785.5,495.6 786.6,496.6 786.7,496.7 787.8,497.7 787.9,497.8 789.0,498.7 789.1,498.9 790.2,499.7 790.4,499.9 791.4,500.7 791.7,500.8 792.7,501.5 793.0,501.7 794.5,502.6 794.8,502.8 796.3,503.6 796.6,503.8 798.0,504.4 798.4,504.6 799.8,505.2 800.1,505.3 801.5,505.8 801.8,505.9 803.2,506.3 803.5,506.4 804.9,506.7 805.1,506.8 806.5,507.1 808.2,507.5 810.1,508.0 810.4,508.0 812.3,508.4 813.2,508.5 815.0,508.6 815.8,508.6 816.7,508.6 818.2,508.3 819.1,508.1 820.0,507.8 820.9,507.4 822.1,506.7 822.8,506.2 823.5,505.6 824.0,505.0 824.5,504.4 825.0,503.8 825.3,503.2 825.7,502.3 826.0,501.4 826.3,500.4 826.4,499.7 826.6,498.5 826.7,498.1 826.8,496.7 826.8,496.4 826.8,494.9 826.8,494.7 826.8,493.1 826.8,492.9 826.7,491.2 826.7,491.1 826.6,489.3 826.6,489.2 826.4,487.4 826.4,487.4 826.2,485.5 826.2,485.5 826.0,483.6 825.9,481.8 825.7,480.0 825.5,478.3 825.4,476.6 825.3,475.1 825.3,473.6 825.3,472.1 825.3,472.0 825.2,470.4 825.2,470.4 825.2,468.7 825.2,468.7 825.1,467.0 825.1,467.0 825.0,465.3 825.0,465.3 825.0,463.6 824.9,461.9 824.8,460.3 824.7,458.6 824.7,457.1 824.7,455.6 824.6,454.1 824.7,452.8 824.7,451.6 824.8,450.4 824.9,449.5 825.0,448.7 825.1,448.2 825.5,447.0 825.8,446.4 826.0,446.1 826.2,445.9 826.5,445.7 827.1,445.4 827.8,445.3 828.1,445.2 828.4,445.3 829.0,445.4 829.6,445.7 830.0,446.0 830.4,446.3 830.7,446.7 831.0,447.3 831.4,448.4 831.6,448.9 831.7,449.6 831.8,450.5 831.9,451.6 831.9,452.8 832.0,454.1 832.0,455.6 831.9,457.1 831.9,458.6 831.8,460.3 831.7,461.9 831.7,463.7 831.6,465.4 831.5,467.1 831.5,467.1 831.4,468.8 831.4,468.9 831.3,470.6 831.3,470.6 831.3,472.3 831.3,472.4 831.2,474.0 831.2,474.1 831.2,475.6 831.2,477.1 831.1,478.5 831.0,480.1 830.9,481.8 830.7,483.5 830.5,485.2 830.3,487.0 830.3,487.0 830.2,488.8 830.2,488.8 830.0,490.5 830.0,490.6 829.8,492.3 829.8,492.4 829.7,494.1 829.7,494.2 829.6,495.9 829.6,496.0 829.5,497.6 829.5,497.8 829.5,499.3 829.5,499.6 829.6,501.0 829.6,501.3 829.7,502.7 829.8,503.0 830.0,504.3 830.1,504.8 830.3,505.9 830.5,506.5 830.9,507.5 831.2,508.3 831.7,509.2 832.3,510.2 833.3,511.4 833.8,512.0 834.4,512.5 835.6,513.4 836.7,514.1 838.1,514.8 839.0,515.2 840.5,515.7 841.0,515.9 842.6,516.4 842.7,516.4 844.3,516.8 845.8,517.2 847.2,517.6 847.3,517.6 848.8,518.1 849.0,518.1 850.6,518.5 850.8,518.6 852.5,519.0 852.7,519.0 854.4,519.3 854.7,519.4 856.4,519.7 856.8,519.7 858.5,519.9 858.9,519.9 860.6,520.0 861.2,520.0 862.8,520.0 863.5,519.9 865.1,519.8 865.8,519.6 867.2,519.3 867.8,519.2 869.3,518.8 869.8,518.6 871.2,518.1 871.6,517.9 873.1,517.3 873.4,517.2 874.9,516.4 875.2,516.3 876.6,515.5 876.8,515.4 878.2,514.5 878.4,514.4 879.8,513.5 880.0,513.3 881.3,512.4 881.4,512.3 882.7,511.3 883.1,511.0 884.2,510.1 884.6,509.6 885.7,508.5 886.0,508.2 886.9,507.0 887.1,506.8 888.1,505.5 888.2,505.4 889.1,504.1 889.1,504.0 890.0,502.7 890.9,501.4 891.7,500.3 892.5,499.3 893.2,498.5 893.9,497.9 894.5,497.4 895.3,496.9 896.3,496.4 897.3,495.9 898.5,495.5 899.8,495.1 901.1,494.7 902.6,494.3 904.2,493.9 905.8,493.4 905.9,493.4 907.5,493.0 907.6,493.0 909.3,492.5 909.3,492.5 910.8,492.1 912.3,491.7 913.7,491.2 915.2,490.8 916.6,490.5 918.1,490.1 919.5,489.7 921.0,489.4 922.5,489.1 924.0,488.7 925.6,488.4 927.1,488.2 928.7,487.9 929.9,487.8 931.2,487.6 932.6,487.5 934.1,487.4 935.6,487.3 937.1,487.2 938.7,487.2 940.4,487.1 942.0,487.1 943.7,487.0 945.4,487.0 945.4,487.0 947.1,486.9 947.2,486.9 948.8,486.9 948.9,486.9 950.5,486.8 950.6,486.8 952.2,486.7 952.3,486.7 953.9,486.6 954.0,486.6 955.5,486.5 955.6,486.5 957.1,486.4 957.3,486.3 958.7,486.2 958.9,486.1 960.2,485.9 960.5,485.9 961.8,485.7 961.9,485.6 963.8,485.3 963.9,485.3 965.7,484.9 965.8,484.8 967.5,484.4 967.7,484.4 969.3,484.0 969.6,483.9 971.2,483.4 971.6,483.3 973.0,482.7 973.5,482.6 974.9,481.9 975.4,481.7 976.7,481.0 977.2,480.7 978.5,479.8 979.0,479.5 980.3,478.6 980.6,478.3 981.9,477.2 982.2,476.9 983.4,475.7 983.7,475.5 984.8,474.2 985.1,473.9 986.2,472.6 986.4,472.3 987.4,470.9 987.6,470.6 988.5,469.2 988.7,468.8 989.5,467.4 989.7,467.0 990.4,465.5 990.5,465.1 991.1,463.7 991.2,463.2 991.6,461.8 991.7,461.4 992.0,459.8 992.1,459.5 992.3,457.9 992.4,457.7 992.5,456.1 992.6,455.8 992.7,454.2 992.7,454.1 992.7,452.5 992.7,452.3 992.8,450.8 992.8,450.6 992.7,449.2 992.7,449.1 992.7,447.7 992.7,447.6 992.6,445.7 992.6,445.4 992.4,443.7 992.3,443.2 992.0,441.6 991.9,441.0 991.4,439.4 991.2,438.8 990.5,437.0 990.4,436.7 989.8,435.5 989.7,435.3 989.1,434.1 989.0,433.9 988.3,432.6 988.2,432.5 987.4,431.1 987.3,431.0 986.5,429.6 986.4,429.5 985.5,428.1 985.4,428.0 984.4,426.6 984.3,426.5 983.3,425.1 983.2,425.0 982.2,423.7 982.1,423.5 981.0,422.3 980.9,422.1 979.8,420.9 979.6,420.7 978.6,419.6 978.4,419.4 977.3,418.4 976.8,418.0 975.5,416.9 974.9,416.5 973.4,415.6 972.9,415.3 971.4,414.5 971.1,414.3 969.5,413.6 969.4,413.6 967.8,412.9 966.4,412.3 965.3,411.8 964.5,411.3 964.0,410.9 963.6,410.6 963.3,410.1 962.9,409.4 962.5,408.5 962.1,407.5 961.7,406.3 961.4,405.0 961.0,403.5 960.6,401.9 960.6,401.8 960.2,400.3 959.9,398.9 959.6,397.5 959.3,396.0 959.0,394.4 958.7,392.8 958.5,391.1 958.2,389.4 958.2,389.4 957.9,387.8 957.9,387.7 957.7,386.2 957.7,386.1 957.4,384.6 957.4,384.5 957.1,383.1 957.0,382.9 956.8,381.6 956.7,381.6 956.3,379.9 956.3,379.9 956.0,378.4 955.9,378.2 955.5,376.9 955.4,376.5 954.9,375.1 954.7,374.7 954.0,373.1 953.9,372.8 953.4,371.8 953.3,371.7 952.8,370.6 952.7,370.5 952.1,369.4 952.0,369.3 951.3,368.0 951.3,368.0 950.5,366.7 950.5,366.6 949.7,365.3 949.6,365.2 948.8,363.8 948.8,363.8 947.9,362.3 947.8,362.3 946.9,360.9 946.9,360.8 945.9,359.4 945.9,359.3 944.9,357.9 944.9,357.8 943.9,356.4 943.9,356.4 942.9,355.0 942.8,354.9 941.8,353.6 941.8,353.5 940.8,352.2 940.7,352.2 939.8,350.9 939.7,350.8 938.7,349.7 938.6,349.6 937.7,348.5 937.6,348.4 936.5,347.2 936.4,347.1 935.3,345.9 935.1,345.8 934.0,344.7 933.9,344.6 932.8,343.5 932.7,343.4 931.5,342.4 931.4,342.3 930.3,341.4 930.1,341.3 929.0,340.3 928.9,340.3 927.7,339.4 927.6,339.3 926.4,338.4 926.3,338.3 925.1,337.5 925.0,337.4 923.7,336.5 923.6,336.5 922.4,335.6 922.3,335.6 921.0,334.7 920.9,334.7 919.5,333.8 919.4,333.8 918.1,333.0 918.0,332.9 916.6,332.1 916.5,332.1 915.1,331.3 915.0,331.2 913.5,330.5 913.4,330.4 912.0,329.7 911.9,329.6 910.4,328.9 910.3,328.9 908.8,328.2 908.7,328.1 907.2,327.5 907.1,327.4 905.5,326.8 905.4,326.7 903.9,326.1 903.8,326.1 902.2,325.5 902.1,325.4 900.7,325.0 900.6,324.9 899.2,324.4 899.0,324.4 897.6,324.0 897.5,323.9 896.1,323.5 896.0,323.5 894.6,323.1 894.5,323.1 893.0,322.7 892.9,322.7 891.5,322.3 891.4,322.3 889.9,321.9 889.9,321.9 888.4,321.6 888.3,321.6 886.8,321.3 886.8,321.2 885.3,320.9 885.3,320.9 883.8,320.6 883.8,320.6 882.2,320.3 880.7,320.0 879.2,319.7 877.7,319.4 877.6,319.4 876.2,319.1 876.1,319.0 874.7,318.8 874.6,318.8 873.1,318.5 873.0,318.5 871.5,318.3 871.5,318.2 870.0,318.0 869.9,318.0 868.4,317.8 868.4,317.8 866.9,317.6 866.9,317.5 865.3,317.3 863.8,317.1 862.3,316.9 860.8,316.7 859.3,316.5 857.9,316.2 856.5,316.0 855.0,315.7 853.7,315.5 852.3,315.2 851.0,314.9 849.8,314.6 848.4,314.3 847.1,313.9 845.7,313.5 844.4,313.1 843.1,312.6 841.7,312.2 840.4,311.7 839.0,311.3 837.7,310.8 836.3,310.3 834.9,309.7 834.9,309.7 833.5,309.2 833.4,309.2 832.0,308.7 831.9,308.7 830.5,308.2 830.4,308.2 828.9,307.7 828.9,307.7 827.4,307.2 827.3,307.2 826.0,306.7 824.6,306.3 823.2,305.8 821.8,305.4 820.4,304.9 819.0,304.4 817.5,303.9 817.5,303.9 816.0,303.4 816.0,303.4 814.5,302.9 814.5,302.9 813.0,302.4 813.0,302.4 811.5,301.9 811.4,301.9 809.9,301.5 809.9,301.4 808.4,301.0 808.3,301.0 806.8,300.5 806.7,300.5 805.3,300.1 805.2,300.1 803.7,299.7 803.6,299.6 802.1,299.2 802.0,299.2 800.5,298.9 800.4,298.8 798.9,298.5 798.8,298.5 797.3,298.2 797.2,298.1 795.6,297.8 795.5,297.8 794.0,297.6 793.9,297.5 792.4,297.3 792.3,297.3 790.8,297.0 790.7,297.0 789.2,296.8 789.2,296.8 787.7,296.6 787.6,296.6 786.1,296.4 786.0,296.4 784.5,296.2 784.4,296.2 782.9,296.1 782.8,296.1 781.3,295.9 781.2,295.9 779.7,295.8 779.7,295.8 778.1,295.7 778.1,295.7 776.5,295.6 776.5,295.6 774.9,295.5 774.9,295.5 773.3,295.4 773.2,295.4 771.7,295.3 771.6,295.3 770.0,295.2 770.0,295.2 768.3,295.2 768.3,295.2 766.7,295.1 766.6,295.1 765.2,295.1 765.1,295.1 763.6,295.0 763.5,295.0 762.1,295.0 762.0,295.1 760.5,295.1 760.4,295.1 758.9,295.1 758.8,295.1 757.3,295.1 757.2,295.2 755.6,295.2 755.6,295.2 754.0,295.3 754.0,295.3 752.4,295.4 752.4,295.4 750.8,295.4 750.8,295.4 749.2,295.5 749.1,295.5 747.5,295.6 747.5,295.6 745.9,295.7 744.3,295.8 742.8,295.9 741.2,296.0 739.7,296.1 738.1,296.2 736.7,296.2 735.2,296.3 733.8,296.3 732.4,296.4 731.1,296.4 729.8,296.4 728.6,296.4 727.4,296.4 725.6,296.4 723.9,296.3 722.3,296.3 720.7,296.2 719.2,296.1 717.8,296.1 716.4,296.0 715.0,295.9 713.6,295.7 712.2,295.5 710.8,295.3 709.4,295.1 707.9,294.8 706.6,294.6 705.4,294.3 704.1,294.0 702.8,293.6 701.5,293.3 700.1,292.9 698.7,292.4 697.3,292.0 695.9,291.5 694.4,291.0 692.9,290.5 691.4,290.0 689.9,289.5 689.9,289.5 688.4,289.0 688.4,289.0 686.9,288.5 686.9,288.5 685.3,288.0 685.3,288.0 683.8,287.5 683.7,287.5 682.2,287.1 682.2,287.0 680.7,286.6 680.6,286.6 679.2,286.2 677.8,285.8 676.3,285.3 674.8,284.9 673.4,284.5 671.9,284.0 670.4,283.6 670.4,283.6 668.9,283.1 668.9,283.1 667.4,282.7 667.4,282.7 665.9,282.3 665.8,282.3 664.4,281.8 664.3,281.8 662.8,281.4 662.8,281.4 661.3,281.0 661.3,281.0 659.8,280.6 659.7,280.6 658.3,280.2 658.2,280.2 656.8,279.9 656.7,279.8 655.2,279.5 655.1,279.5 653.7,279.2 653.6,279.1 652.2,278.8 652.1,278.8 650.7,278.5 650.6,278.5 649.0,278.2 648.9,278.2 647.4,278.0 647.3,278.0 645.8,277.7 645.7,277.7 644.2,277.5 644.1,277.5 642.7,277.3 642.6,277.3 641.1,277.1 641.0,277.1 639.6,277.0 639.5,277.0 638.1,276.8 638.0,276.8 636.6,276.7 636.5,276.7 635.1,276.6 635.0,276.5 633.6,276.4 633.5,276.4 632.0,276.3 632.0,276.3 630.5,276.2 629.0,276.1 627.4,276.0 625.8,275.8 625.8,275.8 624.4,275.7 624.3,275.7 622.9,275.6 622.9,275.6 621.4,275.5 621.4,275.5 619.9,275.4 619.9,275.4 618.4,275.4 618.4,275.4 616.9,275.3 616.9,275.3 615.4,275.2 615.4,275.2 613.9,275.2 613.8,275.2 612.3,275.1 610.8,275.1 609.3,275.0 607.8,275.0 606.2,274.9 604.7,274.8 603.2,274.7 601.7,274.7 600.2,274.6 598.7,274.5 597.2,274.4 595.8,274.2 594.3,274.1 592.9,273.9 591.4,273.8 589.9,273.6 588.4,273.4 587.0,273.2 585.5,273.0 584.0,272.8 582.5,272.6 581.0,272.4 579.6,272.2 578.1,272.0 576.6,271.7 575.1,271.5 573.6,271.2 572.1,271.0 570.6,270.7 569.2,270.4 567.7,270.1 566.2,269.8 564.7,269.5 563.2,269.2 561.7,268.9 560.2,268.5 558.7,268.2 557.3,267.9 555.9,267.5 554.5,267.2 553.1,266.8 551.7,266.5 550.3,266.1 548.9,265.7 547.4,265.3 546.0,264.9 544.6,264.4 543.1,264.0 541.7,263.6 540.2,263.1 538.8,262.7 537.3,262.2 535.9,261.8 534.5,261.3 533.0,260.9 531.6,260.4 530.1,259.9 528.7,259.5 527.3,259.0 525.8,258.5 524.4,258.1 523.0,257.6 521.6,257.1 520.2,256.7 518.7,256.2 517.2,255.7 515.7,255.2 514.2,254.7 512.7,254.1 511.2,253.6 509.7,253.1 508.2,252.6 506.7,252.0 505.2,251.5 503.8,251.0 502.3,250.4 500.8,249.9 499.4,249.4 497.9,248.8 496.5,248.3 495.0,247.8 493.6,247.2 492.2,246.7 490.8,246.2 489.4,245.7 488.0,245.2 486.7,244.7 485.1,244.1 483.7,243.5 482.2,243.0 480.7,242.4 479.3,241.8 477.8,241.2 476.4,240.6 474.9,240.0 474.9,240.0 473.5,239.5 473.4,239.5 472.0,238.9 472.0,238.9 470.5,238.3 470.5,238.3 469.1,237.8 469.0,237.7 467.6,237.2 467.5,237.2 466.1,236.7 466.0,236.6 464.6,236.1 464.5,236.1 463.1,235.6 462.9,235.6 461.5,235.2 461.4,235.1 459.9,234.7 459.8,234.6 458.3,234.2 458.2,234.2 456.7,233.7 456.6,233.7 455.1,233.3 455.0,233.3 453.5,232.8 453.4,232.8 451.9,232.4 451.8,232.4 450.2,232.0 450.2,232.0 448.6,231.6 448.5,231.6 447.0,231.3 446.9,231.3 445.4,230.9 445.3,230.9 443.8,230.6 443.7,230.6 442.2,230.3 442.1,230.3 440.6,230.0 440.5,230.0 438.9,229.7 438.8,229.7 437.3,229.5 437.3,229.5 435.7,229.3 434.2,229.0 434.2,229.0 432.6,228.8 432.6,228.8 431.1,228.6 431.0,228.6 429.4,228.4 429.3,228.4 427.8,228.2 427.6,228.2 426.1,228.1 425.9,228.1 424.4,228.0 424.1,228.0 422.6,227.9 422.3,227.9 420.8,227.9 420.5,228.0 418.9,228.0 418.6,228.1 417.0,228.2 416.7,228.3 415.1,228.5 414.8,228.5 413.3,228.8 413.1,228.9 411.6,229.2 411.4,229.2 409.9,229.6 409.7,229.7 408.2,230.1 408.0,230.2 406.5,230.7 406.3,230.7 404.8,231.2 404.6,231.3 403.1,231.9 403.0,231.9 401.4,232.5 401.3,232.6 399.8,233.2 399.6,233.3 398.1,233.9 398.0,234.0 396.5,234.7 396.4,234.7 394.9,235.4 394.8,235.5 393.4,236.2 393.3,236.2 391.8,237.0 391.7,237.0 390.3,237.8 390.3,237.8 388.9,238.6 388.8,238.6 387.5,239.4 387.3,239.5 386.0,240.3 385.7,240.4 384.4,241.3 384.2,241.4 383.0,242.3 382.8,242.5 381.6,243.4 381.5,243.5 380.3,244.4 380.2,244.5 379.1,245.5 379.0,245.5 377.9,246.5 377.8,246.5 376.7,247.5 375.6,248.5 374.5,249.5 373.4,250.4 372.4,251.2 371.3,252.1 370.2,252.8 369.1,253.6 368.1,254.2 367.0,254.8 365.8,255.5 364.5,256.1 363.2,256.7 361.8,257.3 360.4,258.0 358.9,258.6 357.4,259.3 357.4,259.3 355.9,259.9 355.8,260.0 354.4,260.6 354.3,260.7 352.8,261.4 352.7,261.4 351.3,262.1 351.1,262.2 349.7,263.0 349.5,263.1 348.2,263.8 347.9,264.0 346.6,264.8 346.4,264.9 345.1,265.8 344.9,266.0 343.7,266.9 343.5,267.1 342.2,268.1 342.1,268.2 340.9,269.2 340.8,269.3 339.5,270.4 339.4,270.5 338.2,271.7 338.1,271.8 336.9,272.9 336.8,273.1 335.7,274.3 335.6,274.4 334.4,275.6 334.3,275.7 333.3,277.0 333.1,277.1 332.1,278.4 332.0,278.5 331.0,279.8 330.9,280.0 330.0,281.3 329.9,281.5 329.1,282.7 328.9,283.0 328.2,284.3 328.0,284.5 327.4,285.8 327.2,286.1 326.7,287.4 326.5,287.9 326.0,289.4 325.8,290.1 325.5,291.6 325.4,292.1 325.2,293.8 325.2,294.1 325.1,295.8 325.1,296.1 325.1,297.7 325.1,297.9 325.2,299.5 325.2,299.6 325.2,301.1 325.3,302.6 325.3,303.8 325.2,304.8Z" fill="none" stroke="#22d822" stroke-width="1.35"/>
<rect x="821.5" y="450" width="14" height="48" fill="#33333d"/><rect x="824.8" y="497" width="5.6" height="40" fill="#33333d"/>
<path d="M823.6,527 V448" stroke="#5b8cf2" stroke-width="2.2"/><path d="M831.6,531 V449" stroke="#5b8cf2" stroke-width="2.2"/>
<path d="M819.5,453.5 L825.5,449.5 L830.5,453.5 M819.5,459.0 L825.5,455.0 L830.5,459.0 M819.5,464.5 L825.5,460.5 L830.5,464.5 M819.5,470.0 L825.5,466.0 L830.5,470.0 M819.5,475.5 L825.5,471.5 L830.5,475.5 " stroke="#e8d800" stroke-width="1.3" fill="none"/>
<use href="#ct" fill="none" stroke="#ff1414" stroke-width="2.5"/>
<path d="M309.8,282.3 L347.9,288.8 L342.0,318.0 L304.9,311.2Z" fill="none" stroke="#ff1414" stroke-width="2.5"/>
<path d="M477.6,221.3 L514.3,236.4 L498.0,260.4 L461.6,244.8Z" fill="none" stroke="#ff1414" stroke-width="2.5"/>
<path d="M692.0,273.6 L733.6,281.4 L725.2,308.8 L684.2,299.6Z" fill="none" stroke="#ff1414" stroke-width="2.5"/>
<path d="M928.4,358.4 L963.1,349.0 L978.8,378.3 L944.8,387.7Z" fill="none" stroke="#ff1414" stroke-width="2.5"/>
<path d="M883.9,477.3 L920.2,466.1 L936.6,490.2 L900.3,503.1Z" fill="none" stroke="#ff1414" stroke-width="2.5"/>
<path d="M703.9,432.2 L745.3,440.0 L738.0,466.4 L699.5,457.6Z" fill="none" stroke="#ff1414" stroke-width="2.5"/>
<rect x="329.6" y="297.8" width="6.5" height="6.5" fill="#ff1414"/>
<rect x="481.6" y="241.6" width="6.5" height="6.5" fill="#ff1414"/>
<rect x="704.0" y="292.1" width="6.5" height="6.5" fill="#ff1414"/>
<rect x="945.1" y="366.5" width="6.5" height="6.5" fill="#ff1414"/>
<rect x="904.8" y="477.6" width="6.5" height="6.5" fill="#ff1414"/>
<rect x="719.3" y="441.3" width="6.5" height="6.5" fill="#ff1414"/>
</g>
<defs><filter id="sh" x="-20%" y="-20%" width="140%" height="140%"><feGaussianBlur stdDeviation="2"/></filter></defs>
<g filter="url(#sh)" opacity="0.55" transform="translate(3,3)"><path d="M753.4,188.2 L715.8,262.8" stroke="#000" stroke-width="4"/><path d="M709.8,274.6 L708,258.5 L723.5,267Z" fill="#000"/></g><path d="M753.4,188.2 L715.8,262.8" stroke="#ffff00" stroke-width="3.6"/><path d="M709.8,274.6 L708,258.5 L723.5,267Z" fill="#ffff00"/>
<g filter="url(#sh)" opacity="0.55" transform="translate(3,3)"><path d="M388.9,578.4 L281.9,580.5" stroke="#000" stroke-width="4"/><path d="M267,580.3 L281.9,572.8 L281.9,588.3Z" fill="#000"/></g><path d="M388.9,578.4 L281.9,580.5" stroke="#ffff00" stroke-width="3.6"/><path d="M267,580.3 L281.9,572.8 L281.9,588.3Z" fill="#ffff00"/>
<g filter="url(#sh)" opacity="0.55" transform="translate(3,3)"><path d="M796.5,594 L728.1,496.9" stroke="#000" stroke-width="4"/><path d="M719.4,484.6 L721.5,501.8 L734.8,492Z" fill="#000"/></g><path d="M796.5,594 L728.1,496.9" stroke="#ffff00" stroke-width="3.6"/><path d="M719.4,484.6 L721.5,501.8 L734.8,492Z" fill="#ffff00"/>
<text x="666" y="177" font-family="Liberation Sans" font-size="19" fill="#f2f200" letter-spacing="0.08">Tab Position Rectangles</text>
<text x="398.5" y="586" font-family="Liberation Sans" font-size="19" fill="#f2f200" letter-spacing="0.08">Holding Tab Properties</text>
<text x="748.5" y="620" font-family="Liberation Sans" font-size="19" fill="#f2f200" letter-spacing="0.08">Modified Toolpaths</text>
</svg>
<!-- message area -->
<div class="a" style="left:262px;top:673px;width:754px;height:2px;background:#a0a0a0"></div>
<div class="a" style="left:262px;top:675px;width:754px;height:65px;background:#fff"></div>
<div class="a" style="left:262px;top:688px;width:754px;height:13px;background:#3399ff"></div>
<div class="a t11" style="left:264px;top:675px;">Toolpath distance 'Profile1' : 1503.62086777302 + rapids : 0 = total : 1503.62086777302</div>
<div class="a t11" style="left:264px;top:688px;color:#fff">Estimated Toolpath 'Profile1' duration : 00:01:53 + rapids : 00:00:00 = total : 00:01:53</div>
<!-- status bar -->
<div class="a" style="left:8px;top:740px;width:1008px;height:20px;background:#f0f0f0"></div>
<div class="a" style="left:8px;top:742px;width:641px;height:17px;border-top:1px solid #a0a0a0;border-right:1px solid #fff"></div>
<div class="a" style="left:652px;top:742px;width:198px;height:17px;border-top:1px solid #a0a0a0;border-left:1px solid #a0a0a0;border-right:1px solid #fff"></div>
<div class="a" style="left:852px;top:742px;width:148px;height:17px;border-top:1px solid #a0a0a0;border-left:1px solid #a0a0a0;border-right:1px solid #fff"></div>
<div class="a t11" style="left:654px;top:744px;letter-spacing:-0.27px">Property changed</div>
<div class="a t11" style="left:914px;top:744px;letter-spacing:-0.14px">98.0000, 15.0000</div>
<svg style="left:1003px;top:747px" width="12" height="12"><path d="M11,2 L2,11 M11,6 L6,11 M11,10 L10,11" stroke="#a0a0a0" stroke-width="1.3"/></svg>
</body></html>
